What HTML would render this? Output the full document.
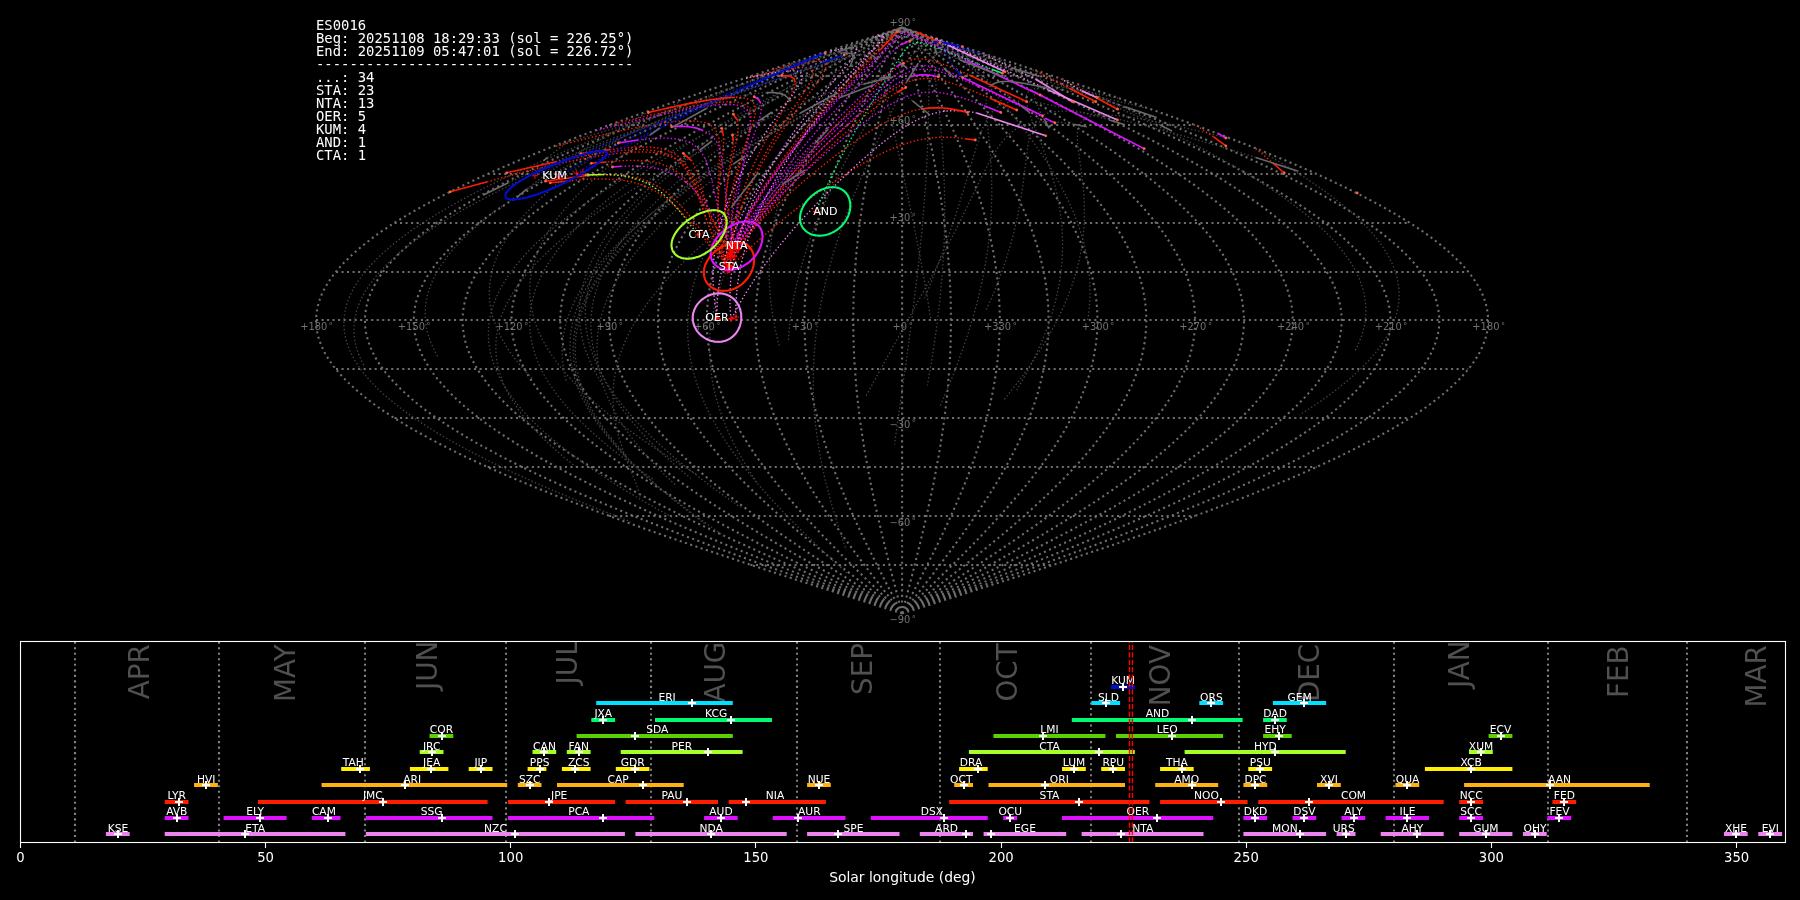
<!DOCTYPE html>
<html><head><meta charset="utf-8"><title>ES0016 meteor radiants</title>
<style>
html,body{margin:0;padding:0;background:#000;}
body{width:1800px;height:900px;overflow:hidden;}
svg{display:block;will-change:transform;}
text{font-family:"DejaVu Sans","Liberation Sans",sans-serif;}
.gl{font-size:9.9px;}
.dg{font-size:8px;}
.sl{font-size:11.1px;}
.mono text{font-family:"DejaVu Sans Mono","Liberation Mono",monospace;font-size:13.89px;}
.mon text{font-size:27.78px;}
.bl text{font-size:10.7px;}
.tl text{font-size:13.2px;}
.xl{font-size:13.89px;}
</style></head><body>
<svg width="1800" height="900" viewBox="0 0 1800 900">
<rect width="1800" height="900" fill="#000"/>
<g fill="none" stroke="#6e6e6e" stroke-width="2.08" stroke-dasharray="2.08 3.44">
<path d="M750.4 565H1053.8M609.1 516H1195.1M487.7 467H1316.5M394.5 418H1409.7M336 369H1468.2M316 320H1488.2M336 272H1468.2M394.5 223H1409.7M487.7 174H1316.5M609.1 125H1195.1M750.4 76H1053.8M902.1 613.5L922.6 607L943 600.5L963.4 594L983.7 587.5L1003.9 581L1024 574.5L1043.9 568L1063.6 561.4L1083.2 554.9L1102.6 548.4L1121.6 541.9L1140.5 535.4L1159 528.9L1177.2 522.4L1195.1 515.9L1212.7 509.3L1229.8 502.8L1246.6 496.3L1262.9 489.8L1278.8 483.3L1294.3 476.8L1309.2 470.3L1323.7 463.8L1337.6 457.3L1351.1 450.7L1363.9 444.2L1376.2 437.7L1388 431.2L1399.1 424.7L1409.7 418.2L1419.6 411.7L1428.9 405.2L1437.5 398.6L1445.5 392.1L1452.8 385.6L1459.5 379.1L1465.5 372.6L1470.8 366.1L1475.4 359.6L1479.3 353.1L1482.5 346.5L1485 340L1486.8 333.5L1487.8 327L1488.2 320.5L1487.8 314L1486.8 307.5L1485 301L1482.5 294.5L1479.3 287.9L1475.4 281.4L1470.8 274.9L1465.5 268.4L1459.5 261.9L1452.8 255.4L1445.5 248.9L1437.5 242.4L1428.9 235.8L1419.6 229.3L1409.7 222.8L1399.1 216.3L1388 209.8L1376.2 203.3L1363.9 196.8L1351.1 190.3L1337.6 183.7L1323.7 177.2L1309.2 170.7L1294.3 164.2L1278.8 157.7L1262.9 151.2L1246.6 144.7L1229.8 138.2L1212.7 131.7L1195.1 125.1L1177.2 118.6L1159 112.1L1140.5 105.6L1121.6 99.1L1102.6 92.6L1083.2 86.1L1063.6 79.6L1043.9 73L1024 66.5L1003.9 60L983.7 53.5L963.4 47L943 40.5L922.6 34L902.1 27.5M902.1 613.5L920.8 607L939.6 600.5L958.3 594L976.9 587.5L995.4 581L1013.8 574.5L1032.1 568L1050.2 561.4L1068.1 554.9L1085.8 548.4L1103.4 541.9L1120.6 535.4L1137.6 528.9L1154.3 522.4L1170.7 515.9L1186.8 509.3L1202.5 502.8L1217.9 496.3L1232.9 489.8L1247.4 483.3L1261.6 476.8L1275.3 470.3L1288.6 463.8L1301.3 457.3L1313.6 450.7L1325.5 444.2L1336.7 437.7L1347.5 431.2L1357.7 424.7L1367.4 418.2L1376.5 411.7L1385 405.2L1392.9 398.6L1400.2 392.1L1406.9 385.6L1413 379.1L1418.5 372.6L1423.4 366.1L1427.6 359.6L1431.2 353.1L1434.1 346.5L1436.4 340L1438 333.5L1439 327L1439.3 320.5L1439 314L1438 307.5L1436.4 301L1434.1 294.5L1431.2 287.9L1427.6 281.4L1423.4 274.9L1418.5 268.4L1413 261.9L1406.9 255.4L1400.2 248.9L1392.9 242.4L1385 235.8L1376.5 229.3L1367.4 222.8L1357.7 216.3L1347.5 209.8L1336.7 203.3L1325.5 196.8L1313.6 190.3L1301.3 183.7L1288.6 177.2L1275.3 170.7L1261.6 164.2L1247.4 157.7L1232.9 151.2L1217.9 144.7L1202.5 138.2L1186.8 131.7L1170.7 125.1L1154.3 118.6L1137.6 112.1L1120.6 105.6L1103.4 99.1L1085.8 92.6L1068.1 86.1L1050.2 79.6L1032.1 73L1013.8 66.5L995.4 60L976.9 53.5L958.3 47L939.6 40.5L920.8 34L902.1 27.5M902.1 613.5L919.1 607L936.2 600.5L953.2 594L970.1 587.5L986.9 581L1003.6 574.5L1020.3 568L1036.7 561.4L1053 554.9L1069.1 548.4L1085.1 541.9L1100.8 535.4L1116.2 528.9L1131.4 522.4L1146.3 515.9L1160.9 509.3L1175.2 502.8L1189.2 496.3L1202.8 489.8L1216 483.3L1228.9 476.8L1241.4 470.3L1253.4 463.8L1265.1 457.3L1276.2 450.7L1287 444.2L1297.2 437.7L1307 431.2L1316.3 424.7L1325.1 418.2L1333.3 411.7L1341.1 405.2L1348.3 398.6L1354.9 392.1L1361 385.6L1366.6 379.1L1371.6 372.6L1376 366.1L1379.8 359.6L1383.1 353.1L1385.7 346.5L1387.8 340L1389.3 333.5L1390.2 327L1390.5 320.5L1390.2 314L1389.3 307.5L1387.8 301L1385.7 294.5L1383.1 287.9L1379.8 281.4L1376 274.9L1371.6 268.4L1366.6 261.9L1361 255.4L1354.9 248.9L1348.3 242.4L1341.1 235.8L1333.3 229.3L1325.1 222.8L1316.3 216.3L1307 209.8L1297.2 203.3L1287 196.8L1276.2 190.3L1265.1 183.7L1253.4 177.2L1241.4 170.7L1228.9 164.2L1216 157.7L1202.8 151.2L1189.2 144.7L1175.2 138.2L1160.9 131.7L1146.3 125.1L1131.4 118.6L1116.2 112.1L1100.8 105.6L1085.1 99.1L1069.1 92.6L1053 86.1L1036.7 79.6L1020.3 73L1003.6 66.5L986.9 60L970.1 53.5L953.2 47L936.2 40.5L919.1 34L902.1 27.5M902.1 613.5L917.4 607L932.8 600.5L948 594L963.3 587.5L978.4 581L993.5 574.5L1008.4 568L1023.3 561.4L1037.9 554.9L1052.4 548.4L1066.8 541.9L1080.9 535.4L1094.8 528.9L1108.5 522.4L1121.9 515.9L1135 509.3L1147.9 502.8L1160.5 496.3L1172.7 489.8L1184.6 483.3L1196.2 476.8L1207.4 470.3L1218.3 463.8L1228.8 457.3L1238.8 450.7L1248.5 444.2L1257.7 437.7L1266.5 431.2L1274.9 424.7L1282.8 418.2L1290.2 411.7L1297.2 405.2L1303.7 398.6L1309.7 392.1L1315.2 385.6L1320.1 379.1L1324.6 372.6L1328.6 366.1L1332.1 359.6L1335 353.1L1337.4 346.5L1339.3 340L1340.6 333.5L1341.4 327L1341.7 320.5L1341.4 314L1340.6 307.5L1339.3 301L1337.4 294.5L1335 287.9L1332.1 281.4L1328.6 274.9L1324.6 268.4L1320.1 261.9L1315.2 255.4L1309.7 248.9L1303.7 242.4L1297.2 235.8L1290.2 229.3L1282.8 222.8L1274.9 216.3L1266.5 209.8L1257.7 203.3L1248.5 196.8L1238.8 190.3L1228.8 183.7L1218.3 177.2L1207.4 170.7L1196.2 164.2L1184.6 157.7L1172.7 151.2L1160.5 144.7L1147.9 138.2L1135 131.7L1121.9 125.1L1108.5 118.6L1094.8 112.1L1080.9 105.6L1066.8 99.1L1052.4 92.6L1037.9 86.1L1023.3 79.6L1008.4 73L993.5 66.5L978.4 60L963.3 53.5L948 47L932.8 40.5L917.4 34L902.1 27.5M902.1 613.5L915.7 607L929.4 600.5L942.9 594L956.5 587.5L969.9 581L983.3 574.5L996.6 568L1009.8 561.4L1022.8 554.9L1035.7 548.4L1048.5 541.9L1061 535.4L1073.4 528.9L1085.5 522.4L1097.5 515.9L1109.2 509.3L1120.6 502.8L1131.8 496.3L1142.7 489.8L1153.2 483.3L1163.5 476.8L1173.5 470.3L1183.2 463.8L1192.5 457.3L1201.4 450.7L1210 444.2L1218.2 437.7L1226 431.2L1233.4 424.7L1240.5 418.2L1247.1 411.7L1253.3 405.2L1259 398.6L1264.4 392.1L1269.3 385.6L1273.7 379.1L1277.7 372.6L1281.2 366.1L1284.3 359.6L1286.9 353.1L1289 346.5L1290.7 340L1291.9 333.5L1292.6 327L1292.8 320.5L1292.6 314L1291.9 307.5L1290.7 301L1289 294.5L1286.9 287.9L1284.3 281.4L1281.2 274.9L1277.7 268.4L1273.7 261.9L1269.3 255.4L1264.4 248.9L1259 242.4L1253.3 235.8L1247.1 229.3L1240.5 222.8L1233.4 216.3L1226 209.8L1218.2 203.3L1210 196.8L1201.4 190.3L1192.5 183.7L1183.2 177.2L1173.5 170.7L1163.5 164.2L1153.2 157.7L1142.7 151.2L1131.8 144.7L1120.6 138.2L1109.2 131.7L1097.5 125.1L1085.5 118.6L1073.4 112.1L1061 105.6L1048.5 99.1L1035.7 92.6L1022.8 86.1L1009.8 79.6L996.6 73L983.3 66.5L969.9 60L956.5 53.5L942.9 47L929.4 40.5L915.7 34L902.1 27.5M902.1 613.5L914 607L925.9 600.5L937.8 594L949.7 587.5L961.5 581L973.2 574.5L984.8 568L996.3 561.4L1007.7 554.9L1019 548.4L1030.2 541.9L1041.2 535.4L1052 528.9L1062.6 522.4L1073 515.9L1083.3 509.3L1093.3 502.8L1103.1 496.3L1112.6 489.8L1121.9 483.3L1130.9 476.8L1139.6 470.3L1148 463.8L1156.2 457.3L1164 450.7L1171.5 444.2L1178.7 437.7L1185.5 431.2L1192 424.7L1198.2 418.2L1204 411.7L1209.4 405.2L1214.4 398.6L1219.1 392.1L1223.4 385.6L1227.2 379.1L1230.7 372.6L1233.8 366.1L1236.5 359.6L1238.8 353.1L1240.7 346.5L1242.1 340L1243.1 333.5L1243.8 327L1244 320.5L1243.8 314L1243.1 307.5L1242.1 301L1240.7 294.5L1238.8 287.9L1236.5 281.4L1233.8 274.9L1230.7 268.4L1227.2 261.9L1223.4 255.4L1219.1 248.9L1214.4 242.4L1209.4 235.8L1204 229.3L1198.2 222.8L1192 216.3L1185.5 209.8L1178.7 203.3L1171.5 196.8L1164 190.3L1156.2 183.7L1148 177.2L1139.6 170.7L1130.9 164.2L1121.9 157.7L1112.6 151.2L1103.1 144.7L1093.3 138.2L1083.3 131.7L1073 125.1L1062.6 118.6L1052 112.1L1041.2 105.6L1030.2 99.1L1019 92.6L1007.7 86.1L996.3 79.6L984.8 73L973.2 66.5L961.5 60L949.7 53.5L937.8 47L925.9 40.5L914 34L902.1 27.5M902.1 613.5L912.3 607L922.5 600.5L932.7 594L942.9 587.5L953 581L963 574.5L973 568L982.9 561.4L992.7 554.9L1002.3 548.4L1011.9 541.9L1021.3 535.4L1030.6 528.9L1039.7 522.4L1048.6 515.9L1057.4 509.3L1066 502.8L1074.3 496.3L1082.5 489.8L1090.5 483.3L1098.2 476.8L1105.7 470.3L1112.9 463.8L1119.9 457.3L1126.6 450.7L1133 444.2L1139.2 437.7L1145 431.2L1150.6 424.7L1155.9 418.2L1160.8 411.7L1165.5 405.2L1169.8 398.6L1173.8 392.1L1177.5 385.6L1180.8 379.1L1183.8 372.6L1186.4 366.1L1188.7 359.6L1190.7 353.1L1192.3 346.5L1193.5 340L1194.4 333.5L1195 327L1195.1 320.5L1195 314L1194.4 307.5L1193.5 301L1192.3 294.5L1190.7 287.9L1188.7 281.4L1186.4 274.9L1183.8 268.4L1180.8 261.9L1177.5 255.4L1173.8 248.9L1169.8 242.4L1165.5 235.8L1160.8 229.3L1155.9 222.8L1150.6 216.3L1145 209.8L1139.2 203.3L1133 196.8L1126.6 190.3L1119.9 183.7L1112.9 177.2L1105.7 170.7L1098.2 164.2L1090.5 157.7L1082.5 151.2L1074.3 144.7L1066 138.2L1057.4 131.7L1048.6 125.1L1039.7 118.6L1030.6 112.1L1021.3 105.6L1011.9 99.1L1002.3 92.6L992.7 86.1L982.9 79.6L973 73L963 66.5L953 60L942.9 53.5L932.7 47L922.5 40.5L912.3 34L902.1 27.5M902.1 613.5L910.6 607L919.1 600.5L927.6 594L936.1 587.5L944.5 581L952.9 574.5L961.2 568L969.4 561.4L977.6 554.9L985.6 548.4L993.6 541.9L1001.4 535.4L1009.2 528.9L1016.7 522.4L1024.2 515.9L1031.5 509.3L1038.7 502.8L1045.6 496.3L1052.4 489.8L1059.1 483.3L1065.5 476.8L1071.7 470.3L1077.8 463.8L1083.6 457.3L1089.2 450.7L1094.5 444.2L1099.7 437.7L1104.6 431.2L1109.2 424.7L1113.6 418.2L1117.7 411.7L1121.6 405.2L1125.2 398.6L1128.5 392.1L1131.6 385.6L1134.3 379.1L1136.8 372.6L1139 366.1L1141 359.6L1142.6 353.1L1143.9 346.5L1145 340L1145.7 333.5L1146.2 327L1146.3 320.5L1146.2 314L1145.7 307.5L1145 301L1143.9 294.5L1142.6 287.9L1141 281.4L1139 274.9L1136.8 268.4L1134.3 261.9L1131.6 255.4L1128.5 248.9L1125.2 242.4L1121.6 235.8L1117.7 229.3L1113.6 222.8L1109.2 216.3L1104.6 209.8L1099.7 203.3L1094.5 196.8L1089.2 190.3L1083.6 183.7L1077.8 177.2L1071.7 170.7L1065.5 164.2L1059.1 157.7L1052.4 151.2L1045.6 144.7L1038.7 138.2L1031.5 131.7L1024.2 125.1L1016.7 118.6L1009.2 112.1L1001.4 105.6L993.6 99.1L985.6 92.6L977.6 86.1L969.4 79.6L961.2 73L952.9 66.5L944.5 60L936.1 53.5L927.6 47L919.1 40.5L910.6 34L902.1 27.5M902.1 613.5L908.9 607L915.7 600.5L922.5 594L929.3 587.5L936 581L942.7 574.5L949.4 568L955.9 561.4L962.5 554.9L968.9 548.4L975.3 541.9L981.6 535.4L987.7 528.9L993.8 522.4L999.8 515.9L1005.6 509.3L1011.3 502.8L1016.9 496.3L1022.4 489.8L1027.7 483.3L1032.8 476.8L1037.8 470.3L1042.6 463.8L1047.3 457.3L1051.8 450.7L1056 444.2L1060.1 437.7L1064.1 431.2L1067.8 424.7L1071.3 418.2L1074.6 411.7L1077.7 405.2L1080.6 398.6L1083.2 392.1L1085.7 385.6L1087.9 379.1L1089.9 372.6L1091.7 366.1L1093.2 359.6L1094.5 353.1L1095.6 346.5L1096.4 340L1097 333.5L1097.3 327L1097.5 320.5L1097.3 314L1097 307.5L1096.4 301L1095.6 294.5L1094.5 287.9L1093.2 281.4L1091.7 274.9L1089.9 268.4L1087.9 261.9L1085.7 255.4L1083.2 248.9L1080.6 242.4L1077.7 235.8L1074.6 229.3L1071.3 222.8L1067.8 216.3L1064.1 209.8L1060.1 203.3L1056 196.8L1051.8 190.3L1047.3 183.7L1042.6 177.2L1037.8 170.7L1032.8 164.2L1027.7 157.7L1022.4 151.2L1016.9 144.7L1011.3 138.2L1005.6 131.7L999.8 125.1L993.8 118.6L987.7 112.1L981.6 105.6L975.3 99.1L968.9 92.6L962.5 86.1L955.9 79.6L949.4 73L942.7 66.5L936 60L929.3 53.5L922.5 47L915.7 40.5L908.9 34L902.1 27.5M902.1 613.5L907.2 607L912.3 600.5L917.4 594L922.5 587.5L927.5 581L932.6 574.5L937.5 568L942.5 561.4L947.4 554.9L952.2 548.4L957 541.9L961.7 535.4L966.3 528.9L970.9 522.4L975.4 515.9L979.7 509.3L984 502.8L988.2 496.3L992.3 489.8L996.3 483.3L1000.1 476.8L1003.9 470.3L1007.5 463.8L1011 457.3L1014.3 450.7L1017.6 444.2L1020.6 437.7L1023.6 431.2L1026.4 424.7L1029 418.2L1031.5 411.7L1033.8 405.2L1036 398.6L1038 392.1L1039.8 385.6L1041.4 379.1L1042.9 372.6L1044.3 366.1L1045.4 359.6L1046.4 353.1L1047.2 346.5L1047.8 340L1048.3 333.5L1048.5 327L1048.6 320.5L1048.5 314L1048.3 307.5L1047.8 301L1047.2 294.5L1046.4 287.9L1045.4 281.4L1044.3 274.9L1042.9 268.4L1041.4 261.9L1039.8 255.4L1038 248.9L1036 242.4L1033.8 235.8L1031.5 229.3L1029 222.8L1026.4 216.3L1023.6 209.8L1020.6 203.3L1017.6 196.8L1014.3 190.3L1011 183.7L1007.5 177.2L1003.9 170.7L1000.1 164.2L996.3 157.7L992.3 151.2L988.2 144.7L984 138.2L979.7 131.7L975.4 125.1L970.9 118.6L966.3 112.1L961.7 105.6L957 99.1L952.2 92.6L947.4 86.1L942.5 79.6L937.5 73L932.6 66.5L927.5 60L922.5 53.5L917.4 47L912.3 40.5L907.2 34L902.1 27.5M902.1 613.5L905.5 607L908.9 600.5L912.3 594L915.7 587.5L919.1 581L922.4 574.5L925.7 568L929 561.4L932.3 554.9L935.5 548.4L938.7 541.9L941.8 535.4L944.9 528.9L948 522.4L950.9 515.9L953.9 509.3L956.7 502.8L959.5 496.3L962.2 489.8L964.9 483.3L967.5 476.8L970 470.3L972.4 463.8L974.7 457.3L976.9 450.7L979.1 444.2L981.1 437.7L983.1 431.2L984.9 424.7L986.7 418.2L988.3 411.7L989.9 405.2L991.3 398.6L992.7 392.1L993.9 385.6L995 379.1L996 372.6L996.9 366.1L997.6 359.6L998.3 353.1L998.8 346.5L999.2 340L999.5 333.5L999.7 327L999.8 320.5L999.7 314L999.5 307.5L999.2 301L998.8 294.5L998.3 287.9L997.6 281.4L996.9 274.9L996 268.4L995 261.9L993.9 255.4L992.7 248.9L991.3 242.4L989.9 235.8L988.3 229.3L986.7 222.8L984.9 216.3L983.1 209.8L981.1 203.3L979.1 196.8L976.9 190.3L974.7 183.7L972.4 177.2L970 170.7L967.5 164.2L964.9 157.7L962.2 151.2L959.5 144.7L956.7 138.2L953.9 131.7L950.9 125.1L948 118.6L944.9 112.1L941.8 105.6L938.7 99.1L935.5 92.6L932.3 86.1L929 79.6L925.7 73L922.4 66.5L919.1 60L915.7 53.5L912.3 47L908.9 40.5L905.5 34L902.1 27.5M902.1 613.5L903.8 607L905.5 600.5L907.2 594L908.9 587.5L910.6 581L912.3 574.5L913.9 568L915.6 561.4L917.2 554.9L918.8 548.4L920.4 541.9L922 535.4L923.5 528.9L925 522.4L926.5 515.9L928 509.3L929.4 502.8L930.8 496.3L932.2 489.8L933.5 483.3L934.8 476.8L936 470.3L937.2 463.8L938.4 457.3L939.5 450.7L940.6 444.2L941.6 437.7L942.6 431.2L943.5 424.7L944.4 418.2L945.2 411.7L946 405.2L946.7 398.6L947.4 392.1L948 385.6L948.5 379.1L949 372.6L949.5 366.1L949.9 359.6L950.2 353.1L950.5 346.5L950.7 340L950.8 333.5L950.9 327L950.9 320.5L950.9 314L950.8 307.5L950.7 301L950.5 294.5L950.2 287.9L949.9 281.4L949.5 274.9L949 268.4L948.5 261.9L948 255.4L947.4 248.9L946.7 242.4L946 235.8L945.2 229.3L944.4 222.8L943.5 216.3L942.6 209.8L941.6 203.3L940.6 196.8L939.5 190.3L938.4 183.7L937.2 177.2L936 170.7L934.8 164.2L933.5 157.7L932.2 151.2L930.8 144.7L929.4 138.2L928 131.7L926.5 125.1L925 118.6L923.5 112.1L922 105.6L920.4 99.1L918.8 92.6L917.2 86.1L915.6 79.6L913.9 73L912.3 66.5L910.6 60L908.9 53.5L907.2 47L905.5 40.5L903.8 34L902.1 27.5M902.1 613.5L902.1 607L902.1 600.5L902.1 594L902.1 587.5L902.1 581L902.1 574.5L902.1 568L902.1 561.4L902.1 554.9L902.1 548.4L902.1 541.9L902.1 535.4L902.1 528.9L902.1 522.4L902.1 515.9L902.1 509.3L902.1 502.8L902.1 496.3L902.1 489.8L902.1 483.3L902.1 476.8L902.1 470.3L902.1 463.8L902.1 457.3L902.1 450.7L902.1 444.2L902.1 437.7L902.1 431.2L902.1 424.7L902.1 418.2L902.1 411.7L902.1 405.2L902.1 398.6L902.1 392.1L902.1 385.6L902.1 379.1L902.1 372.6L902.1 366.1L902.1 359.6L902.1 353.1L902.1 346.5L902.1 340L902.1 333.5L902.1 327L902.1 320.5L902.1 314L902.1 307.5L902.1 301L902.1 294.5L902.1 287.9L902.1 281.4L902.1 274.9L902.1 268.4L902.1 261.9L902.1 255.4L902.1 248.9L902.1 242.4L902.1 235.8L902.1 229.3L902.1 222.8L902.1 216.3L902.1 209.8L902.1 203.3L902.1 196.8L902.1 190.3L902.1 183.7L902.1 177.2L902.1 170.7L902.1 164.2L902.1 157.7L902.1 151.2L902.1 144.7L902.1 138.2L902.1 131.7L902.1 125.1L902.1 118.6L902.1 112.1L902.1 105.6L902.1 99.1L902.1 92.6L902.1 86.1L902.1 79.6L902.1 73L902.1 66.5L902.1 60L902.1 53.5L902.1 47L902.1 40.5L902.1 34L902.1 27.5M902.1 613.5L900.4 607L898.7 600.5L897 594L895.3 587.5L893.6 581L891.9 574.5L890.3 568L888.6 561.4L887 554.9L885.4 548.4L883.8 541.9L882.2 535.4L880.7 528.9L879.2 522.4L877.7 515.9L876.2 509.3L874.8 502.8L873.4 496.3L872 489.8L870.7 483.3L869.4 476.8L868.2 470.3L867 463.8L865.8 457.3L864.7 450.7L863.6 444.2L862.6 437.7L861.6 431.2L860.7 424.7L859.8 418.2L859 411.7L858.2 405.2L857.5 398.6L856.8 392.1L856.2 385.6L855.7 379.1L855.2 372.6L854.7 366.1L854.3 359.6L854 353.1L853.7 346.5L853.5 340L853.4 333.5L853.3 327L853.3 320.5L853.3 314L853.4 307.5L853.5 301L853.7 294.5L854 287.9L854.3 281.4L854.7 274.9L855.2 268.4L855.7 261.9L856.2 255.4L856.8 248.9L857.5 242.4L858.2 235.8L859 229.3L859.8 222.8L860.7 216.3L861.6 209.8L862.6 203.3L863.6 196.8L864.7 190.3L865.8 183.7L867 177.2L868.2 170.7L869.4 164.2L870.7 157.7L872 151.2L873.4 144.7L874.8 138.2L876.2 131.7L877.7 125.1L879.2 118.6L880.7 112.1L882.2 105.6L883.8 99.1L885.4 92.6L887 86.1L888.6 79.6L890.3 73L891.9 66.5L893.6 60L895.3 53.5L897 47L898.7 40.5L900.4 34L902.1 27.5M902.1 613.5L898.7 607L895.3 600.5L891.9 594L888.5 587.5L885.1 581L881.8 574.5L878.5 568L875.2 561.4L871.9 554.9L868.7 548.4L865.5 541.9L862.4 535.4L859.3 528.9L856.2 522.4L853.3 515.9L850.3 509.3L847.5 502.8L844.7 496.3L842 489.8L839.3 483.3L836.7 476.8L834.2 470.3L831.8 463.8L829.5 457.3L827.3 450.7L825.1 444.2L823.1 437.7L821.1 431.2L819.3 424.7L817.5 418.2L815.9 411.7L814.3 405.2L812.9 398.6L811.5 392.1L810.3 385.6L809.2 379.1L808.2 372.6L807.3 366.1L806.6 359.6L805.9 353.1L805.4 346.5L805 340L804.7 333.5L804.5 327L804.4 320.5L804.5 314L804.7 307.5L805 301L805.4 294.5L805.9 287.9L806.6 281.4L807.3 274.9L808.2 268.4L809.2 261.9L810.3 255.4L811.5 248.9L812.9 242.4L814.3 235.8L815.9 229.3L817.5 222.8L819.3 216.3L821.1 209.8L823.1 203.3L825.1 196.8L827.3 190.3L829.5 183.7L831.8 177.2L834.2 170.7L836.7 164.2L839.3 157.7L842 151.2L844.7 144.7L847.5 138.2L850.3 131.7L853.3 125.1L856.2 118.6L859.3 112.1L862.4 105.6L865.5 99.1L868.7 92.6L871.9 86.1L875.2 79.6L878.5 73L881.8 66.5L885.1 60L888.5 53.5L891.9 47L895.3 40.5L898.7 34L902.1 27.5M902.1 613.5L897 607L891.9 600.5L886.8 594L881.7 587.5L876.7 581L871.6 574.5L866.7 568L861.7 561.4L856.8 554.9L852 548.4L847.2 541.9L842.5 535.4L837.9 528.9L833.3 522.4L828.8 515.9L824.5 509.3L820.2 502.8L816 496.3L811.9 489.8L807.9 483.3L804.1 476.8L800.3 470.3L796.7 463.8L793.2 457.3L789.9 450.7L786.6 444.2L783.6 437.7L780.6 431.2L777.8 424.7L775.2 418.2L772.7 411.7L770.4 405.2L768.2 398.6L766.2 392.1L764.4 385.6L762.8 379.1L761.3 372.6L759.9 366.1L758.8 359.6L757.8 353.1L757 346.5L756.4 340L755.9 333.5L755.7 327L755.6 320.5L755.7 314L755.9 307.5L756.4 301L757 294.5L757.8 287.9L758.8 281.4L759.9 274.9L761.3 268.4L762.8 261.9L764.4 255.4L766.2 248.9L768.2 242.4L770.4 235.8L772.7 229.3L775.2 222.8L777.8 216.3L780.6 209.8L783.6 203.3L786.6 196.8L789.9 190.3L793.2 183.7L796.7 177.2L800.3 170.7L804.1 164.2L807.9 157.7L811.9 151.2L816 144.7L820.2 138.2L824.5 131.7L828.8 125.1L833.3 118.6L837.9 112.1L842.5 105.6L847.2 99.1L852 92.6L856.8 86.1L861.7 79.6L866.7 73L871.6 66.5L876.7 60L881.7 53.5L886.8 47L891.9 40.5L897 34L902.1 27.5M902.1 613.5L895.3 607L888.5 600.5L881.7 594L874.9 587.5L868.2 581L861.5 574.5L854.8 568L848.3 561.4L841.7 554.9L835.3 548.4L828.9 541.9L822.6 535.4L816.5 528.9L810.4 522.4L804.4 515.9L798.6 509.3L792.9 502.8L787.3 496.3L781.8 489.8L776.5 483.3L771.4 476.8L766.4 470.3L761.6 463.8L756.9 457.3L752.4 450.7L748.2 444.2L744.1 437.7L740.1 431.2L736.4 424.7L732.9 418.2L729.6 411.7L726.5 405.2L723.6 398.6L721 392.1L718.5 385.6L716.3 379.1L714.3 372.6L712.5 366.1L711 359.6L709.7 353.1L708.6 346.5L707.8 340L707.2 333.5L706.9 327L706.7 320.5L706.9 314L707.2 307.5L707.8 301L708.6 294.5L709.7 287.9L711 281.4L712.5 274.9L714.3 268.4L716.3 261.9L718.5 255.4L721 248.9L723.6 242.4L726.5 235.8L729.6 229.3L732.9 222.8L736.4 216.3L740.1 209.8L744.1 203.3L748.2 196.8L752.4 190.3L756.9 183.7L761.6 177.2L766.4 170.7L771.4 164.2L776.5 157.7L781.8 151.2L787.3 144.7L792.9 138.2L798.6 131.7L804.4 125.1L810.4 118.6L816.5 112.1L822.6 105.6L828.9 99.1L835.3 92.6L841.7 86.1L848.3 79.6L854.8 73L861.5 66.5L868.2 60L874.9 53.5L881.7 47L888.5 40.5L895.3 34L902.1 27.5M902.1 613.5L893.6 607L885.1 600.5L876.6 594L868.1 587.5L859.7 581L851.3 574.5L843 568L834.8 561.4L826.6 554.9L818.6 548.4L810.6 541.9L802.8 535.4L795 528.9L787.5 522.4L780 515.9L772.7 509.3L765.5 502.8L758.6 496.3L751.8 489.8L745.1 483.3L738.7 476.8L732.5 470.3L726.4 463.8L720.6 457.3L715 450.7L709.7 444.2L704.5 437.7L699.6 431.2L695 424.7L690.6 418.2L686.5 411.7L682.6 405.2L679 398.6L675.7 392.1L672.6 385.6L669.9 379.1L667.4 372.6L665.2 366.1L663.2 359.6L661.6 353.1L660.3 346.5L659.2 340L658.5 333.5L658 327L657.9 320.5L658 314L658.5 307.5L659.2 301L660.3 294.5L661.6 287.9L663.2 281.4L665.2 274.9L667.4 268.4L669.9 261.9L672.6 255.4L675.7 248.9L679 242.4L682.6 235.8L686.5 229.3L690.6 222.8L695 216.3L699.6 209.8L704.5 203.3L709.7 196.8L715 190.3L720.6 183.7L726.4 177.2L732.5 170.7L738.7 164.2L745.1 157.7L751.8 151.2L758.6 144.7L765.5 138.2L772.7 131.7L780 125.1L787.5 118.6L795 112.1L802.8 105.6L810.6 99.1L818.6 92.6L826.6 86.1L834.8 79.6L843 73L851.3 66.5L859.7 60L868.1 53.5L876.6 47L885.1 40.5L893.6 34L902.1 27.5M902.1 613.5L891.9 607L881.7 600.5L871.5 594L861.3 587.5L851.2 581L841.2 574.5L831.2 568L821.3 561.4L811.5 554.9L801.9 548.4L792.3 541.9L782.9 535.4L773.6 528.9L764.5 522.4L755.6 515.9L746.8 509.3L738.2 502.8L729.9 496.3L721.7 489.8L713.7 483.3L706 476.8L698.5 470.3L691.3 463.8L684.3 457.3L677.6 450.7L671.2 444.2L665 437.7L659.2 431.2L653.6 424.7L648.3 418.2L643.4 411.7L638.7 405.2L634.4 398.6L630.4 392.1L626.7 385.6L623.4 379.1L620.4 372.6L617.8 366.1L615.5 359.6L613.5 353.1L611.9 346.5L610.7 340L609.8 333.5L609.2 327L609.1 320.5L609.2 314L609.8 307.5L610.7 301L611.9 294.5L613.5 287.9L615.5 281.4L617.8 274.9L620.4 268.4L623.4 261.9L626.7 255.4L630.4 248.9L634.4 242.4L638.7 235.8L643.4 229.3L648.3 222.8L653.6 216.3L659.2 209.8L665 203.3L671.2 196.8L677.6 190.3L684.3 183.7L691.3 177.2L698.5 170.7L706 164.2L713.7 157.7L721.7 151.2L729.9 144.7L738.2 138.2L746.8 131.7L755.6 125.1L764.5 118.6L773.6 112.1L782.9 105.6L792.3 99.1L801.9 92.6L811.5 86.1L821.3 79.6L831.2 73L841.2 66.5L851.2 60L861.3 53.5L871.5 47L881.7 40.5L891.9 34L902.1 27.5M902.1 613.5L890.2 607L878.3 600.5L866.4 594L854.5 587.5L842.7 581L831 574.5L819.4 568L807.9 561.4L796.5 554.9L785.2 548.4L774 541.9L763 535.4L752.2 528.9L741.6 522.4L731.2 515.9L720.9 509.3L710.9 502.8L701.1 496.3L691.6 489.8L682.3 483.3L673.3 476.8L664.6 470.3L656.2 463.8L648 457.3L640.2 450.7L632.7 444.2L625.5 437.7L618.7 431.2L612.2 424.7L606 418.2L600.2 411.7L594.8 405.2L589.8 398.6L585.1 392.1L580.8 385.6L577 379.1L573.5 372.6L570.4 366.1L567.7 359.6L565.4 353.1L563.5 346.5L562.1 340L561.1 333.5L560.4 327L560.2 320.5L560.4 314L561.1 307.5L562.1 301L563.5 294.5L565.4 287.9L567.7 281.4L570.4 274.9L573.5 268.4L577 261.9L580.8 255.4L585.1 248.9L589.8 242.4L594.8 235.8L600.2 229.3L606 222.8L612.2 216.3L618.7 209.8L625.5 203.3L632.7 196.8L640.2 190.3L648 183.7L656.2 177.2L664.6 170.7L673.3 164.2L682.3 157.7L691.6 151.2L701.1 144.7L710.9 138.2L720.9 131.7L731.2 125.1L741.6 118.6L752.2 112.1L763 105.6L774 99.1L785.2 92.6L796.5 86.1L807.9 79.6L819.4 73L831 66.5L842.7 60L854.5 53.5L866.4 47L878.3 40.5L890.2 34L902.1 27.5M902.1 613.5L888.5 607L874.8 600.5L861.3 594L847.7 587.5L834.3 581L820.9 574.5L807.6 568L794.4 561.4L781.4 554.9L768.5 548.4L755.7 541.9L743.2 535.4L730.8 528.9L718.7 522.4L706.7 515.9L695 509.3L683.6 502.8L672.4 496.3L661.5 489.8L651 483.3L640.7 476.8L630.7 470.3L621 463.8L611.7 457.3L602.8 450.7L594.2 444.2L586 437.7L578.2 431.2L570.8 424.7L563.7 418.2L557.1 411.7L550.9 405.2L545.2 398.6L539.8 392.1L534.9 385.6L530.5 379.1L526.5 372.6L523 366.1L519.9 359.6L517.3 353.1L515.2 346.5L513.5 340L512.3 333.5L511.6 327L511.4 320.5L511.6 314L512.3 307.5L513.5 301L515.2 294.5L517.3 287.9L519.9 281.4L523 274.9L526.5 268.4L530.5 261.9L534.9 255.4L539.8 248.9L545.2 242.4L550.9 235.8L557.1 229.3L563.7 222.8L570.8 216.3L578.2 209.8L586 203.3L594.2 196.8L602.8 190.3L611.7 183.7L621 177.2L630.7 170.7L640.7 164.2L651 157.7L661.5 151.2L672.4 144.7L683.6 138.2L695 131.7L706.7 125.1L718.7 118.6L730.8 112.1L743.2 105.6L755.7 99.1L768.5 92.6L781.4 86.1L794.4 79.6L807.6 73L820.9 66.5L834.3 60L847.7 53.5L861.3 47L874.8 40.5L888.5 34L902.1 27.5M902.1 613.5L886.8 607L871.4 600.5L856.2 594L840.9 587.5L825.8 581L810.7 574.5L795.8 568L780.9 561.4L766.3 554.9L751.8 548.4L737.4 541.9L723.3 535.4L709.4 528.9L695.7 522.4L682.3 515.9L669.2 509.3L656.3 502.8L643.7 496.3L631.5 489.8L619.6 483.3L608 476.8L596.8 470.3L585.9 463.8L575.4 457.3L565.4 450.7L555.7 444.2L546.5 437.7L537.7 431.2L529.3 424.7L521.4 418.2L514 411.7L507 405.2L500.5 398.6L494.5 392.1L489 385.6L484.1 379.1L479.6 372.6L475.6 366.1L472.1 359.6L469.2 353.1L466.8 346.5L464.9 340L463.6 333.5L462.8 327L462.5 320.5L462.8 314L463.6 307.5L464.9 301L466.8 294.5L469.2 287.9L472.1 281.4L475.6 274.9L479.6 268.4L484.1 261.9L489 255.4L494.5 248.9L500.5 242.4L507 235.8L514 229.3L521.4 222.8L529.3 216.3L537.7 209.8L546.5 203.3L555.7 196.8L565.4 190.3L575.4 183.7L585.9 177.2L596.8 170.7L608 164.2L619.6 157.7L631.5 151.2L643.7 144.7L656.3 138.2L669.2 131.7L682.3 125.1L695.7 118.6L709.4 112.1L723.3 105.6L737.4 99.1L751.8 92.6L766.3 86.1L780.9 79.6L795.8 73L810.7 66.5L825.8 60L840.9 53.5L856.2 47L871.4 40.5L886.8 34L902.1 27.5M902.1 613.5L885.1 607L868 600.5L851 594L834.1 587.5L817.3 581L800.6 574.5L783.9 568L767.5 561.4L751.2 554.9L735.1 548.4L719.1 541.9L703.4 535.4L688 528.9L672.8 522.4L657.9 515.9L643.3 509.3L629 502.8L615 496.3L601.4 489.8L588.2 483.3L575.3 476.8L562.8 470.3L550.8 463.8L539.1 457.3L528 450.7L517.2 444.2L507 437.7L497.2 431.2L487.9 424.7L479.1 418.2L470.9 411.7L463.1 405.2L455.9 398.6L449.3 392.1L443.2 385.6L437.6 379.1L432.6 372.6L428.2 366.1L424.4 359.6L421.1 353.1L418.5 346.5L416.4 340L414.9 333.5L414 327L413.7 320.5L414 314L414.9 307.5L416.4 301L418.5 294.5L421.1 287.9L424.4 281.4L428.2 274.9L432.6 268.4L437.6 261.9L443.2 255.4L449.3 248.9L455.9 242.4L463.1 235.8L470.9 229.3L479.1 222.8L487.9 216.3L497.2 209.8L507 203.3L517.2 196.8L528 190.3L539.1 183.7L550.8 177.2L562.8 170.7L575.3 164.2L588.2 157.7L601.4 151.2L615 144.7L629 138.2L643.3 131.7L657.9 125.1L672.8 118.6L688 112.1L703.4 105.6L719.1 99.1L735.1 92.6L751.2 86.1L767.5 79.6L783.9 73L800.6 66.5L817.3 60L834.1 53.5L851 47L868 40.5L885.1 34L902.1 27.5M902.1 613.5L883.4 607L864.6 600.5L845.9 594L827.3 587.5L808.8 581L790.4 574.5L772.1 568L754 561.4L736.1 554.9L718.4 548.4L700.8 541.9L683.6 535.4L666.6 528.9L649.9 522.4L633.5 515.9L617.4 509.3L601.7 502.8L586.3 496.3L571.3 489.8L556.8 483.3L542.6 476.8L528.9 470.3L515.6 463.8L502.9 457.3L490.6 450.7L478.7 444.2L467.5 437.7L456.7 431.2L446.5 424.7L436.8 418.2L427.7 411.7L419.2 405.2L411.3 398.6L404 392.1L397.3 385.6L391.2 379.1L385.7 372.6L380.8 366.1L376.6 359.6L373 353.1L370.1 346.5L367.8 340L366.2 333.5L365.2 327L364.9 320.5L365.2 314L366.2 307.5L367.8 301L370.1 294.5L373 287.9L376.6 281.4L380.8 274.9L385.7 268.4L391.2 261.9L397.3 255.4L404 248.9L411.3 242.4L419.2 235.8L427.7 229.3L436.8 222.8L446.5 216.3L456.7 209.8L467.5 203.3L478.7 196.8L490.6 190.3L502.9 183.7L515.6 177.2L528.9 170.7L542.6 164.2L556.8 157.7L571.3 151.2L586.3 144.7L601.7 138.2L617.4 131.7L633.5 125.1L649.9 118.6L666.6 112.1L683.6 105.6L700.8 99.1L718.4 92.6L736.1 86.1L754 79.6L772.1 73L790.4 66.5L808.8 60L827.3 53.5L845.9 47L864.6 40.5L883.4 34L902.1 27.5M902.1 613.5L881.6 607L861.2 600.5L840.8 594L820.5 587.5L800.3 581L780.2 574.5L760.3 568L740.6 561.4L721 554.9L701.6 548.4L682.6 541.9L663.7 535.4L645.2 528.9L627 522.4L609.1 515.9L591.5 509.3L574.4 502.8L557.6 496.3L541.3 489.8L525.4 483.3L509.9 476.8L495 470.3L480.5 463.8L466.6 457.3L453.1 450.7L440.3 444.2L428 437.7L416.2 431.2L405.1 424.7L394.5 418.2L384.6 411.7L375.3 405.2L366.7 398.6L358.7 392.1L351.4 385.6L344.7 379.1L338.7 372.6L333.4 366.1L328.8 359.6L324.9 353.1L321.7 346.5L319.2 340L317.4 333.5L316.4 327L316 320.5L316.4 314L317.4 307.5L319.2 301L321.7 294.5L324.9 287.9L328.8 281.4L333.4 274.9L338.7 268.4L344.7 261.9L351.4 255.4L358.7 248.9L366.7 242.4L375.3 235.8L384.6 229.3L394.5 222.8L405.1 216.3L416.2 209.8L428 203.3L440.3 196.8L453.1 190.3L466.6 183.7L480.5 177.2L495 170.7L509.9 164.2L525.4 157.7L541.3 151.2L557.6 144.7L574.4 138.2L591.5 131.7L609.1 125.1L627 118.6L645.2 112.1L663.7 105.6L682.6 99.1L701.6 92.6L721 86.1L740.6 79.6L760.3 73L780.2 66.5L800.3 60L820.5 53.5L840.8 47L861.2 40.5L881.6 34L902.1 27.5"/>
</g>
<g fill="#727272">
<text x="316.5" y="330.1" text-anchor="middle" class="gl">+180<tspan class="dg" dx="1.6" dy="-1.4">°</tspan></text>
<text x="414.2" y="330.1" text-anchor="middle" class="gl">+150<tspan class="dg" dx="1.6" dy="-1.4">°</tspan></text>
<text x="511.9" y="330.1" text-anchor="middle" class="gl">+120<tspan class="dg" dx="1.6" dy="-1.4">°</tspan></text>
<text x="609.6" y="330.1" text-anchor="middle" class="gl">+90<tspan class="dg" dx="1.6" dy="-1.4">°</tspan></text>
<text x="707.2" y="330.1" text-anchor="middle" class="gl">+60<tspan class="dg" dx="1.6" dy="-1.4">°</tspan></text>
<text x="804.9" y="330.1" text-anchor="middle" class="gl">+30<tspan class="dg" dx="1.6" dy="-1.4">°</tspan></text>
<text x="902.6" y="330.1" text-anchor="middle" class="gl">+0<tspan class="dg" dx="1.6" dy="-1.4">°</tspan></text>
<text x="1000.3" y="330.1" text-anchor="middle" class="gl">+330<tspan class="dg" dx="1.6" dy="-1.4">°</tspan></text>
<text x="1098" y="330.1" text-anchor="middle" class="gl">+300<tspan class="dg" dx="1.6" dy="-1.4">°</tspan></text>
<text x="1195.6" y="330.1" text-anchor="middle" class="gl">+270<tspan class="dg" dx="1.6" dy="-1.4">°</tspan></text>
<text x="1293.3" y="330.1" text-anchor="middle" class="gl">+240<tspan class="dg" dx="1.6" dy="-1.4">°</tspan></text>
<text x="1391" y="330.1" text-anchor="middle" class="gl">+210<tspan class="dg" dx="1.6" dy="-1.4">°</tspan></text>
<text x="1488.7" y="330.1" text-anchor="middle" class="gl">+180<tspan class="dg" dx="1.6" dy="-1.4">°</tspan></text>
<text x="902.6" y="25.9" text-anchor="middle" class="gl">+90<tspan class="dg" dx="1.6" dy="-1.4">°</tspan></text>
<text x="902.6" y="123.5" text-anchor="middle" class="gl">+60<tspan class="dg" dx="1.6" dy="-1.4">°</tspan></text>
<text x="902.6" y="221.2" text-anchor="middle" class="gl">+30<tspan class="dg" dx="1.6" dy="-1.4">°</tspan></text>
<text x="902.6" y="427.8" text-anchor="middle" class="gl">−30<tspan class="dg" dx="1.6" dy="-1.4">°</tspan></text>
<text x="902.6" y="525.5" text-anchor="middle" class="gl">−60<tspan class="dg" dx="1.6" dy="-1.4">°</tspan></text>
<text x="902.6" y="623.1" text-anchor="middle" class="gl">−90<tspan class="dg" dx="1.6" dy="-1.4">°</tspan></text>
</g>
<g fill="none" stroke-width="1.3" stroke-dasharray="1.39 2.29">
<path d="M508.3 182.8L515.1 179.6L522.1 176.4L529.1 173.2L536.3 170L543.5 166.9L550.8 163.7L558.3 160.5L565.8 157.3L573.5 154.1L581.2 151L589 147.8L596.8 144.7L604.8 141.5L612.8 138.4L620.9 135.2L629.1 132.1L637.3 128.9L645.6 125.8L653.9 122.7L662.3 119.6L670.7 116.5L679.2 113.4L687.7 110.3L696.2 107.3L704.7 104.2L713.2 101.2L721.8 98.2L730.3 95.2L738.9 92.3L747.4 89.3L755.8 86.4L764.2 83.6L772.5 80.7L780.8 78L788.9 75.3L796.9 72.6L804.7 70.1L812.3 67.6L819.6 65.3L826.7 63.1L833.4 61.1L839.7 59.3L845.5 57.7L850.8 56.4L855.6 55.5L859.8 54.8L863.4 54.6L866.5 54.7L869 55.3L871.2 56.1L873 57.4L874.5 58.9L875.8 60.6L876.9 62.6L877.9 64.7L878.8 67L879.6 69.4L880.4 72L881.2 74.6L881.9 77.3L882.6 80L883.3 82.8L884 85.7L884.6 88.6L885.3 91.5L886 94.5L886.6 97.4L887.3 100.4L887.9 103.5L888.6 106.5L889.2 109.6L889.9 112.6L890.6 115.7L891.2 118.8L891.9 121.9L892.6 125L893.2 128.1L893.9 131.3L894.6 134.4L895.2 137.5L895.9 140.7L896.6 143.8L897.3 147L898 150.2L898.6 153.3L899.3 156.5L900 159.7L900.7 162.9L901.4 166L902.1 169.2L902.7 172.4L903.4 175.6L904.1 178.8L904.8 182L905.5 185.2L906.2 188.4L906.8 191.6L907.5 194.8L908.2 198L908.9 201.2L909.5 204.4L910.2 207.6L910.9 210.8L911.6 214L912.2 217.2L912.9 220.4L913.5 223.6L914.2 226.8L914.8 230.1L915.5 233.3L916.1 236.5L916.8 239.7L917.4 242.9L918 246.1L918.7 249.3L919.3 252.6L919.9 255.8L920.5 259L921.1 262.2L921.7 265.4L922.3 268.7L922.9 271.9L923.5 275.1L924 278.3L924.6 281.5L925.2 284.8L925.7 288L926.3 291.2L926.8 294.4L927.4 297.7L927.9 300.9L928.4 304.1L928.9 307.3L929.4 310.5L929.9 313.8L930.4 317L930.9 320.2" stroke="#454545"/>
<path d="M526.7 189.2L530.4 186.2L534.3 183.3L538.2 180.3L542.1 177.4L546.2 174.5L550.3 171.6L554.4 168.7L558.7 165.8L562.9 162.9L567.3 160L571.6 157.2L576.1 154.4L580.5 151.6L585 148.8L589.5 146L594 143.3L598.5 140.5L603.1 137.8L607.6 135.2L612.1 132.5L616.6 129.9L621.1 127.4L625.5 124.8L629.9 122.3L634.1 119.9L638.4 117.5L642.5 115.1L646.5 112.8L650.4 110.6M1147.1 108.4L1138.6 106.3L1130.4 104.3L1122.3 102.4L1114.5 100.5L1107 98.8L1099.7 97.1L1092.7 95.6L1085.9 94.2L1079.6 92.9L1073.5 91.7L1067.8 90.7L1062.5 89.8L1057.6 89.1L1053 88.6L1048.9 88.2L1045.1 88L1041.8 87.9L1038.8 88.1L1036.1 88.3L1033.8 88.8L1031.9 89.4L1030.3 90.2L1029 91.1L1027.9 92.2L1027.1 93.4L1026.5 94.8L1026.2 96.2L1026 97.8L1026 99.5L1026.2 101.3L1026.5 103.2L1026.9 105.2L1027.5 107.2L1028.1 109.4L1028.8 111.6L1029.5 113.8L1030.4 116.1L1031.3 118.5L1032.2 120.9L1033.2 123.4L1034.2 125.9L1035.2 128.5L1036.2 131L1037.3 133.7L1038.3 136.3L1039.4 139L1040.4 141.7L1041.5 144.4L1042.6 147.2L1043.6 150L1044.6 152.8L1045.6 155.6L1046.6 158.4L1047.6 161.3L1048.6 164.1L1049.5 167L1050.4 169.9L1051.3 172.8L1052.2 175.7L1053 178.7L1053.8 181.6L1054.6 184.6L1055.4 187.5L1056.1 190.5L1056.8 193.5L1057.4 196.4L1058 199.4L1058.6 202.4L1059.1 205.4L1059.6 208.4L1060.1 211.5L1060.5 214.5L1060.9 217.5L1061.3 220.5L1061.6 223.6L1061.8 226.6L1062.1 229.7L1062.2 232.7L1062.4 235.8L1062.5 238.8L1062.5 241.9L1062.6 245L1062.5 248L1062.5 251.1L1062.4 254.2L1062.2 257.2L1062 260.3L1061.8 263.4L1061.5 266.5L1061.2 269.6L1060.8 272.6L1060.4 275.7L1060 278.8L1059.5 281.9L1058.9 285L1058.3 288.1L1057.7 291.2L1057.1 294.3L1056.3 297.4L1055.6 300.5L1054.8 303.6L1054 306.6L1053.1 309.7L1052.2 312.8L1051.2 315.9L1050.2 319L1049.2 322.1L1048.1 325.2L1047 328.3L1045.8 331.4L1044.6 334.5L1043.4 337.6L1042.1 340.7L1040.8 343.8L1039.4 346.9L1038 350L1036.6 353.1L1035.1 356.2L1033.6 359.3L1032.1 362.4L1030.5 365.4L1028.9 368.5L1027.2 371.6L1025.6 374.7L1023.8 377.8L1022.1 380.9L1020.3 383.9L1018.5 387L1016.7 390.1" stroke="#454545"/>
<path d="M547.5 157.5L550.5 155.2L553.4 152.9L556.3 150.7L559.1 148.5L561.9 146.4L564.6 144.3L567.3 142.2L569.8 140.2M1228.2 138.2L1220.6 136.3L1213.2 134.5L1205.8 132.7L1198.6 131L1191.6 129.4L1184.7 127.8L1178 126.3L1171.5 124.9L1165.2 123.5L1159 122.3L1153.1 121.1L1147.4 120L1141.9 119L1136.7 118.2L1131.6 117.4L1126.9 116.7L1122.3 116.1L1118 115.7L1114 115.3L1110.2 115.1L1106.6 114.9L1103.3 114.9L1100.3 115L1097.4 115.2L1094.8 115.5L1092.5 116L1090.3 116.5L1088.4 117.1L1086.6 117.9L1085 118.7L1083.6 119.7L1082.4 120.7L1081.4 121.9L1080.4 123.1L1079.7 124.4L1079 125.8L1078.5 127.3L1078.1 128.8L1077.7 130.5L1077.5 132.2L1077.3 133.9L1077.3 135.7L1077.3 137.6L1077.3 139.6L1077.4 141.6L1077.6 143.6L1077.8 145.7L1078 147.8L1078.3 150L1078.6 152.2L1078.9 154.5L1079.2 156.8L1079.5 159.1L1079.9 161.4L1080.2 163.8L1080.6 166.2L1080.9 168.7L1081.3 171.2L1081.6 173.7L1081.9 176.2L1082.2 178.7L1082.5 181.3L1082.8 183.9L1083.1 186.5L1083.3 189.1L1083.6 191.7L1083.8 194.4L1083.9 197.1L1084.1 199.7L1084.2 202.4L1084.3 205.2L1084.4 207.9L1084.4 210.6L1084.4 213.4L1084.4 216.1L1084.3 218.9L1084.2 221.7L1084.1 224.5L1083.9 227.2L1083.7 230.1L1083.4 232.9L1083.2 235.7L1082.8 238.5L1082.5 241.3L1082.1 244.2L1081.6 247L1081.2 249.9L1080.6 252.7L1080.1 255.6L1079.5 258.5L1078.8 261.3L1078.2 264.2L1077.4 267.1L1076.7 270L1075.9 272.9L1075 275.7L1074.2 278.6L1073.2 281.5L1072.3 284.4L1071.3 287.3L1070.2 290.2L1069.1 293.1L1068 296L1066.8 298.9L1065.6 301.9L1064.4 304.8L1063.1 307.7L1061.8 310.6L1060.4 313.5L1059 316.4L1057.6 319.3L1056.1 322.2L1054.6 325.2L1053 328.1L1051.4 331L1049.8 333.9L1048.1 336.8L1046.4 339.7L1044.7 342.6L1042.9 345.5L1041.1 348.4L1039.3 351.3L1037.4 354.2L1035.5 357.1L1033.6 360L1031.6 362.9L1029.6 365.8L1027.6 368.7L1025.6 371.6L1023.5 374.5L1021.4 377.4L1019.2 380.2L1017.1 383.1L1014.9 386L1012.7 388.8L1010.4 391.7L1008.2 394.5L1005.9 397.4L1003.6 400.2" stroke="#454545"/>
<path d="M706.7 108.3L712.4 105.3L718 102.3L723.7 99.3L729.4 96.3L735 93.4L740.6 90.5L746.2 87.6L751.7 84.8L757 82L762.3 79.3L767.5 76.6L772.4 74L777.2 71.5L781.7 69.2L785.8 66.9L789.5 64.8L792.7 62.8M1005.6 61.1L998.1 59.6L991.5 58.4L985.8 57.4L981 56.9L977.1 56.6L974.1 56.7L972.1 57.2L970.8 58.1L970.2 59.2L970.2 60.6L970.7 62.3L971.6 64.2L972.9 66.2L974.4 68.5L976.1 70.8L978 73.3L980.1 75.8L982.3 78.5L984.5 81.2L986.8 83.9L989.2 86.7L991.6 89.6L994.1 92.5L996.5 95.4L999 98.4L1001.5 101.4L1004 104.4L1006.5 107.4L1009 110.4L1011.4 113.5L1013.9 116.6L1016.4 119.6L1018.8 122.7L1021.2 125.8L1023.6 128.9L1025.9 132.1L1028.3 135.2L1030.6 138.3L1032.9 141.5L1035.1 144.6L1037.3 147.8L1039.5 151L1041.6 154.1L1043.8 157.3L1045.8 160.5L1047.9 163.6L1049.9 166.8L1051.8 170L1053.7 173.2L1055.6 176.4L1057.4 179.6L1059.2 182.8L1060.9 186L1062.6 189.2L1064.3 192.4L1065.9 195.6L1067.4 198.8L1068.9 202L1070.4 205.2L1071.8 208.4L1073.2 211.6L1074.5 214.8L1075.7 218.1L1077 221.3L1078.1 224.5L1079.2 227.7L1080.3 230.9L1081.3 234.1L1082.2 237.4L1083.1 240.6L1084 243.8L1084.7 247L1085.5 250.3L1086.2 253.5L1086.8 256.7L1087.3 259.9L1087.9 263.2L1088.3 266.4L1088.7 269.6L1089.1 272.8L1089.4 276.1L1089.6 279.3L1089.8 282.5L1089.9 285.8L1090 289L1090 292.2L1089.9 295.4L1089.8 298.7L1089.7 301.9L1089.4 305.1L1089.2 308.4L1088.8 311.6L1088.5 314.8L1088 318.1L1087.5 321.3" stroke="#454545"/>
<path d="M766.7 92.5L763 92.7L758.9 93.1L754.6 93.7L749.9 94.4L744.9 95.2L739.7 96.2L734.1 97.3L728.2 98.5L722.1 99.8L715.7 101.3L709.1 102.9L702.2 104.5L695.1 106.3L687.9 108.2L680.4 110.1L672.8 112.1L665.1 114.2L657.2 116.3L649.1 118.5L641 120.8L632.8 123.1L624.5 125.5L616.1 127.9L607.6 130.3L599.2 132.8L590.6 135.3L582.1 137.9L573.5 140.5L564.9 143.1L556.3 145.8M1255.8 148.5L1260.6 151.2L1265.5 153.9L1270.3 156.6L1275.1 159.4L1279.9 162.2L1284.6 165L1289.3 167.8L1293.9 170.6L1298.4 173.5L1302.9 176.3L1307.3 179.2L1311.6 182.1L1315.9 185L1320.1 187.9L1324.2 190.8L1328.2 193.7L1332.1 196.6L1336 199.6L1339.7 202.5L1343.4 205.5L1346.9 208.4L1350.4 211.4L1353.7 214.4L1357 217.4L1360.1 220.4L1363.1 223.3L1366 226.3L1368.8 229.3L1371.5 232.4L1374.1 235.4L1376.5 238.4L1378.8 241.4L1381 244.4L1383.1 247.4L1385.1 250.5L1386.9 253.5L1388.6 256.5L1390.2 259.6L1391.7 262.6L1393 265.7L1394.2 268.7L1395.2 271.8L1396.2 274.8L1397 277.9L1397.7 280.9L1398.2 284L1398.6 287L1398.9 290.1L1399.1 293.1L1399.1 296.2L1398.9 299.3L1398.7 302.3L1398.3 305.4L1397.8 308.4L1397.1 311.5L1396.3 314.6L1395.4 317.6L1394.4 320.7L1393.2 323.7L1391.9 326.8L1390.4 329.9L1388.8 332.9L1387.1 336L1385.3 339.1L1383.3 342.1L1381.2 345.2L1379 348.2L1376.6 351.3L1374.1 354.3L1371.5 357.4L1368.8 360.5L1365.9 363.5L1362.9 366.6L1359.8 369.6L1356.6 372.7L1353.3 375.7L1349.8 378.7L1346.2 381.8L1342.5 384.8L1338.7 387.9L1334.8 390.9L1330.7 393.9L1326.6 396.9L1322.3 400L1318 403L1313.5 406L1308.9 409L1304.3 412L1299.5 415" stroke="#454545"/>
<path d="M800 113.3L795.2 116.1L790.4 118.8L785.5 121.6L780.7 124.5L775.9 127.3L771 130.2L766.2 133.1L761.4 136L756.6 139L751.8 141.9L747.1 144.9L742.3 147.9L737.6 150.9L733 153.9L728.3 156.9L723.7 159.9L719.1 163L714.6 166L710.1 169.1L705.7 172.1L701.3 175.2L696.9 178.3L692.6 181.3L688.3 184.4L684.1 187.5L680 190.6L675.9 193.7L671.9 196.8L667.9 199.9L664 203L660.1 206.2L656.4 209.3L652.6 212.4L649 215.5L645.4 218.7L641.9 221.8L638.5 224.9L635.1 228.1L631.8 231.2L628.6 234.4L625.4 237.5L622.4 240.7L619.4 243.8L616.5 247L613.6 250.1L610.9 253.3L608.2 256.4L605.7 259.6L603.2 262.7L600.7 265.9L598.4 269L596.2 272.2L594 275.4L592 278.5L590 281.7L588.1 284.9L586.3 288L584.6 291.2L583 294.4L581.5 297.5L580.1 300.7L578.7 303.9L577.5 307L576.3 310.2L575.3 313.4L574.3 316.5L573.5 319.7L572.7 322.9L572 326L571.4 329.2L570.9 332.4L570.5 335.5L570.3 338.7L570.1 341.9L570 345.1L569.9 348.2L570 351.4L570.2 354.6L570.5 357.7L570.9 360.9L571.3 364L571.9 367.2L572.6 370.4L573.3 373.5L574.2 376.7L575.1 379.8L576.1 383L577.3 386.2L578.5 389.3L579.8 392.5L581.2 395.6L582.7 398.8L584.3 401.9L585.9 405.1L587.7 408.2L589.5 411.4L591.5 414.5L593.5 417.6L595.6 420.8L597.8 423.9L600 427L602.4 430.2L604.8 433.3L607.3 436.4L609.9 439.5L612.6 442.6L615.3 445.7L618.1 448.8L621 451.9L624 455L627 458.1L630.1 461.2L633.3 464.3L636.5 467.3L639.8 470.4L643.1 473.5L646.5 476.5L650 479.5L653.5 482.6L657.1 485.6L660.7 488.6L664.3 491.6L668 494.6L671.8 497.6L675.5 500.5L679.3 503.5L683.2 506.4L687 509.3L690.9 512.2L694.7 515.1L698.6 517.9L702.5 520.8L706.4 523.6L710.2 526.3L714 529.1L717.8 531.8L721.6 534.4L725.3 537" stroke="#454545"/>
<path d="M840 97.5L835.7 99.5L831.3 101.6L826.9 103.8L822.4 106.1L817.8 108.4L813.2 110.7L808.6 113.2L803.9 115.7L799.3 118.2L794.5 120.8L789.8 123.4L785 126L780.3 128.7L775.5 131.4L770.7 134.2L765.9 136.9L761.2 139.7L756.4 142.5L751.6 145.4L746.9 148.2L742.2 151.1L737.4 154L732.8 156.9L728.1 159.8L723.5 162.7L718.9 165.7L714.3 168.6L709.8 171.6L705.3 174.6L700.8 177.5L696.4 180.5L692 183.5L687.7 186.5L683.4 189.6L679.2 192.6L675.1 195.6L670.9 198.7L666.9 201.7L662.9 204.8L658.9 207.8L655 210.9L651.2 213.9L647.5 217L643.8 220.1L640.2 223.2L636.6 226.2L633.1 229.3L629.7 232.4L626.3 235.5L623.1 238.6L619.9 241.7L616.8 244.8L613.7 247.9L610.8 251L607.9 254.1L605.1 257.2L602.4 260.3L599.7 263.4L597.2 266.6L594.7 269.7L592.3 272.8L590 275.9L587.8 279L585.7 282.2L583.6 285.3L581.7 288.4L579.8 291.5L578.1 294.7L576.4 297.8L574.8 300.9L573.3 304L571.9 307.2L570.6 310.3L569.4 313.4L568.2 316.5L567.2 319.7L566.3 322.8L565.4 325.9L564.7 329.1L564 332.2L563.5 335.3L563 338.4L562.7 341.6L562.4 344.7L562.2 347.8L562.1 350.9L562.1 354.1L562.3 357.2L562.5 360.3L562.8 363.4L563.2 366.6L563.6 369.7L564.2 372.8L564.9 375.9L565.7 379L566.5 382.1" stroke="#454545"/>
<path d="M863.3 84.2L859.4 85.9L855.3 87.7L851.2 89.6L847 91.6L842.8 93.7L838.5 95.9L834.1 98.2L829.6 100.5L825.2 102.9L820.6 105.4L816.1 107.9L811.5 110.5L806.8 113.1L802.2 115.7L797.5 118.4L792.9 121.1L788.2 123.9L783.5 126.7L778.8 129.5L774.1 132.3L769.4 135.1L764.7 138L760.1 140.9L755.4 143.8L750.8 146.7L746.2 149.7L741.6 152.6L737 155.6L732.5 158.5L728 161.5L723.6 164.5L719.1 167.5L714.7 170.5L710.4 173.6L706.1 176.6L701.8 179.6L697.6 182.7L693.4 185.7L689.3 188.8L685.3 191.8L681.3 194.9L677.3 198L673.4 201.1L669.6 204.1L665.8 207.2L662.1 210.3L658.4 213.4L654.8 216.5L651.3 219.6L647.8 222.7L644.4 225.8L641.1 228.9L637.8 232L634.7 235.2L631.5 238.3L628.5 241.4L625.6 244.5L622.7 247.6L619.9 250.8L617.1 253.9L614.5 257L611.9 260.1L609.4 263.3L607 266.4L604.7 269.5L602.5 272.7L600.3 275.8L598.2 278.9L596.2 282.1L594.3 285.2L592.5 288.4L590.8 291.5L589.2 294.6L587.6 297.8L586.2 300.9L584.8 304.1L583.5 307.2L582.3 310.4L581.2 313.5L580.2 316.6L579.3 319.8L578.5 322.9L577.8 326.1L577.1 329.2L576.6 332.4L576.1 335.5L575.7 338.6L575.5 341.8L575.3 344.9L575.2 348.1L575.2 351.2L575.3 354.4L575.5 357.5L575.8 360.6L576.2 363.8L576.6 366.9L577.2 370L577.8 373.2L578.6 376.3L579.4 379.4L580.3 382.6L581.4 385.7L582.5 388.8L583.6 392L584.9 395.1L586.3 398.2L587.7 401.3L589.3 404.4L590.9 407.6L592.6 410.7L594.4 413.8L596.3 416.9L598.2 420L600.3 423.1L602.4 426.2L604.6 429.3L606.9 432.4L609.2 435.5L611.6 438.5L614.1 441.6L616.7 444.7L619.4 447.8L622.1 450.8L624.9 453.9L627.7 456.9" stroke="#454545"/>
<path d="M815 143.3L812.1 146.5L809.2 149.6L806.3 152.8L803.5 156L800.6 159.2L797.8 162.4L795.1 165.6L792.3 168.8L789.6 172L786.9 175.2L784.3 178.4L781.7 181.6L779.1 184.8L776.6 188.1L774.1 191.3L771.6 194.5L769.2 197.7L766.8 200.9L764.4 204.2L762.1 207.4L759.9 210.6L757.6 213.9L755.4 217.1L753.3 220.3L751.2 223.5L749.1 226.8L747.1 230L745.2 233.2L743.3 236.5L741.4 239.7L739.6 243L737.8 246.2L736.1 249.4L734.4 252.7L732.8 255.9L731.2 259.2L729.7 262.4L728.2 265.6L726.8 268.9L725.5 272.1L724.2 275.4L722.9 278.6L721.7 281.9L720.6 285.1L719.5 288.4L718.4 291.6L717.5 294.8L716.5 298.1L715.7 301.3L714.9 304.6L714.1 307.8L713.4 311.1L712.8 314.3L712.2 317.6L711.7 320.8L711.2 324.1L710.8 327.3L710.4 330.5L710.1 333.8L709.9 337L709.7 340.3L709.6 343.5L709.5 346.8L709.5 350L709.6 353.3L709.7 356.5L709.9 359.8L710.1 363L710.4 366.2L710.7 369.5L711.1 372.7L711.6 376L712.1 379.2L712.7 382.5L713.3 385.7L714 388.9L714.7 392.2L715.5 395.4L716.4 398.7L717.3 401.9L718.3 405.1L719.3 408.4L720.4 411.6L721.5 414.8L722.7 418.1L723.9 421.3L725.2 424.5L726.6 427.8L728 431L729.4 434.2L730.9 437.4L732.5 440.7L734.1 443.9L735.7 447.1L737.4 450.3L739.2 453.5L740.9 456.8L742.8 460L744.7 463.2L746.6 466.4L748.6 469.6L750.6 472.8L752.6 476L754.7 479.2L756.8 482.4" stroke="#454545"/>
<path d="M733.3 164.2L729.1 167.3L724.9 170.4L720.8 173.5L716.8 176.6L712.7 179.7L708.7 182.8L704.8 185.9L700.9 189L697.1 192.1L693.3 195.3L689.6 198.4L686 201.5L682.4 204.7L678.8 207.8L675.3 211L671.9 214.1L668.5 217.3L665.3 220.4L662 223.6L658.9 226.7L655.8 229.9L652.8 233.1L649.8 236.2L646.9 239.4L644.1 242.6L641.4 245.7L638.7 248.9L636.1 252.1L633.6 255.2L631.2 258.4L628.8 261.6L626.6 264.8L624.4 268L622.3 271.1L620.2 274.3L618.3 277.5L616.4 280.7L614.6 283.9L612.9 287.1L611.3 290.2L609.8 293.4L608.3 296.6L606.9 299.8L605.7 303L604.5 306.2L603.4 309.4L602.4 312.5L601.4 315.7L600.6 318.9L599.8 322.1L599.2 325.3L598.6 328.5L598.1 331.7L597.7 334.9L597.4 338L597.2 341.2L597 344.4L597 347.6L597 350.8L597.2 354L597.4 357.2L597.7 360.3L598.1 363.5L598.6 366.7L599.2 369.9L599.8 373.1L600.6 376.2L601.4 379.4L602.3 382.6L603.3 385.8L604.4 389L605.6 392.1L606.9 395.3L608.2 398.5L609.7 401.6L611.2 404.8L612.8 408L614.5 411.1L616.2 414.3L618.1 417.5L620 420.6L622 423.8L624.1 426.9L626.2 430.1L628.5 433.2L630.8 436.4L633.1 439.5L635.6 442.6L638.1 445.8L640.7 448.9L643.4 452L646.1 455.1L648.9 458.3L651.7 461.4L654.7 464.5L657.6 467.6L660.7 470.7L663.8 473.7L666.9 476.8L670.1 479.9L673.4 483L676.7 486" stroke="#454545"/>
<path d="M843.3 52.5L838.6 53.1L832.9 54.1L826.4 55.5L819 57.1L811 59L802.3 61.2L793.2 63.4L783.7 65.9M1029.2 68.4L1035.2 71.1L1041.5 73.8L1047.9 76.6L1054.5 79.5L1061.2 82.4L1067.9 85.3L1074.7 88.3L1081.6 91.3L1088.4 94.3L1095.3 97.3L1102.1 100.4L1109 103.5L1115.8 106.6L1122.6 109.7L1129.4 112.8L1136.2 116L1142.9 119.1L1149.5 122.3L1156.1 125.4L1162.7 128.6L1169.1 131.8L1175.6 135L1181.9 138.2L1188.2 141.3L1194.4 144.5L1200.5 147.7L1206.6 150.9L1212.5 154.2L1218.4 157.4L1224.2 160.6L1229.9 163.8L1235.5 167L1241 170.2L1246.4 173.5L1251.7 176.7L1257 179.9L1262.1 183.1L1267.1 186.4L1272 189.6L1276.8 192.8L1281.5 196.1L1286 199.3L1290.5 202.6L1294.8 205.8L1299.1 209L1303.2 212.3L1307.1 215.5L1311 218.8L1314.7 222L1318.4 225.3L1321.9 228.5L1325.2 231.7L1328.5 235L1331.6 238.2L1334.6 241.5L1337.4 244.7L1340.1 248L1342.7 251.2L1345.2 254.5L1347.5 257.7L1349.7 261L1351.7 264.2L1353.6 267.5L1355.4 270.7L1357.1 274L1358.6 277.2L1359.9 280.5L1361.1 283.8L1362.2 287L1363.2 290.3L1364 293.5L1364.6 296.8L1365.2 300L1365.5 303.3L1365.8 306.5L1365.9 309.8L1365.8 313L1365.6 316.3L1365.3 319.5L1364.9 322.8L1364.3 326.1L1363.5 329.3L1362.6 332.6L1361.6 335.8L1360.4 339.1L1359.1 342.3L1357.7 345.6L1356.1 348.8L1354.4 352.1" stroke="#454545"/>
<path d="M838.3 51.7L829.1 54.8L819.8 57.9L810.4 61.1L801 64.3L791.6 67.5L782.2 70.7L772.8 73.9L763.4 77.1L754.1 80.4L744.8 83.6L735.5 86.8L726.2 90.1L717 93.3L707.9 96.6L698.8 99.8L689.7 103.1L680.8 106.3L671.8 109.6L663 112.9L654.2 116.1L645.5 119.4L636.9 122.6L628.3 125.9L619.8 129.2L611.5 132.4L603.2 135.7L595 139L586.8 142.2L578.8 145.5L570.9 148.8L563.1 152L555.4 155.3L547.7 158.6L540.2 161.8L532.8 165.1L525.6 168.4L518.4 171.7L511.3 174.9L504.4 178.2L497.6 181.5L490.9 184.7L484.4 188L477.9 191.3L471.6 194.5L465.5 197.8L459.4 201.1L453.5 204.4L447.8 207.6L442.2 210.9L436.7 214.2L431.3 217.5L426.2 220.7L421.1 224L416.2 227.3L411.5 230.5L406.9 233.8L402.4 237.1L398.1 240.4L394 243.6L390 246.9L386.2 250.2L382.5 253.5L379 256.7L375.7 260L372.5 263.3L369.5 266.5L366.6 269.8L364 273.1L361.4 276.4L359.1 279.6L356.9 282.9L354.9 286.2L353 289.5L351.3 292.7L349.8 296L348.5 299.3L347.3 302.6L346.3 305.8L345.5 309.1L344.8 312.4L344.3 315.7L344 318.9L343.9 322.2L343.9 325.5L344.1 328.7L344.5 332L345 335.3L345.7 338.6L346.6 341.8L347.7 345.1L348.9 348.4L350.3 351.7L351.9 354.9L353.6 358.2L355.5 361.5L357.6 364.8L359.8 368L362.2 371.3L364.8 374.6L367.5 377.9L370.4 381.1L373.5 384.4L376.7 387.7L380.1 390.9L383.7 394.2L387.4 397.5L391.3 400.8L395.3 404L399.5 407.3L403.8 410.6L408.3 413.9L413 417.1L417.8 420.4L422.7 423.7L427.8 427L433 430.2L438.4 433.5L443.9 436.8L449.6 440L455.4 443.3L461.4 446.6L467.4 449.9L473.6 453.1L480 456.4L486.4 459.7L493 462.9L499.8 466.2L506.6 469.5L513.6 472.8L520.7 476L527.9 479.3L535.2 482.6L542.6 485.8L550.1 489.1L557.8 492.4L565.5 495.6L573.4 498.9L581.3 502.2L589.4 505.4L597.5 508.7L605.8 512L614.1 515.2L622.5 518.5L631 521.8" stroke="#454545"/>
<path d="M960 60L953.7 57.7L947.8 55.6L942.2 53.8L937 52.2L932.4 51L928.2 50.2L924.6 49.9L921.4 50L918.7 50.6L916.2 51.6L914 53L911.9 54.7L909.9 56.7L908 58.9L906.1 61.2L904.2 63.7L902.3 66.4L900.5 69.1L898.6 71.8L896.7 74.7L894.8 77.6L892.9 80.5L891 83.5L889.1 86.5L887.2 89.5L885.3 92.6L883.4 95.7L881.5 98.7L879.7 101.8L877.8 105L875.9 108.1L874 111.2L872.1 114.4L870.2 117.5L868.4 120.7L866.5 123.9L864.6 127L862.8 130.2L861 133.4L859.1 136.6L857.3 139.8L855.5 143L853.7 146.2L852 149.4L850.2 152.6L848.5 155.8L846.7 159L845 162.2L843.3 165.4L841.6 168.7L840 171.9L838.3 175.1L836.7 178.3L835.1 181.5L833.5 184.8L831.9 188L830.4 191.2L828.8 194.5L827.3 197.7L825.8 200.9L824.4 204.2L822.9 207.4L821.5 210.6L820.1 213.9L818.8 217.1L817.4 220.3L816.1 223.6L814.8 226.8L813.5 230L812.3 233.3L811.1 236.5L809.9 239.8L808.8 243L807.6 246.2L806.5 249.5L805.5 252.7L804.4 256L803.4 259.2L802.4 262.5L801.5 265.7L800.5 268.9L799.7 272.2L798.8 275.4L798 278.7L797.2 281.9L796.4 285.2L795.7 288.4L795 291.6L794.3 294.9L793.7 298.1L793 301.4L792.5 304.6L791.9 307.9L791.4 311.1L791 314.4L790.5 317.6L790.1 320.9L789.7 324.1L789.4 327.3L789.1 330.6L788.8 333.8L788.6 337.1L788.4 340.3" stroke="#454545"/>
<path d="M990.8 85.8L989.7 87.1L988.7 88.5L988 90.1L987.4 91.8L986.9 93.6L986.6 95.5L986.3 97.5L986.2 99.6L986.1 101.7L986.1 104L986.2 106.3L986.3 108.7L986.4 111.1L986.6 113.6L986.8 116.1L987 118.7L987.2 121.3L987.5 123.9L987.8 126.6L988 129.3L988.3 132L988.6 134.8L988.8 137.6L989.1 140.4L989.4 143.2L989.6 146.1L989.9 148.9L990.1 151.8L990.3 154.7L990.5 157.6L990.7 160.5L990.9 163.5L991.1 166.4L991.2 169.4L991.4 172.4L991.5 175.3L991.6 178.3L991.7 181.3L991.7 184.3L991.7 187.4L991.8 190.4L991.8 193.4L991.7 196.4L991.7 199.5L991.6 202.5L991.5 205.6L991.4 208.6L991.3 211.7L991.1 214.8L990.9 217.8L990.7 220.9L990.5 224L990.2 227.1L990 230.1L989.7 233.2L989.3 236.3L989 239.4L988.6 242.5L988.2 245.6L987.8 248.7L987.4 251.8L986.9 254.9L986.4 258L985.9 261.1L985.4 264.2L984.8 267.3L984.3 270.4L983.7 273.6L983.1 276.7L982.4 279.8L981.7 282.9L981.1 286L980.3 289.1L979.6 292.3L978.9 295.4L978.1 298.5L977.3 301.6L976.5 304.7L975.6 307.9L974.8 311L973.9 314.1L973 317.2L972.1 320.4L971.1 323.5L970.2 326.6L969.2 329.7L968.2 332.9L967.2 336L966.2 339.1L965.1 342.2L964 345.3L962.9 348.5L961.8 351.6L960.7 354.7L959.6 357.8L958.4 360.9L957.3 364L956.1 367.2L954.9 370.3L953.7 373.4L952.5 376.5L951.2 379.6L950 382.7L948.7 385.8L947.4 388.9L946.1 392L944.8 395.1L943.5 398.2L942.2 401.3L940.8 404.4L939.5 407.5" stroke="#454545"/>
<path d="M1012.5 68.3L1003.6 65.7L995 63.2L986.7 60.8L978.8 58.6L971.4 56.5L964.5 54.8L958.3 53.3L952.8 52.1L948.1 51.3L944.2 51L941.2 51.1L938.8 51.7L937.1 52.6L935.9 54L935.1 55.6L934.6 57.5L934.3 59.7L934.2 62L934.2 64.4L934.3 67L934.5 69.7L934.7 72.4L934.9 75.2L935.2 78.1L935.6 81L935.9 83.9L936.2 86.9L936.6 89.9L937 92.9L937.3 96L937.7 99.1L938 102.2L938.4 105.2L938.7 108.4L939.1 111.5L939.4 114.6L939.7 117.8L940 120.9L940.3 124.1L940.6 127.2L940.9 130.4L941.2 133.6L941.5 136.7L941.8 139.9L942 143.1L942.3 146.3L942.5 149.5L942.7 152.7L942.9 155.9L943.1 159.1L943.3 162.3L943.5 165.5L943.7 168.7L943.8 171.9L943.9 175.2L944.1 178.4L944.2 181.6L944.3 184.8L944.4 188L944.5 191.3L944.5 194.5L944.6 197.7L944.6 200.9L944.7 204.2L944.7 207.4L944.7 210.6L944.7 213.9L944.7 217.1L944.6 220.3L944.6 223.5L944.5 226.8L944.4 230L944.4 233.2L944.3 236.5L944.2 239.7L944 243L943.9 246.2L943.8 249.4L943.6 252.7L943.4 255.9L943.2 259.1L943 262.4L942.8 265.6L942.6 268.9L942.4 272.1L942.1 275.3L941.9 278.6L941.6 281.8L941.3 285.1L941 288.3L940.7 291.5L940.4 294.8L940.1 298L939.7 301.3L939.4 304.5L939 307.7L938.7 311L938.3 314.2L937.9 317.5L937.5 320.7L937.1 323.9L936.6 327.2L936.2 330.4L935.7 333.7L935.3 336.9L934.8 340.2L934.3 343.4L933.8 346.6L933.3 349.9L932.8 353.1L932.3 356.4L931.8 359.6L931.3 362.8L930.7 366.1L930.2 369.3L929.6 372.6L929 375.8L928.5 379L927.9 382.3L927.3 385.5" stroke="#454545"/>
<path d="M1125 106.7L1115.8 103.6L1106.5 100.5L1097.2 97.5L1087.9 94.4L1078.7 91.4L1069.4 88.4L1060.2 85.4L1051 82.5L1041.9 79.5L1032.9 76.7L1023.9 73.9L1015.1 71.1L1006.5 68.5L998.1 65.9L989.9 63.4L982.1 61.1L974.6 58.9L967.6 56.9L961.1 55.2L955.2 53.8L950 52.7L945.5 52L941.8 51.7L938.8 51.9L936.4 52.5L934.6 53.5L933.2 54.8L932.1 56.5L931.3 58.4L930.7 60.5L930.3 62.8L929.9 65.2L929.7 67.8L929.5 70.4L929.3 73.1L929.2 75.9L929.1 78.8L929 81.7L929 84.6L928.9 87.6L928.9 90.6L928.8 93.6L928.8 96.6L928.7 99.7L928.7 102.8L928.6 105.9L928.6 109L928.5 112.1L928.4 115.2L928.4 118.4L928.3 121.5L928.2 124.7L928.1 127.8L928 131L927.9 134.1L927.8 137.3L927.7 140.5L927.6 143.7L927.5 146.9L927.4 150.1L927.2 153.3L927.1 156.5L926.9 159.7L926.8 162.9L926.6 166.1L926.4 169.3L926.2 172.5L926.1 175.7L925.9 178.9L925.7 182.2L925.5 185.4L925.3 188.6L925 191.8L924.8 195L924.6 198.3L924.3 201.5L924.1 204.7L923.8 208L923.6 211.2L923.3 214.4L923 217.6L922.8 220.9L922.5 224.1L922.2 227.3L921.9 230.6L921.6 233.8L921.3 237.1L921 240.3L920.6 243.5L920.3 246.8L920 250L919.7 253.2L919.3 256.5L919 259.7L918.6 263L918.3 266.2L917.9 269.4L917.5 272.7L917.2 275.9L916.8 279.2L916.4 282.4L916 285.6L915.6 288.9L915.2 292.1L914.8 295.4L914.4 298.6L914 301.8L913.6 305.1L913.2 308.3L912.8 311.6L912.4 314.8L912 318.1L911.6 321.3L911.1 324.5L910.7 327.8L910.3 331L909.8 334.3L909.4 337.5L909 340.8L908.5 344L908.1 347.2L907.6 350.5L907.2 353.7L906.7 357L906.3 360.2L905.8 363.4L905.4 366.7L904.9 369.9L904.5 373.2L904 376.4L903.6 379.6L903.1 382.9L902.7 386.1L902.2 389.4L901.7 392.6L901.3 395.8L900.8 399.1L900.4 402.3L899.9 405.5L899.5 408.8L899 412L898.6 415.2L898.1 418.5L897.7 421.7L897.2 424.9L896.8 428.2L896.3 431.4L895.9 434.6L895.4 437.9L895 441.1L894.6 444.3" stroke="#454545"/>
<path d="M1109.2 120L1102.7 118.1L1096.3 116.3L1090.1 114.6L1084 112.9L1078 111.4L1072.3 109.9L1066.7 108.5L1061.3 107.3L1056.1 106.1L1051.1 105.1L1046.3 104.1L1041.7 103.3L1037.4 102.7L1033.2 102.1L1029.3 101.7L1025.6 101.4L1022.1 101.2L1018.8 101.2L1015.7 101.4L1012.8 101.6L1010.2 102L1007.6 102.5L1005.3 103.2L1003.1 104L1001.1 104.9L999.2 105.9L997.5 107L995.8 108.3L994.3 109.6L992.9 111.1L991.5 112.6L990.2 114.3L989.1 116L987.9 117.8L986.9 119.6L985.8 121.6L984.9 123.6L983.9 125.6L983 127.8L982.1 129.9L981.3 132.2L980.5 134.5L979.6 136.8L978.8 139.1L978.1 141.5L977.3 144L976.5 146.4L975.7 148.9L975 151.5L974.2 154L973.4 156.6L972.7 159.3L971.9 161.9L971.1 164.6L970.3 167.2L969.5 169.9L968.7 172.7L967.9 175.4L967.1 178.1L966.3 180.9L965.4 183.7L964.6 186.5L963.8 189.3L962.9 192.1L962 195L961.1 197.8L960.2 200.7L959.3 203.5L958.4 206.4L957.5 209.3L956.5 212.2L955.6 215.1L954.6 218L953.6 220.9L952.6 223.8L951.6 226.8L950.6 229.7L949.6 232.6L948.6 235.6L947.5 238.5L946.5 241.5L945.4 244.5L944.3 247.4L943.2 250.4L942.1 253.4L941 256.3L939.9 259.3L938.8 262.3L937.6 265.3L936.5 268.3L935.3 271.3L934.2 274.3L933 277.3L931.8 280.3L930.6 283.3L929.5 286.3L928.3 289.3L927 292.3L925.8 295.3L924.6 298.3" stroke="#454545"/>
<path d="M1073.3 124.2L1069 123.5L1065 123L1061 122.5L1057.2 122.1L1053.6 121.9L1050.1 121.7L1046.7 121.6L1043.5 121.7L1040.5 121.8L1037.5 122.1L1034.8 122.4L1032.1 122.9L1029.6 123.4L1027.1 124.1L1024.8 124.8L1022.6 125.7L1020.5 126.6L1018.5 127.6L1016.5 128.7L1014.7 129.9L1012.9 131.2L1011.2 132.5L1009.6 133.9L1008 135.4L1006.4 137L1004.9 138.6L1003.5 140.3L1002.1 142L1000.7 143.8L999.4 145.7L998 147.6L996.8 149.5L995.5 151.5L994.2 153.6L993 155.7L991.8 157.8L990.5 160L989.3 162.2L988.1 164.4L986.9 166.7L985.7 169L984.5 171.3L983.3 173.7L982.1 176.1L980.9 178.5L979.7 180.9L978.5 183.4L977.3 185.9L976.1 188.4L974.9 190.9L973.6 193.4L972.4 196L971.1 198.6L969.9 201.2L968.6 203.8L967.3 206.4L966 209L964.8 211.7L963.4 214.3L962.1 217L960.8 219.7L959.5 222.4L958.1 225.1L956.8 227.8L955.4 230.6L954 233.3L952.6 236L951.2 238.8L949.8 241.6L948.4 244.3L947 247.1L945.6 249.9L944.1 252.7L942.7 255.5L941.2 258.3L939.7 261.1L938.2 263.9L936.8 266.7L935.3 269.5L933.8 272.3L932.3 275.2L930.7 278L929.2 280.8L927.7 283.6L926.2 286.5L924.6 289.3L923.1 292.2L921.5 295L920 297.9L918.4 300.7L916.8 303.6L915.3 306.4L913.7 309.3L912.1 312.1L910.6 315L909 317.8L907.4 320.7L905.8 323.5L904.3 326.4L902.7 329.2L901.1 332.1L899.5 334.9L897.9 337.8L896.4 340.6L894.8 343.5L893.2 346.3L891.6 349.2L890.1 352L888.5 354.9L886.9 357.7L885.4 360.5L883.8 363.4L882.3 366.2L880.7 369L879.2 371.8L877.6 374.7L876.1 377.5L874.6 380.3L873.1 383.1L871.5 385.9L870 388.7L868.5 391.5L867 394.2L865.5 397" stroke="#454545"/>
<path d="M1044.2 119.2L1042.9 116.8L1041.6 114.4L1040.4 112.1L1039.3 109.8L1038.2 107.6L1037.3 105.4L1036.4 103.4L1035.7 101.4L1035.1 99.5L1034.7 97.7L1034.4 96.1L1034.4 94.5L1034.5 93L1035 91.7L1035.6 90.5L1036.6 89.5L1037.8 88.6L1039.5 87.9L1041.4 87.3L1043.8 86.9L1046.5 86.7L1049.7 86.6L1053.2 86.8L1057.2 87.1L1061.7 87.5L1066.5 88.2L1071.8 89L1077.5 89.9L1083.6 91L1090.1 92.3L1096.9 93.6L1104.1 95.1L1111.5 96.8L1119.3 98.5M681.2 100.3L678.3 102.2L675.3 104.2L672 106.3L668.6 108.5L665 110.7L661.3 113L657.5 115.4L653.6 117.8L649.6 120.2L645.5 122.7L641.4 125.3L637.2 127.9L633 130.5L628.8 133.1L624.5 135.8L620.3 138.5L616.1 141.2L611.8 144L607.6 146.8L603.4 149.6L599.2 152.4L595.1 155.2L591 158.1L586.9 161L582.9 163.9L578.9 166.8L575 169.7L571.2 172.6L567.4 175.5L563.6 178.5L560 181.5L556.4 184.4L552.8 187.4L549.4 190.4L546 193.4L542.8 196.4L539.5 199.4L536.4 202.4L533.4 205.4L530.5 208.5L527.6 211.5L524.8 214.5L522.2 217.6L519.6 220.6L517.1 223.7L514.7 226.7L512.5 229.8L510.3 232.9L508.2 235.9L506.3 239L504.4 242.1L502.6 245.2L501 248.2L499.4 251.3L498 254.4L496.6 257.5L495.4 260.6L494.3 263.7L493.3 266.8L492.4 269.9L491.7 273L491 276.1L490.4 279.2L490 282.3L489.7 285.4L489.5 288.5L489.4 291.6L489.4 294.7L489.5 297.8L489.8 300.9L490.1 304L490.6 307.1L491.2 310.2L491.9 313.3L492.7 316.5L493.6 319.6L494.7 322.7L495.8 325.8L497.1 328.9L498.5 332L500 335.1L501.6 338.2L503.3 341.3L505.1 344.4L507.1 347.6L509.1 350.7L511.3 353.8L513.5 356.9L515.9 360L518.4 363.1L521 366.2L523.6 369.3L526.4 372.4L529.3 375.5L532.3 378.6" stroke="#454545"/>
<path d="M912.5 100.8L909.7 98.8L906.9 96.8L904.2 95L901.4 93.2L898.6 91.6L895.8 90.1L893 88.7L890.2 87.4L887.4 86.3L884.5 85.4L881.6 84.7L878.6 84.1L875.5 83.6L872.4 83.4L869.1 83.4L865.8 83.5L862.3 83.8L858.7 84.3L855 85L851.2 85.8L847.2 86.8L843.1 88L838.8 89.3L834.5 90.7L830 92.3L825.3 94L820.6 95.8L815.7 97.7L810.8 99.7L805.7 101.8L800.6 103.9L795.4 106.2L790.1 108.5L784.8 110.8L779.4 113.2L774 115.7L768.5 118.2L763 120.7L757.5 123.3L751.9 126L746.4 128.6L740.8 131.3L735.2 134L729.6 136.8L724 139.6L718.4 142.4L712.9 145.2L707.3 148L701.8 150.9L696.3 153.7L690.8 156.6L685.4 159.5L680 162.4L674.6 165.4L669.2 168.3L663.9 171.3L658.7 174.2L653.5 177.2L648.4 180.2L643.3 183.2L638.2 186.2L633.3 189.2L628.3 192.2L623.5 195.2L618.7 198.2L614 201.3L609.3 204.3L604.7 207.4L600.2 210.4L595.8 213.5L591.5 216.5L587.2 219.6L583 222.7L578.9 225.7L574.9 228.8L570.9 231.9L567.1 235L563.3 238L559.6 241.1L556.1 244.2L552.6 247.3L549.2 250.4L545.9 253.5L542.7 256.6L539.6 259.7L536.6 262.8L533.7 265.9L530.9 269L528.2 272.1L525.6 275.2L523.1 278.4L520.7 281.5L518.4 284.6L516.2 287.7L514.1 290.8L512.2 293.9L510.3 297L508.6 300.2L507 303.3L505.4 306.4L504 309.5L502.7 312.6L501.5 315.8L500.4 318.9L499.5 322L498.6 325.1L497.9 328.2L497.3 331.4L496.7 334.5L496.3 337.6L496.1 340.7L495.9 343.8L495.8 346.9L495.9 350.1L496 353.2L496.3 356.3L496.7 359.4L497.2 362.5L497.8 365.6L498.5 368.7L499.4 371.8L500.3 375L501.4 378.1L502.6 381.2L503.8 384.3L505.2 387.4L506.7 390.5L508.3 393.6L510 396.6L511.8 399.7L513.8 402.8L515.8 405.9L517.9 409L520.1 412.1L522.4 415.1L524.9 418.2L527.4 421.3L530 424.3L532.7 427.4L535.5 430.5L538.4 433.5L541.4 436.6L544.5 439.6L547.7 442.6L550.9 445.7L554.2 448.7L557.6 451.7L561.1 454.7L564.7 457.7L568.3 460.7L572 463.7L575.8 466.6" stroke="#454545"/>
<path d="M906.7 81.7L905.2 84.5L903.7 87.3L902.2 90.2L900.7 93.1L899.3 96.1L897.8 99L896.3 102L894.8 105.1L893.3 108.1L891.8 111.1L890.3 114.2L888.8 117.3L887.3 120.4L885.9 123.5L884.4 126.6L882.9 129.7L881.4 132.8L880 136L878.5 139.1L877.1 142.2L875.6 145.4L874.2 148.5L872.7 151.7L871.3 154.9L869.9 158L868.5 161.2L867.1 164.4L865.7 167.6L864.3 170.7L862.9 173.9L861.5 177.1L860.2 180.3L858.9 183.5L857.5 186.7L856.2 189.9L854.9 193.1L853.6 196.3L852.4 199.5L851.1 202.7L849.8 205.9L848.6 209.1L847.4 212.3L846.2 215.5L845 218.7L843.9 221.9L842.7 225.1L841.6 228.4L840.5 231.6L839.4 234.8L838.3 238L837.2 241.2L836.2 244.4L835.2 247.6L834.2 250.9L833.2 254.1L832.2 257.3L831.3 260.5L830.4 263.7L829.5 267L828.6 270.2L827.8 273.4L826.9 276.6L826.1 279.9L825.4 283.1L824.6 286.3L823.9 289.5L823.1 292.7L822.4 296L821.8 299.2L821.1 302.4L820.5 305.6L819.9 308.9L819.3 312.1L818.8 315.3L818.3 318.5L817.8 321.8L817.3 325L816.9 328.2L816.4 331.4L816.1 334.7L815.7 337.9L815.3 341.1L815 344.3L814.7 347.5L814.5 350.8L814.2 354L814 357.2L813.8 360.4L813.7 363.7L813.5 366.9L813.4 370.1L813.3 373.3L813.3 376.5L813.3 379.8L813.3 383L813.3 386.2L813.3 389.4L813.4 392.6L813.5 395.9L813.6 399.1L813.8 402.3L814 405.5L814.2 408.7L814.4 411.9L814.7 415.1L815 418.4L815.3 421.6L815.6 424.8L816 428L816.4 431.2L816.8 434.4L817.2 437.6L817.7 440.8L818.2 444L818.7 447.2L819.2 450.4L819.8 453.6L820.3 456.8L820.9 460L821.6 463.2L822.2 466.4L822.9 469.6L823.6 472.7L824.3 475.9L825 479.1L825.8 482.3L826.6 485.4L827.4 488.6L828.2 491.8L829 494.9L829.9 498.1L830.7 501.2L831.6 504.4L832.5 507.5L833.4 510.6L834.4 513.7L835.3 516.8L836.3 519.9L837.2 523L838.2 526.1L839.2 529.2L840.2 532.2L841.2 535.3L842.2 538.3L843.2 541.3L844.2 544.3L845.2 547.2L846.2 550.1" stroke="#454545"/>
<path d="M944.2 68.3L940.6 65.1L936.9 61.8L933.2 58.6L929.6 55.4L925.9 52.2L922.3 49L918.6 45.8L915 42.6L911.4 39.6L908 36.6L904.7 33.9L901.6 32.1L898.3 32.2L893.6 34.1L888 36.8L882 39.8L875.8 42.9L869.5 46.1L863.1 49.2L856.8 52.4L850.4 55.6L844.1 58.9L837.7 62.1L831.3 65.3L825 68.6L818.7 71.8L812.4 75.1L806.1 78.3L799.9 81.6L793.6 84.8L787.5 88.1L781.3 91.3L775.2 94.6L769.1 97.8L763 101.1L757 104.3L751.1 107.6L745.2 110.8L739.3 114.1L733.5 117.3L727.7 120.6L722 123.8L716.3 127.1L710.7 130.4L705.2 133.6L699.7 136.9L694.3 140.1L688.9 143.4L683.6 146.6L678.4 149.9L673.2 153.2L668.1 156.4L663.1 159.7L658.2 162.9L653.3 166.2L648.5 169.4L643.8 172.7L639.1 176L634.5 179.2L630.1 182.5L625.7 185.7L621.4 189L617.1 192.2L613 195.5L608.9 198.8L605 202L601.1 205.3L597.3 208.5L593.6 211.8L590 215L586.5 218.3L583.1 221.6L579.8 224.8L576.6 228.1L573.5 231.3L570.5 234.6L567.6 237.9L564.8 241.1L562.1 244.4L559.5 247.6L557 250.9L554.6 254.1L552.3 257.4L550.1 260.7L548 263.9L546.1 267.2L544.2 270.4L542.5 273.7L540.8 277L539.3 280.2L537.9 283.5L536.6 286.7L535.4 290L534.3 293.2L533.4 296.5L532.5 299.8L531.8 303L531.1 306.3L530.6 309.5L530.2 312.8L529.9 316.1L529.8 319.3L529.7 322.6L529.8 325.8L529.9 329.1L530.2 332.4L530.6 335.6L531.1 338.9L531.7 342.1L532.5 345.4L533.3 348.6L534.3 351.9L535.3 355.2L536.5 358.4L537.8 361.7L539.2 364.9L540.7 368.2L542.3 371.5L544.1 374.7L545.9 378L547.9 381.2L549.9 384.5L552.1 387.7L554.4 391L556.8 394.3L559.2 397.5L561.8 400.8L564.5 404L567.3 407.3L570.2 410.6L573.2 413.8L576.3 417.1L579.5 420.3L582.8 423.6L586.2 426.8L589.7 430.1L593.3 433.4L597 436.6L600.8 439.9L604.6 443.1L608.6 446.4L612.6 449.7L616.8 452.9L621 456.2L625.3 459.4L629.7 462.7L634.2 465.9L638.7 469.2L643.4 472.5L648.1 475.7L652.9 479" stroke="#454545"/>
<path d="M731.7 206.7L729.5 210L727.3 213.2L725.1 216.5L723 219.7L721 223L719 226.2L717.1 229.5L715.2 232.7L713.4 236L711.7 239.2L710 242.5L708.4 245.7L706.8 249L705.3 252.3L703.8 255.5L702.4 258.8L701.1 262L699.8 265.3L698.6 268.5L697.4 271.8L696.4 275L695.3 278.3L694.4 281.5L693.5 284.8L692.6 288.1L691.9 291.3L691.2 294.6L690.5 297.8L689.9 301.1L689.4 304.3L689 307.6L688.6 310.8L688.3 314.1L688 317.3L687.8 320.6L687.7 323.9L687.6 327.1L687.6 330.4L687.7 333.6L687.8 336.9L688 340.1L688.3 343.4L688.6 346.6L689 349.9L689.5 353.2L690 356.4L690.6 359.7L691.3 362.9L692 366.2L692.8 369.4L693.6 372.7L694.5 375.9L695.5 379.2L696.5 382.4L697.6 385.7L698.8 389L700 392.2L701.3 395.5L702.7 398.7L704.1 402L705.5 405.2L707.1 408.5L708.6 411.7L710.3 415L712 418.2L713.8 421.5L715.6 424.7L717.4 428L719.4 431.3L721.4 434.5L723.4 437.8L725.5 441L727.6 444.3L729.8 447.5L732.1 450.8L734.4 454L736.8 457.3L739.2 460.5L741.6 463.8L744.1 467L746.7 470.3L749.3 473.5L751.9 476.8L754.6 480L757.3 483.3L760.1 486.5L762.9 489.8L765.8 493L768.7 496.3L771.6 499.5L774.6 502.8L777.6 506L780.7 509.3L783.8 512.5L786.9 515.7L790.1 519L793.3 522.2L796.5 525.5L799.8 528.7L803 531.9L806.4 535.2L809.7 538.4L813.1 541.6L816.5 544.9L819.9 548.1L823.3 551.3L826.8 554.5L830.2 557.8L833.7 561L837.2 564.2L840.7 567.4L844.2 570.6L847.7 573.7" stroke="#454545"/>
<path d="M782.5 184.2L778.9 186.6L775.3 189L771.6 191.4L768 193.9L764.5 196.4L760.9 198.9L757.3 201.4L753.8 203.9L750.2 206.5L746.7 209L743.3 211.6L739.8 214.2L736.4 216.8L732.9 219.4L729.6 222.1L726.2 224.7L722.9 227.4L719.6 230.1L716.3 232.7L713.1 235.4L709.9 238.1L706.7 240.8L703.6 243.5L700.5 246.3L697.4 249L694.4 251.7L691.5 254.5L688.6 257.2L685.7 260L682.9 262.7L680.1 265.5L677.3 268.3L674.6 271.1L672 273.8L669.4 276.6L666.9 279.4L664.4 282.2L661.9 285L659.6 287.8L657.2 290.6L655 293.4L652.7 296.2L650.6 299L648.5 301.8L646.4 304.7L644.4 307.5L642.5 310.3L640.6 313.1L638.8 315.9L637.1 318.7L635.4 321.6L633.7 324.4L632.2 327.2L630.7 330L629.2 332.8L627.8 335.6L626.5 338.5L625.2 341.3L624 344.1L622.9 346.9L621.8 349.7L620.8 352.5L619.9 355.3L619 358.1L618.2 360.9L617.4 363.7L616.7 366.5L616.1 369.2L615.5 372L615 374.8L614.5 377.6L614.1 380.3L613.8 383.1L613.5 385.8L613.3 388.6L613.2 391.3L613.1 394.1L613.1 396.8L613.1 399.5L613.1 402.2L613.3 404.9L613.5 407.6L613.7 410.3L614 413L614.3 415.6L614.7 418.3L615.1 420.9L615.6 423.5L616.1 426.1L616.7 428.7L617.3 431.3L617.9 433.9L618.6 436.4L619.3 439L620.1 441.5L620.8 444L621.7 446.5L622.5 448.9L623.3 451.4L624.2 453.8L625.1 456.2L626 458.6L626.9 460.9L627.8 463.2L628.8 465.5L629.7 467.8L630.6 470L631.5 472.2L632.4 474.4L633.2 476.5L634.1 478.6L634.9 480.7L635.7 482.7L636.4 484.6L637.1 486.6L637.7 488.4L638.3 490.3L638.7 492L639.2 493.8L639.5 495.4L639.7 497" stroke="#454545"/>
<path d="M1255.8 157.5L1248.2 155.1L1240.5 152.8L1232.9 150.4L1225.3 148.1L1217.8 145.9L1210.3 143.7L1202.9 141.5L1195.6 139.4L1188.3 137.3L1181.1 135.3L1174 133.4L1167 131.5L1160.1 129.6L1153.4 127.9L1146.8 126.2L1140.3 124.5L1134 123L1127.8 121.5L1121.8 120.1L1116 118.8L1110.4 117.6L1104.9 116.5L1099.7 115.4L1094.6 114.5L1089.8 113.7L1085.2 113L1080.8 112.4L1076.7 111.9L1072.7 111.5L1069 111.3L1065.5 111.2L1062.2 111.2L1059.2 111.3L1056.3 111.5L1053.6 111.8L1051.1 112.3L1048.8 112.9L1046.7 113.5L1044.8 114.3L1043 115.2L1041.4 116.2L1039.9 117.3L1038.5 118.5L1037.2 119.8L1036.1 121.2L1035.1 122.7L1034.1 124.2L1033.3 125.8L1032.5 127.5L1031.8 129.3L1031.1 131.1L1030.6 133L1030 134.9L1029.5 136.9L1029.1 139L1028.7 141.1L1028.3 143.2L1027.9 145.4L1027.6 147.7L1027.2 150L1026.9 152.3L1026.6 154.6L1026.3 157L1026 159.4L1025.7 161.9L1025.4 164.3L1025.1 166.8L1024.9 169.4L1024.5 171.9L1024.2 174.5L1023.9 177.1L1023.6 179.7L1023.2 182.3L1022.9 185L1022.5 187.7L1022.1 190.3L1021.7 193L1021.3 195.7L1020.9 198.5L1020.4 201.2L1019.9 204L1019.4 206.7L1018.9 209.5L1018.4 212.3L1017.8 215.1L1017.2 217.9L1016.6 220.7L1016 223.5L1015.3 226.4L1014.6 229.2L1013.9 232.1L1013.2 234.9L1012.5 237.8L1011.7 240.6L1010.9 243.5L1010.1 246.4L1009.2 249.3L1008.3 252.2L1007.4 255.1L1006.5 258L1005.6 260.9L1004.6 263.8L1003.6 266.7L1002.6 269.6L1001.5 272.5L1000.5 275.4L999.4 278.3L998.3 281.3L997.1 284.2L996 287.1L994.8 290.1L993.6 293L992.4 295.9L991.1 298.9L989.8 301.8L988.5 304.7L987.2 307.7L985.9 310.6" stroke="#454545"/>
<path d="M880 78.3L876.4 79.2L872.8 80.3L869.1 81.6L865.3 83.1L861.3 84.7L857.3 86.4L853.3 88.2L849.1 90.2L844.8 92.2L840.5 94.4L836.1 96.6L831.7 98.9L827.2 101.3L822.7 103.7L818.1 106.2L813.4 108.8L808.8 111.4L804.1 114L799.4 116.7L794.7 119.4L790 122.1L785.3 124.9L780.5 127.7L775.8 130.5L771.1 133.4L766.3 136.3L761.6 139.2L756.9 142.1L752.2 145L747.6 147.9L742.9 150.9L738.3 153.8L733.7 156.8L729.2 159.8L724.7 162.8L720.2 165.8L715.7 168.8L711.3 171.9L707 174.9L702.6 177.9L698.4 181L694.1 184L690 187.1L685.8 190.2L681.8 193.2L677.7 196.3L673.8 199.4L669.9 202.5L666 205.6L662.2 208.7L658.5 211.8L654.9 214.9L651.3 218L647.8 221.1L644.3 224.2L640.9 227.4L637.6 230.5L634.4 233.6L631.2 236.7L628.1 239.9L625.1 243L622.1 246.1L619.3 249.2L616.5 252.4L613.8 255.5L611.2 258.7L608.6 261.8L606.2 264.9L603.8 268.1L601.5 271.2L599.3 274.4L597.2 277.5L595.1 280.7L593.2 283.8L591.3 287L589.5 290.1L587.9 293.3L586.3 296.4L584.8 299.6L583.3 302.7L582 305.9L580.8 309L579.6 312.2L578.6 315.3L577.6 318.5L576.8 321.6L576 324.8L575.3 328L574.8 331.1L574.3 334.3L573.9 337.4L573.6 340.6L573.4 343.7L573.2 346.9L573.2 350L573.3 353.2L573.5 356.3L573.7 359.5L574.1 362.6L574.5 365.8L575.1 368.9L575.7 372.1L576.4 375.2L577.2 378.3L578.1 381.5L579.1 384.6L580.2 387.8L581.4 390.9L582.7 394L584 397.2L585.5 400.3L587 403.4L588.6 406.6L590.3 409.7L592.1 412.8L594 415.9L595.9 419L598 422.1L600.1 425.3L602.3 428.4L604.6 431.5L606.9 434.6L609.4 437.7L611.9 440.7L614.5 443.8L617.1 446.9L619.9 450L622.7 453.1L625.5 456.1L628.5 459.2L631.5 462.2L634.5 465.3L637.6 468.3L640.8 471.3L644 474.4L647.3 477.4L650.7 480.4L654.1 483.4L657.5 486.4L661 489.3L664.5 492.3L668.1 495.2L671.6 498.2L675.3 501.1L678.9 504L682.6 506.8L686.2 509.7L689.9 512.5L693.6 515.3L697.3 518.1L700.9 520.9L704.6 523.6" stroke="#454545"/>
<path d="M899 62L896.3 60.4L893.6 59.1L890.9 58.1L888 57.4L884.9 57L881.7 57L878.2 57.4L874.4 58.1L870.3 59.1L866 60.4L861.4 61.9L856.5 63.7L851.4 65.7L846 67.8L840.5 70.1L834.9 72.5L829.1 75L823.1 77.6L817.1 80.3L811 83L804.9 85.8L798.7 88.6L792.4 91.4L786.1 94.3L779.8 97.3L773.5 100.2L767.1 103.2L760.8 106.2L754.5 109.2L748.2 112.3L741.9 115.3L735.6 118.4L729.3 121.4L723.1 124.5L716.9 127.6L710.7 130.7L704.6 133.9L698.5 137L692.5 140.1L686.5 143.2L680.6 146.4L674.7 149.5L668.9 152.7L663.1 155.8L657.4 159L651.8 162.2L646.2 165.3L640.7 168.5L635.3 171.7L630 174.9L624.7 178L619.5 181.2L614.3 184.4L609.3 187.6L604.3 190.8L599.5 194L594.7 197.2L590 200.4L585.4 203.6L580.8 206.8L576.4 210L572.1 213.2L567.8 216.4L563.7 219.6L559.7 222.8L555.7 226L551.9 229.2L548.1 232.4L544.5 235.6L541 238.8L537.5 242.1L534.2 245.3L531 248.5L527.9 251.7L524.9 254.9L522.1 258.1L519.3 261.3L516.6 264.6L514.1 267.8L511.7 271L509.4 274.2L507.2 277.4L505.1 280.6L503.2 283.9L501.3 287.1L499.6 290.3L498 293.5L496.6 296.7L495.2 300L494 303.2L492.9 306.4L491.9 309.6L491 312.8L490.3 316.1L489.6 319.3L489.1 322.5L488.8 325.7L488.5 328.9L488.4 332.2L488.4 335.4L488.5 338.6L488.7 341.8L489.1 345L489.6 348.3L490.2 351.5L490.9 354.7L491.8 357.9L492.8 361.1L493.9 364.4L495.1 367.6L496.4 370.8L497.9 374L499.5 377.2L501.2 380.4L503 383.7L504.9 386.9L507 390.1L509.1 393.3L511.4 396.5L513.8 399.7L516.3 402.9L519 406.2L521.7 409.4L524.6 412.6L527.5 415.8L530.6 419L533.8 422.2L537.1 425.4L540.5 428.6L544 431.8L547.6 435L551.3 438.2L555.1 441.4L559 444.6L563 447.8L567.1 451L571.3 454.2L575.6 457.4L580 460.6L584.5 463.7L589 466.9L593.7 470.1L598.4 473.3L603.2 476.4L608.1 479.6L613.1 482.8L618.1 485.9L623.2 489.1L628.4 492.2L633.7 495.4L639 498.5L644.4 501.7L649.8 504.8L655.3 507.9L660.9 511L666.5 514.1L672.1 517.2" stroke="#454545"/>
<path d="M935 48L935.4 46.5L936.6 45.5L938.9 45L942.5 45.1L947.4 45.8L953.7 47.1L961 48.8L969.3 50.8L978.3 53.1L987.9 55.6L997.9 58.2M798.8 61L791.9 63.8L784.8 66.7L777.6 69.7L770.3 72.7L762.9 75.7L755.4 78.8L748 81.9L740.5 85L733 88.1L725.6 91.2L718.1 94.4L710.7 97.6L703.3 100.7L695.9 103.9L688.6 107.1L681.3 110.3L674.1 113.5L666.9 116.7L659.8 120L652.8 123.2L645.8 126.4L638.9 129.6L632.1 132.9L625.3 136.1L618.6 139.3L612 142.6L605.5 145.8L599 149L592.7 152.3L586.4 155.5L580.2 158.8L574.2 162L568.2 165.3L562.3 168.5L556.5 171.8L550.8 175L545.3 178.3L539.8 181.5L534.5 184.8L529.2 188L524.1 191.3L519.1 194.5L514.1 197.8L509.4 201.1L504.7 204.3L500.1 207.6L495.7 210.8L491.4 214.1L487.2 217.4L483.2 220.6L479.3 223.9L475.5 227.2L471.8 230.4L468.3 233.7L464.9 236.9L461.6 240.2L458.5 243.5L455.5 246.7L452.6 250L449.9 253.3L447.3 256.5L444.9 259.8L442.6 263.1L440.4 266.3L438.4 269.6L436.5 272.9L434.8 276.1L433.2 279.4L431.7 282.7L430.4 285.9L429.2 289.2L428.2 292.5L427.3 295.7L426.6 299L426 302.3L425.6 305.5L425.3 308.8L425.2 312.1L425.2 315.3L425.3 318.6L425.6 321.9L426.1 325.1L426.6 328.4L427.4 331.7L428.3 334.9L429.3 338.2L430.4 341.5L431.8 344.7L433.2 348L434.8 351.3L436.6 354.5L438.4 357.8" stroke="#454545"/>
<path d="M872 55L869.6 54.3L866.7 54L863.2 54.2L859.2 54.7L854.7 55.5L849.5 56.8L843.9 58.3L837.7 60L831.2 62L824.3 64.2L817 66.5L809.6 69L801.9 71.5L794 74.2L786 76.9L777.8 79.6L769.6 82.5L761.3 85.3L753 88.3L744.6 91.2L736.1 94.2L727.7 97.2L719.2 100.2L710.8 103.3L702.3 106.3L693.9 109.4L685.5 112.5L677.1 115.6L668.8 118.7L660.5 121.8L652.2 124.9L644.1 128.1L635.9 131.2L627.8 134.4L619.8 137.5L611.9 140.7L604 143.9L596.2 147L588.5 150.2L580.9 153.4L573.3 156.6L565.9 159.8L558.5 163L551.2 166.2L544 169.4L537 172.6L530 175.8L523.1 179L516.4 182.2L509.7 185.4L503.2 188.6L496.8 191.8L490.5 195L484.3 198.3L478.2 201.5L472.3 204.7L466.5 207.9L460.8 211.1L455.2 214.4L449.8 217.6L444.5 220.8L439.4 224L434.3 227.3L429.5 230.5L424.7 233.7L420.1 236.9L415.7 240.2L411.4 243.4L407.2 246.6L403.2 249.9L399.3 253.1L395.6 256.3L392.1 259.6L388.7 262.8L385.4 266L382.3 269.3L379.4 272.5L376.6 275.7L373.9 279L371.5 282.2L369.2 285.4L367 288.7L365 291.9L363.2 295.1L361.5 298.4L360 301.6L358.7 304.9L357.5 308.1L356.5 311.3L355.7 314.6L355 317.8L354.4 321L354.1 324.3L353.9 327.5L353.9 330.7L354 334L354.3 337.2L354.8 340.5L355.4 343.7L356.2 346.9L357.2 350.2L358.3 353.4L359.6 356.6L361.1 359.9L362.7 363.1L364.5 366.3" stroke="#454545"/>
<path d="M700 150L695.8 153.2L691.6 156.5L687.6 159.7L683.5 163L679.6 166.2L675.7 169.5L671.9 172.7L668.1 176L664.4 179.2L660.8 182.5L657.3 185.7L653.8 189L650.4 192.2L647.1 195.5L643.9 198.7L640.7 201.9L637.6 205.2L634.6 208.4L631.7 211.7L628.9 214.9L626.1 218.2L623.5 221.5L620.9 224.7L618.4 228L616 231.2L613.6 234.5L611.4 237.7L609.2 241L607.2 244.2L605.2 247.5L603.3 250.7L601.5 254L599.8 257.2L598.2 260.5L596.7 263.7L595.3 267L594 270.2L592.7 273.5L591.6 276.7L590.5 280L589.6 283.2L588.7 286.5L587.9 289.7L587.3 293L586.7 296.2L586.2 299.5L585.8 302.7L585.6 306L585.4 309.3L585.3 312.5L585.3 315.8L585.4 319L585.6 322.3L585.9 325.5L586.3 328.8L586.7 332L587.3 335.3L588 338.5L588.8 341.8L589.6 345L590.6 348.3L591.7 351.5L592.8 354.8L594.1 358L595.4 361.3L596.8 364.5L598.4 367.8L600 371L601.7 374.3L603.5 377.6L605.4 380.8L607.4 384.1L609.4 387.3L611.6 390.6L613.8 393.8L616.2 397.1L618.6 400.3L621.1 403.6L623.7 406.8L626.4 410.1L629.1 413.3L632 416.6L634.9 419.8L637.9 423.1L641 426.3L644.2 429.6L647.4 432.8L650.7 436.1L654.1 439.3L657.6 442.6L661.1 445.8L664.8 449.1L668.4 452.3L672.2 455.6L676 458.8L679.9 462.1L683.9 465.3L687.9 468.6L692 471.8L696.2 475L700.4 478.3L704.7 481.5L709 484.8L713.4 488L717.9 491.3L722.4 494.5L726.9 497.8L731.6 501L736.2 504.2L740.9 507.5" stroke="#454545"/>
<path d="M760 120L755.2 123.3L750.4 126.5L745.7 129.8L741.1 133L736.4 136.3L731.9 139.5L727.3 142.8L722.9 146L718.5 149.3L714.1 152.5L709.8 155.8L705.6 159L701.4 162.3L697.3 165.6L693.2 168.8L689.2 172.1L685.3 175.3L681.4 178.6L677.6 181.8L673.9 185.1L670.2 188.4L666.7 191.6L663.1 194.9L659.7 198.1L656.3 201.4L653 204.6L649.8 207.9L646.7 211.2L643.6 214.4L640.6 217.7L637.7 220.9L634.9 224.2L632.1 227.4L629.5 230.7L626.9 234L624.4 237.2L622 240.5L619.7 243.7L617.4 247L615.3 250.3L613.2 253.5L611.2 256.8L609.4 260L607.6 263.3L605.8 266.6L604.2 269.8L602.7 273.1L601.3 276.3L599.9 279.6L598.7 282.8L597.5 286.1L596.4 289.4L595.5 292.6L594.6 295.9L593.8 299.1L593.1 302.4L592.5 305.7L592 308.9L591.6 312.2L591.3 315.4L591.1 318.7L590.9 321.9L590.9 325.2L591 328.5L591.1 331.7L591.4 335L591.8 338.2L592.2 341.5L592.7 344.8L593.4 348L594.1 351.3L594.9 354.5L595.8 357.8L596.8 361.1L598 364.3L599.1 367.6L600.4 370.8L601.8 374.1L603.3 377.3L604.8 380.6L606.5 383.9L608.2 387.1L610.1 390.4L612 393.6L614 396.9L616.1 400.2L618.3 403.4L620.6 406.7L622.9 409.9L625.4 413.2L627.9 416.4L630.5 419.7L633.2 423L636 426.2L638.8 429.5L641.8 432.7L644.8 436L647.9 439.3L651.1 442.5L654.3 445.8L657.6 449L661 452.3L664.5 455.5L668 458.8L671.7 462.1L675.3 465.3L679.1 468.6L682.9 471.8L686.8 475.1L690.8 478.3" stroke="#454545"/>
<path d="M1160 125L1153.8 121.9L1147.6 118.9L1141.3 115.9L1135 112.9L1128.7 109.9L1122.4 106.9L1116.1 104L1109.8 101.1L1103.6 98.2L1097.4 95.3L1091.2 92.5L1085.1 89.7L1079.1 87L1073.3 84.3L1067.6 81.7L1062 79.2M750.9 76.7L760.2 74.3L769.2 72.1L777.8 70L786 68L793.8 66.2L801 64.6L807.5 63.3L813.5 62.1L818.7 61.3L823.2 60.8L827 60.5L830.1 60.6L832.5 61L834.3 61.7L835.5 62.7L836.2 64L836.5 65.5L836.4 67.2L836.1 69.1L835.5 71.2L834.7 73.3L833.8 75.7L832.7 78.1L831.5 80.6L830.2 83.2L828.8 85.8L827.4 88.5L826 91.3L824.5 94.1L823 96.9L821.5 99.8L819.9 102.7L818.4 105.6L816.8 108.6L815.3 111.6L813.7 114.6L812.2 117.6L810.6 120.6L809.1 123.7L807.6 126.7L806.1 129.8L804.6 132.9L803.2 136L801.7 139.1L800.3 142.2L798.9 145.3L797.6 148.4L796.2 151.6L794.9 154.7L793.6 157.8L792.3 161L791.1 164.1L789.9 167.3L788.7 170.4L787.6 173.6L786.4 176.8L785.4 180L784.3 183.1L783.3 186.3L782.3 189.5L781.3 192.7L780.4 195.8L779.5 199L778.7 202.2L777.8 205.4L777.1 208.6L776.3 211.8L775.6 215L774.9 218.2L774.3 221.4L773.7 224.6L773.1 227.8L772.6 231L772.1 234.2L771.7 237.4L771.3 240.6L770.9 243.8L770.5 247L770.2 250.3L770 253.5L769.8 256.7L769.6 259.9L769.4 263.1L769.3 266.3L769.3 269.5L769.3 272.7L769.3 276L769.3 279.2L769.4 282.4L769.6 285.6L769.7 288.8L770 292L770.2 295.3L770.5 298.5L770.8 301.7L771.2 304.9L771.6 308.1L772.1 311.3L772.5 314.6L773.1 317.8L773.6 321L774.2 324.2L774.9 327.4L775.5 330.7L776.3 333.9L777 337.1L777.8 340.3L778.6 343.5L779.5 346.7" stroke="#454545"/>
<path d="M1020 105L1015.9 101.8L1011.8 98.6L1007.7 95.4L1003.5 92.2L999.3 89L995.1 85.8L990.9 82.6L986.7 79.4L982.5 76.3L978.3 73.1L974 70L969.8 66.9L965.7 63.8L961.5 60.8L957.5 57.8L953.5 54.8L949.7 52L946 49.2L942.7 46.7L939.9 44.3L937.9 42.3L937.1 40.8L938.1 40.1L941.5 40.1M862.8 40.9L861.5 42.4L858.7 44.5L855.2 46.8L851 49.4L846.5 52.2L841.8 55L836.9 58L831.9 61L826.8 64L821.7 67.1L816.5 70.2L811.3 73.3L806.1 76.5L800.9 79.6L795.7 82.8L790.6 86L785.4 89.2L780.3 92.4L775.2 95.6L770.1 98.8L765.1 102L760 105.2L755.1 108.4L750.1 111.6L745.2 114.9L740.4 118.1L735.6 121.3L730.8 124.6L726.1 127.8L721.4 131L716.8 134.3L712.2 137.5L707.7 140.7L703.3 144L698.9 147.2L694.6 150.5L690.3 153.7L686.1 157L682 160.2L677.9 163.5L673.9 166.7L669.9 169.9L666.1 173.2L662.3 176.4L658.5 179.7L654.9 182.9L651.3 186.2L647.8 189.4L644.4 192.7L641 195.9L637.8 199.2L634.6 202.4L631.5 205.7L628.4 209L625.5 212.2L622.6 215.5L619.9 218.7L617.2 222L614.6 225.2L612.1 228.5L609.6 231.7L607.3 235L605 238.2L602.9 241.5L600.8 244.7L598.8 248L597 251.3L595.2 254.5L593.5 257.8L591.9 261L590.4 264.3L588.9 267.5L587.6 270.8L586.4 274L585.3 277.3L584.2 280.5L583.3 283.8L582.5 287.1L581.7 290.3L581.1 293.6L580.5 296.8L580.1 300.1L579.7 303.3L579.5 306.6L579.3 309.8L579.3 313.1L579.3 316.4L579.5 319.6L579.7 322.9L580.1 326.1L580.5 329.4L581 332.6L581.7 335.9L582.4 339.2L583.2 342.4L584.1 345.7L585.2 348.9L586.3 352.2L587.5 355.4L588.8 358.7L590.2 361.9L591.7 365.2L593.3 368.5L595 371.7L596.8 375L598.7 378.2L600.6 381.5L602.7 384.7" stroke="#454545"/>
<path d="M650 135L646.2 137.7L642.3 140.5L638.5 143.2L634.7 146L630.9 148.9L627.2 151.7L623.5 154.5L619.8 157.4L616.1 160.3L612.5 163.2L609 166.1L605.5 169L602 172L598.6 174.9L595.3 177.9L592 180.8L588.8 183.8L585.7 186.8L582.6 189.8L579.6 192.8L576.6 195.8L573.8 198.8L571 201.8L568.3 204.8L565.7 207.8L563.2 210.9L560.7 213.9L558.4 217L556.1 220L553.9 223.1L551.8 226.1L549.8 229.2L547.9 232.2L546 235.3L544.3 238.4L542.7 241.4L541.1 244.5L539.7 247.6L538.3 250.7L537.1 253.8L535.9 256.8L534.8 259.9L533.9 263L533 266.1L532.3 269.2L531.6 272.3L531 275.4L530.6 278.5L530.2 281.6L530 284.7L529.8 287.8L529.8 290.9L529.9 294L530 297.1L530.3 300.2L530.6 303.3L531.1 306.4L531.7 309.5L532.4 312.6L533.1 315.7L534 318.8L535 321.9L536.1 325.1L537.3 328.2L538.5 331.3L539.9 334.4L541.4 337.5L543 340.6L544.7 343.7L546.5 346.8L548.3 349.9L550.3 353L552.4 356.1L554.6 359.2L556.8 362.3L559.2 365.4L561.7 368.5L564.2 371.6L566.9 374.7L569.6 377.8L572.4 380.9L575.3 383.9L578.3 387L581.4 390.1L584.6 393.2L587.8 396.3L591.2 399.3L594.6 402.4L598.1 405.5L601.7 408.6L605.4 411.6L609.1 414.7L612.9 417.7L616.8 420.8L620.8 423.8L624.8 426.9L628.9 429.9L633.1 433L637.3 436L641.6 439L646 442L650.4 445L654.9 448L659.4 451L664 454L668.6 457L673.3 460L678.1 462.9L682.9 465.9L687.7 468.8L692.6 471.8L697.5 474.7" stroke="#454545"/>
</g>
<g fill="none" stroke-width="1.39" stroke-dasharray="1.39 2.29">
<path d="M730.9 256.8L729.6 254.4L728.3 252L727 249.6L725.8 247.2L724.6 244.8L723.4 242.5L722.3 240.1L721.2 237.8L720.1 235.5L719 233.2L717.9 230.9L716.9 228.6L715.8 226.3L714.8 224.1L713.9 221.8L712.9 219.6L711.9 217.4L711 215.2L710.1 213.1L709.2 210.9L708.3 208.8L707.4 206.7L706.5 204.6L705.6 202.5L704.8 200.5L703.9 198.5L703 196.5L702.2 194.5L701.3 192.6L700.4 190.7L699.6 188.8L698.7 187L697.8 185.2L696.9 183.4L696 181.7L695 179.9L694.1 178.3L693.1 176.6L692.1 175L691 173.5L689.9 172L688.8 170.5L687.7 169.1L686.5 167.7L685.2 166.4L683.9 165.1L682.6 163.9L681.1 162.7L679.7 161.6L678.1 160.5L676.5 159.5L674.8 158.6L673 157.7L671.2 156.8L669.2 156.1L667.2 155.4L665 154.7L662.8 154.1L660.5 153.6L658 153.2L655.5 152.8L652.8 152.5L650.1 152.3L647.2 152.1L644.1 152L641 151.9L637.7 152L634.4 152.1L630.9 152.3L627.2 152.5L623.5 152.8L619.6 153.2L615.6 153.6L611.4 154.2L607.1 154.7L602.8 155.4L598.2 156.1L593.6 156.9L588.9 157.7L584 158.6L579 159.5L574 160.5L568.8 161.6L563.5 162.7L558.1 163.9L552.6 165.1L547.1 166.4L541.4 167.8L535.7 169.1L529.9 170.6L524 172L518 173.5L512 175.1L506 176.7L499.9 178.3L493.7 180L487.5 181.7" stroke="#ff1d00"/>
<path d="M728.2 266.9L726.9 264.4L725.6 261.9L724.3 259.5L723 257L721.8 254.6L720.6 252.2L719.4 249.7L718.3 247.3L717.2 244.9L716.1 242.5L715 240.1L714 237.8L713 235.4L712 233.1L711 230.7L710.1 228.4L709.1 226.1L708.2 223.8L707.4 221.5L706.5 219.3L705.6 217L704.8 214.8L704 212.6L703.2 210.4L702.4 208.2L701.6 206.1L700.9 204L700.1 201.8L699.4 199.8L698.6 197.7L697.9 195.7L697.1 193.7L696.4 191.7L695.7 189.7L694.9 187.8L694.2 185.9L693.4 184.1L692.6 182.3L691.8 180.5L691 178.7L690.2 177L689.3 175.3L688.4 173.7L687.5 172.1L686.5 170.5L685.6 169L684.5 167.5L683.4 166.1L682.3 164.7L681.1 163.4L679.9 162.1L678.6 160.9L677.2 159.8L675.8 158.7L674.3 157.6L672.7 156.6L671 155.7L669.2 154.8L667.4 154L665.4 153.3L663.4 152.6L661.2 152L659 151.5L656.6 151L654.1 150.6L651.5 150.2L648.7 150L645.9 149.8L642.9 149.7L639.8 149.6L636.5 149.6L633.2 149.7L629.7 149.9L626 150.1L622.2 150.5L618.3 150.8L614.3 151.3L610.1 151.8L605.8 152.4L601.3 153L596.7 153.7L592 154.5L587.2 155.4L582.2 156.3L577.2 157.2L572 158.3L566.7 159.4L561.3 160.5L555.8 161.7" stroke="#ff1d00"/>
<path d="M726.7 267.1L725.4 264.6L724.1 262.1L722.9 259.6L721.7 257.1L720.5 254.7L719.4 252.2L718.3 249.7L717.2 247.3L716.1 244.9L715.1 242.4L714.1 240L713.1 237.6L712.2 235.2L711.3 232.9L710.4 230.5L709.5 228.1L708.6 225.8L707.8 223.5L707 221.2L706.2 218.9L705.4 216.6L704.7 214.3L704 212.1L703.2 209.9L702.5 207.7L701.8 205.5L701.2 203.3L700.5 201.2L699.8 199L699.2 197L698.5 194.9L697.9 192.8L697.2 190.8L696.6 188.8L695.9 186.9L695.3 184.9L694.6 183L693.9 181.1L693.2 179.3L692.5 177.5L691.8 175.7L691 174L690.2 172.3L689.4 170.7L688.6 169.1L687.7 167.5L686.8 166L685.8 164.5L684.8 163.1L683.7 161.7L682.6 160.4L681.4 159.1L680.1 157.9L678.8 156.8L677.4 155.7L675.9 154.6L674.4 153.6L672.7 152.7L671 151.9L669.1 151.1L667.2 150.4L665.1 149.7L663 149.1L660.7 148.6L658.3 148.1L655.8 147.8L653.1 147.5L650.3 147.2L647.4 147.1L644.4 147L641.2 147L637.9 147L634.5 147.2L630.9 147.4L627.1 147.7L623.3 148L619.2 148.4L615.1 148.9L610.8 149.5" stroke="#ff1d00"/>
<path d="M734.3 256.6L732.8 254.3L731.4 252L729.9 249.7L728.5 247.4L727.2 245.2L725.8 243L724.5 240.7L723.1 238.5L721.8 236.3L720.5 234.1L719.3 231.9L718 229.8L716.8 227.6L715.6 225.5L714.4 223.4L713.2 221.3L712 219.2L710.8 217.2L709.7 215.2L708.5 213.2L707.4 211.2L706.3 209.2L705.1 207.2L704 205.3L702.9 203.4L701.8 201.6L700.7 199.7L699.5 197.9L698.4 196.1L697.3 194.4L696.1 192.6L695 190.9L693.8 189.3L692.6 187.6L691.4 186.1L690.2 184.5L688.9 183L687.6 181.5L686.3 180.1L685 178.7L683.6 177.3L682.2 176L680.7 174.7L679.2 173.5L677.7 172.3L676.1 171.2L674.4 170.1L672.7 169.1L671 168.1L669.1 167.2L667.2 166.3L665.3 165.5L663.2 164.8L661.1 164.1L658.9 163.4L656.6 162.9L654.2 162.3L651.8 161.9L649.2 161.5L646.6 161.1L643.8 160.9L641 160.7L638 160.5L635 160.4L631.8 160.4L628.5 160.4L625.2 160.5L621.7 160.7L618.1 160.9L614.4 161.2L610.6 161.6L606.7 162" stroke="#ff1d00"/>
<path d="M731 268L729.2 265.8L727.4 263.7L725.7 261.6L724 259.4L722.2 257.3L720.6 255.2L718.9 253.1L717.2 251L715.6 249L714 246.9L712.4 244.8L710.8 242.8L709.2 240.8L707.7 238.8L706.2 236.8L704.6 234.9L703.1 232.9L701.6 231L700.1 229.1L698.7 227.2L697.2 225.3L695.7 223.4L694.3 221.6L692.8 219.8L691.4 218L689.9 216.2L688.5 214.5L687.1 212.8L685.6 211.1L684.2 209.4L682.7 207.8L681.3 206.2L679.8 204.6L678.3 203L676.9 201.5L675.4 200L673.8 198.6L672.3 197.2L670.8 195.8L669.2 194.4L667.6 193.1L666 191.8L664.3 190.6L662.6 189.4L660.9 188.3L659.1 187.1L657.3 186.1L655.5 185L653.6 184.1L651.7 183.1L649.7 182.2L647.6 181.4L645.5 180.6L643.4 179.8L641.2 179.1L638.9 178.5L636.6 177.9L634.2 177.3L631.7 176.8L629.1 176.4L626.5 176L623.8 175.6L621.1 175.4L618.2 175.1L615.3 174.9L612.2 174.8L609.1 174.8L606 174.7L602.7 174.8L599.3 174.9L595.9 175L592.3 175.2L588.7 175.5L585 175.8" stroke="#ff1d00"/>
<path d="M729.6 267.9L727.7 265.8L725.9 263.7L724.1 261.6L722.3 259.6L720.5 257.5L718.8 255.5L717.1 253.5L715.3 251.5L713.7 249.5L712 247.5L710.3 245.5L708.6 243.5L707 241.6L705.4 239.7L703.8 237.8L702.2 235.9L700.6 234L699 232.1L697.4 230.3L695.9 228.5L694.3 226.7L692.8 224.9L691.3 223.1L689.7 221.4L688.2 219.7L686.7 218L685.1 216.3L683.6 214.7L682.1 213.1L680.5 211.5L679 209.9L677.4 208.4L675.9 206.9L674.3 205.4L672.7 204L671.1 202.5L669.5 201.2L667.9 199.8L666.2 198.5L664.5 197.2L662.8 196L661.1 194.8L659.3 193.6L657.6 192.5L655.7 191.4L653.9 190.3L652 189.3L650 188.4L648.1 187.4L646 186.6L644 185.7L641.8 184.9L639.7 184.2L637.4 183.5L635.1 182.8L632.8 182.2L630.4 181.7L627.9 181.2L625.4 180.7L622.8 180.3L620.1 180L617.4 179.7L614.5 179.4L611.7 179.2L608.7 179.1L605.6 179L602.5 178.9L599.3 178.9L596 179L592.7 179.1L589.2 179.2L585.7 179.4L582.1 179.7L578.4 180L574.6 180.4L570.8 180.8" stroke="#ff1d00"/>
<path d="M727.3 257.6L727.1 254.7L726.9 251.8L726.7 248.8L726.6 245.9L726.5 243L726.4 240.1L726.4 237.1L726.5 234.2L726.6 231.3L726.7 228.4L726.8 225.5L727 222.6L727.3 219.7L727.6 216.9L727.9 214L728.2 211.1L728.6 208.3L729 205.4L729.5 202.6L730 199.7L730.5 196.9L731.1 194.1L731.7 191.3L732.3 188.5L732.9 185.7L733.6 182.9L734.3 180.1L735 177.4L735.8 174.6L736.6 171.9L737.4 169.2L738.2 166.5L739 163.8L739.9 161.2L740.8 158.6L741.6 155.9L742.5 153.3L743.4 150.8L744.3 148.2L745.2 145.7L746.1 143.2L747 140.8L747.8 138.3L748.7 135.9L749.5 133.6L750.3 131.3L751.1 129L751.8 126.8L752.5 124.6L753.2 122.4L753.7 120.4L754.2 118.4L754.7 116.4L755 114.5L755.3 112.7L755.4 111L755.4 109.3L755.3 107.8L755 106.3L754.6 104.9L754 103.6L753.2 102.5L752.2 101.4L751 100.5L749.5 99.6L747.8 99L745.8 98.4L743.5 98L741 97.7L738.2 97.5L735 97.5" stroke="#ff1d00"/>
<path d="M729.8 268.5L728.6 266L727.4 263.5L726.2 261L725.1 258.5L724 256L722.9 253.6L721.9 251.1L720.8 248.6L719.8 246.2L718.9 243.7L717.9 241.3L717 238.9L716.1 236.5L715.3 234.1L714.4 231.7L713.6 229.3L712.8 227L712.1 224.6L711.3 222.3L710.6 219.9L709.9 217.6L709.2 215.3L708.6 213.1L707.9 210.8L707.3 208.5L706.7 206.3L706.1 204.1L705.5 201.9L704.9 199.7L704.4 197.6L703.8 195.5L703.3 193.4L702.7 191.3L702.2 189.2L701.6 187.2L701.1 185.2L700.5 183.3L700 181.3L699.4 179.4L698.8 177.5L698.2 175.7L697.6 173.9L697 172.1L696.3 170.4L695.6 168.7L694.9 167L694.2 165.4L693.4 163.8L692.6 162.3L691.7 160.8" stroke="#ff1d00"/>
<path d="M725 264L724.3 261.3L723.6 258.5L723 255.8L722.5 253L721.9 250.3L721.4 247.5L721 244.8L720.5 242.1L720.1 239.4L719.8 236.7L719.5 234L719.2 231.3L718.9 228.6L718.7 225.9L718.5 223.2L718.4 220.6L718.3 217.9L718.2 215.3L718.1 212.7L718.1 210L718.1 207.4L718.1 204.8L718.2 202.2L718.2 199.7L718.3 197.1L718.5 194.5L718.6 192L718.8 189.5L719 187L719.2 184.5L719.4 182L719.7 179.6L719.9 177.2L720.2 174.8L720.5 172.4L720.7 170L721 167.7L721.3 165.4L721.6 163.1L721.9 160.8L722.1 158.6L722.4 156.4L722.6 154.3L722.9 152.2L723.1 150.1L723.2 148L723.4 146L723.5 144.1L723.6 142.1L723.6 140.3L723.5 138.5L723.5 136.7L723.3 135" stroke="#ff1d00"/>
<path d="M729.3 254.3L728.8 251.5L728.3 248.7L727.9 245.9L727.5 243.2L727.1 240.4L726.8 237.6L726.5 234.8L726.3 232.1L726.1 229.3L725.9 226.6L725.8 223.8L725.6 221.1L725.6 218.4L725.5 215.7L725.5 212.9L725.5 210.3L725.6 207.6L725.7 204.9L725.8 202.2L725.9 199.6L726.1 196.9L726.3 194.3L726.5 191.7L726.7 189.1L727 186.5L727.2 183.9L727.5 181.4L727.9 178.8L728.2 176.3L728.5 173.8L728.9 171.4L729.2 168.9L729.6 166.5L730 164.1L730.4 161.7L730.7 159.3L731.1 157L731.5 154.7L731.8 152.5L732.2 150.2L732.5 148L732.8 145.9L733.1 143.8L733.3 141.7" stroke="#ff1d00"/>
<path d="M729.4 267.4L728.8 264.5L728.2 261.7L727.7 258.8L727.2 256L726.8 253.1L726.4 250.3L726 247.5L725.7 244.6L725.4 241.8L725.2 239L725 236.2L724.8 233.3L724.7 230.5L724.6 227.7L724.5 224.9L724.5 222.2L724.5 219.4L724.6 216.6L724.6 213.9L724.8 211.1L724.9 208.4L725.1 205.6L725.3 202.9L725.5 200.2L725.8 197.5L726.1 194.8L726.4 192.1L726.8 189.4L727.2 186.8L727.6 184.2L728 181.5L728.4 178.9L728.9 176.3L729.4 173.8L729.8 171.2L730.4 168.7L730.9 166.2L731.4 163.7L731.9 161.2L732.4 158.8L733 156.4L733.5 154L734 151.7L734.5 149.3L735 147.1L735.5 144.8L736 142.6L736.4 140.4L736.8 138.3L737.1 136.2L737.4 134.2L737.7 132.2L737.9 130.3L738 128.4L738.1 126.6L738.1 124.8L738 123.2L737.8 121.5L737.5 120" stroke="#ff1d00"/>
<path d="M729.8 266.2L729.9 263.2L729.9 260.1L730 257.1L730.1 254.1L730.3 251L730.6 248L730.8 245L731.1 241.9L731.5 238.9L731.9 235.9L732.4 232.9L732.9 229.8L733.4 226.8L734 223.8L734.6 220.8L735.3 217.8L736 214.8L736.7 211.8L737.5 208.8L738.3 205.8L739.2 202.8L740.1 199.8L741.1 196.8L742.1 193.8L743.1 190.9L744.1 187.9L745.2 184.9L746.4 182L747.5 179L748.7 176.1L750 173.1L751.2 170.2L752.5 167.3L753.8 164.4L755.2 161.5L756.6 158.6L758 155.7L759.4 152.8L760.8 149.9L762.3 147.1L763.8 144.3L765.3 141.4L766.8 138.6L768.4 135.8L769.9 133.1L771.5 130.3L773 127.6L774.6 124.9L776.1 122.2L777.7 119.5L779.2 116.9L780.7 114.3L782.2 111.8L783.6 109.2L785.1 106.8L786.4 104.4L787.8 102L789 99.7L790.2 97.4L791.3 95.2L792.3 93.1L793.2 91.1L793.9 89.1L794.5 87.3L794.9 85.6L795 84L795 82.5" stroke="#ff1d00"/>
<path d="M732.3 256.5L733.3 253.3L734.4 250.1L735.6 247L736.8 243.8L738 240.6L739.3 237.4L740.6 234.2L742 231.1L743.5 227.9L744.9 224.7L746.5 221.5L748 218.4L749.6 215.2L751.3 212L753 208.8L754.8 205.7L756.5 202.5L758.4 199.3L760.2 196.1L762.2 193L764.1 189.8L766.1 186.6L768.1 183.4L770.2 180.2L772.3 177.1L774.5 173.9L776.7 170.7L778.9 167.5L781.1 164.4L783.4 161.2L785.7 158L788.1 154.8L790.5 151.7L792.9 148.5L795.4 145.3L797.9 142.1L800.4 138.9L802.9 135.8L805.5 132.6L808.1 129.4L810.7 126.2L813.4 123.1L816.1 119.9L818.8 116.7L821.5 113.5L824.3 110.4L827.1 107.2L829.9 104L832.7 100.8L835.5 97.6L838.4 94.5L841.3 91.3L844.2 88.1L847.1 84.9L850 81.8L853 78.6L855.9 75.4L858.9 72.2L861.9 69.1L864.9 65.9L867.9 62.7L870.9 59.5L873.9 56.4L877 53.2L880 50" stroke="#ff1d00"/>
<path d="M727.2 270.9L728 267.7L728.9 264.5L729.7 261.4L730.7 258.2L731.6 255L732.7 251.8L733.8 248.6L734.9 245.4L736.1 242.2L737.3 239L738.6 235.8L739.9 232.6L741.3 229.4L742.7 226.2L744.1 223L745.7 219.8L747.2 216.7L748.8 213.5L750.5 210.3L752.2 207.1L753.9 203.9L755.7 200.7L757.5 197.5L759.4 194.3L761.3 191.1L763.2 187.9L765.2 184.7L767.2 181.5L769.3 178.3L771.4 175.2L773.5 172L775.7 168.8L777.9 165.6L780.2 162.4L782.5 159.2L784.8 156L787.2 152.8L789.6 149.6L792 146.4L794.4 143.2L796.9 140L799.5 136.8L802 133.7L804.6 130.5L807.2 127.3L809.8 124.1L812.5 120.9L815.2 117.7L817.9 114.5L820.6 111.3L823.4 108.1L826.2 104.9L829 101.7L831.8 98.6L834.7 95.4L837.5 92.2L840.4 89L843.3 85.8L846.3 82.6L849.2 79.4L852.1 76.2L855.1 73.1L858.1 69.9L861.1 66.7L864.1 63.5L867.1 60.3L870.1 57.2L873.1 54L876.1 50.8L879.1 47.7L882.1 44.5L885.1 41.4L888 38.4L890.8 35.4L893.2 32.7L893.8 31M915.4 31.7" stroke="#ff1d00"/>
<path d="M729.9 269.9L731.3 266.8L732.7 263.6L734.2 260.5L735.8 257.3L737.3 254.2L738.9 251.1L740.6 247.9L742.3 244.8L744.1 241.6L745.9 238.5L747.7 235.4L749.6 232.2L751.6 229.1L753.5 226L755.5 222.8L757.6 219.7L759.7 216.6L761.8 213.4L764 210.3L766.2 207.2L768.5 204.1L770.8 201L773.1 197.8L775.4 194.7L777.8 191.6L780.3 188.5L782.7 185.4L785.2 182.3L787.7 179.2L790.3 176.1L792.9 173L795.5 169.9L798.1 166.8L800.8 163.7L803.4 160.6L806.2 157.5L808.9 154.4L811.7 151.4L814.4 148.3L817.2 145.2L820 142.2L822.9 139.1L825.7 136.1L828.6 133L831.5 130L834.4 127L837.3 124L840.2 121L843.1 118L846.1 115L849 112.1L851.9 109.1L854.9 106.2L857.8 103.3L860.8 100.4L863.7 97.6L866.6 94.8L869.6 92L872.5 89.2L875.4 86.5L878.3 83.8L881.1 81.2L884 78.7L886.8 76.2L889.6 73.8L892.4 71.5L895.1 69.4L897.9 67.3L900.6 65.4L903.3 63.7L906 62.3L908.7 61L911.5 60L914.4 59.3L917.4 58.9L920.6 58.8L923.9 59.1L927.4 59.6L931.2 60.5L935.2 61.6L939.5 63L944 64.6L948.7 66.4L953.6 68.3L958.6 70.4L963.8 72.7L969.2 75" stroke="#ff1d00"/>
<path d="M729.9 253.7L732 250.6L734 247.5L736.1 244.4L738.3 241.4L740.5 238.3L742.7 235.2L745 232.2L747.3 229.1L749.7 226L752.1 223L754.5 219.9L757 216.9L759.5 213.8L762 210.8L764.6 207.7L767.2 204.7L769.9 201.7L772.6 198.7L775.3 195.6L778 192.6L780.8 189.6L783.6 186.6L786.4 183.6L789.3 180.6L792.2 177.6L795.1 174.7L798 171.7L801 168.7L803.9 165.8L806.9 162.8L809.9 159.9L812.9 157L816 154.1L819 151.2L822.1 148.3L825.2 145.4L828.2 142.6L831.3 139.8L834.4 136.9L837.5 134.1L840.6 131.4L843.7 128.6L846.8 125.9L850 123.2L853 120.5L856.1 117.9L859.2 115.3L862.3 112.7L865.4 110.2L868.4 107.7L871.5 105.3L874.5 102.9L877.5 100.6L880.5 98.4L883.4 96.2L886.4 94.1L889.3 92.1L892.2 90.2L895.2 88.5L898 86.8L900.9 85.2L903.8 83.8L906.7 82.5L909.6 81.4L912.5 80.5L915.5 79.7L918.5 79.1L921.5 78.7L924.6 78.5L927.8 78.5L931.2 78.7L934.6 79.1L938.1 79.7L941.8 80.4L945.6 81.4L949.5 82.5L953.5 83.7L957.7 85.2L962 86.7L966.4 88.4L970.9 90.2L975.5 92.1L980.3 94.1L985.1 96.1L990 98.3" stroke="#ff1d00"/>
<path d="M727.9 267.3L728.2 264.1L728.6 261L728.9 257.8L729.4 254.6L729.9 251.5L730.4 248.3L731 245.2L731.6 242L732.3 238.9L733 235.7L733.8 232.5L734.6 229.4L735.5 226.2L736.4 223.1L737.4 219.9L738.4 216.8L739.4 213.7L740.5 210.5L741.7 207.4L742.9 204.2L744.1 201.1L745.4 198L746.7 194.8L748 191.7L749.4 188.6L750.9 185.4L752.4 182.3L753.9 179.2L755.5 176.1L757.1 173L758.7 169.9L760.4 166.7L762.1 163.6L763.8 160.5L765.6 157.5L767.4 154.4L769.3 151.3L771.1 148.2L773 145.1L775 142.1L776.9 139L778.9 136L780.9 132.9L783 129.9L785 126.9L787.1 123.9L789.2 120.9L791.2 117.9L793.4 115L795.5 112L797.6 109.1L799.7 106.2L801.8 103.3L803.9 100.5L806 97.7L808.1 94.9L810.1 92.1L812.1 89.4L814 86.8L815.9 84.2L817.7 81.6L819.4 79.2L821 76.8L822.4 74.5L823.7 72.3L824.8 70.3L825.5 68.4L826 66.7L826.2 65.2L825.8 63.9L825 62.8L823.7 62L821.7 61.5L818.9 61.3L815.5 61.4L811.3 61.8L806.4 62.5L800.7 63.4L794.3 64.6L787.3 66.1L779.6 67.7L771.5 69.5M1036.9 71.5L1040.7 73.6L1044.9 75.8L1049.4 78.2L1054.1 80.6L1059 83.1L1064 85.7L1069.2 88.3" stroke="#ff1d00"/>
<path d="M730.1 268L730.2 264.9L730.4 261.8L730.7 258.7L731 255.5L731.3 252.4L731.7 249.3L732.1 246.2L732.6 243.1L733.1 240L733.7 236.9L734.3 233.8L734.9 230.7L735.7 227.6L736.4 224.5L737.2 221.4L738 218.3L738.9 215.2L739.9 212.1L740.8 209L741.8 205.9L742.9 202.9L744 199.8L745.1 196.7L746.3 193.6L747.5 190.5L748.8 187.5L750.1 184.4L751.4 181.4L752.8 178.3L754.2 175.3L755.6 172.2L757.1 169.2L758.6 166.1L760.2 163.1L761.8 160.1L763.4 157.1L765 154L766.7 151L768.4 148.1L770.1 145.1L771.8 142.1L773.6 139.1L775.4 136.2L777.2 133.2L779 130.3L780.9 127.4L782.7 124.5L784.6 121.6L786.4 118.8L788.3 115.9L790.2 113.1L792 110.3L793.9 107.6L795.7 104.8L797.5 102.2L799.3 99.5L801 96.9L802.7 94.3L804.4 91.8L805.9 89.4L807.4 87L808.8 84.7L810 82.5L811.1 80.3L812.1 78.3L812.8 76.4L813.3 74.7L813.5 73.1L813.4 71.7L813 70.4L812.1 69.4L810.8 68.6L808.9 68L806.6 67.6L803.6 67.5L800 67.7L795.8 68.1L791 68.7L785.6 69.6L779.6 70.7L773.1 72L766 73.5L758.5 75.1L750.5 76.9M1060.7 78.8L1064.3 80.8L1068.2 83L1072.4 85.2L1076.7 87.5L1081.3 89.9L1086 92.4L1090.9 94.9L1095.8 97.5" stroke="#ff1d00"/>
<path d="M730.4 253.1L732.8 250.3L735.3 247.4L737.8 244.6L740.4 241.7L743 238.9L745.6 236L748.3 233.2L751 230.4L753.7 227.6L756.4 224.8L759.2 222L762 219.2L764.9 216.4L767.8 213.6L770.6 210.9L773.6 208.1L776.5 205.3L779.5 202.6L782.5 199.9L785.5 197.2L788.5 194.5L791.5 191.8L794.6 189.1L797.7 186.4L800.7 183.8L803.8 181.1L807 178.5L810.1 175.9L813.2 173.3L816.3 170.8L819.5 168.2L822.6 165.7L825.8 163.2L828.9 160.8L832.1 158.3L835.3 155.9L838.4 153.5L841.6 151.1L844.7 148.8L847.9 146.5L851 144.3L854.1 142.1L857.2 139.9L860.3 137.8L863.5 135.7L866.5 133.6L869.6 131.6L872.7 129.7L875.7 127.8L878.8 126L881.8 124.3L884.8 122.6L887.8 121L890.8 119.5L893.8 118L896.8 116.7L899.8 115.4L902.8 114.2L905.8 113.1L908.8 112.1L911.7 111.2L914.7 110.4L917.8 109.8L920.8 109.2" stroke="#ff1d00"/>
<path d="M727.6 269.9L730.1 267.3L732.6 264.7L735.2 262.2L737.8 259.6L740.5 257L743.2 254.4L745.9 251.9L748.6 249.3L751.4 246.8L754.1 244.2L757 241.7L759.8 239.2L762.6 236.7L765.5 234.2L768.4 231.7L771.3 229.2L774.3 226.7L777.2 224.3L780.2 221.8L783.2 219.4L786.2 217L789.2 214.6L792.2 212.2L795.2 209.8L798.3 207.4L801.4 205.1L804.4 202.8L807.5 200.5L810.6 198.2L813.7 195.9L816.8 193.7L819.9 191.5L823 189.3L826.1 187.1L829.2 185L832.3 182.8L835.4 180.7L838.5 178.7L841.6 176.7L844.7 174.7L847.8 172.7L850.8 170.8L853.9 168.9L857 167L860.1 165.2L863.1 163.4L866.2 161.7L869.3 160L872.3 158.3L875.4 156.7L878.4 155.2L881.4 153.7L884.4 152.2L887.4 150.8L890.5 149.5L893.5 148.2L896.5 147L899.5 145.8L902.5 144.7L905.5 143.7L908.5 142.8L911.5 141.9L914.5 141.1L917.5 140.3L920.5 139.7L923.6 139.1L926.6 138.6L929.7 138.1L932.8 137.8L935.9 137.5L939 137.3L942.1 137.2L945.3 137.2L948.5 137.2L951.7 137.4L955 137.6L958.3 137.9L961.6 138.2L965 138.7" stroke="#ff1d00"/>
<path d="M726.9 268L728.7 265L730.6 262L732.4 258.9L734.4 255.9L736.3 252.9L738.3 249.9L740.4 246.9L742.5 243.9L744.6 240.9L746.8 237.9L749 234.9L751.3 231.9L753.6 228.9L755.9 226L758.2 223L760.6 220L763.1 217L765.5 214L768 211.1L770.6 208.1L773.1 205.1L775.7 202.2L778.3 199.2L781 196.3L783.7 193.4L786.4 190.4L789.1 187.5L791.8 184.6L794.6 181.7L797.4 178.8L800.2 175.9L803.1 173L805.9 170.1L808.8 167.2L811.7 164.4L814.6 161.5L817.5 158.7L820.4 155.9L823.4 153.1L826.3 150.3L829.3 147.5L832.3 144.7L835.2 142L838.2 139.3L841.2 136.5L844.2 133.9L847.2 131.2L850.2 128.6L853.1 126L856.1 123.4L859.1 120.9L862.1 118.3L865 115.9L868 113.4L870.9 111.1L873.8 108.7L876.7 106.5L879.6 104.2L882.5 102.1L885.4 100L888.2 98L891.1 96.1L893.9 94.2L896.7 92.5" stroke="#ff1d00"/>
<path d="M732.6 251.8L732.3 248.9L732 246L731.8 243.1L731.6 240.2L731.5 237.3L731.4 234.4L731.4 231.5L731.3 228.7L731.4 225.8L731.4 222.9L731.5 220.1L731.7 217.2L731.8 214.4L732 211.5L732.3 208.7L732.5 205.9L732.8 203.1L733.2 200.3L733.5 197.5L733.9 194.7L734.3 192L734.8 189.2L735.3 186.5L735.8 183.7L736.3 181L736.9 178.3L737.5 175.6L738.1 172.9L738.7 170.3L739.3 167.6L740 165L740.6 162.4L741.3 159.8L742 157.3L742.6 154.7L743.3 152.2L744 149.8L744.7 147.3L745.4 144.9L746 142.5L746.7 140.1L747.3 137.8L747.9 135.6L748.5 133.3L749 131.1L749.5 129L749.9 126.9L750.3 124.9L750.6 122.9L750.9 121L751 119.1L751.1 117.3L751.1 115.6L751 114L750.7 112.4L750.3 111L749.8 109.6L749.1 108.3L748.2 107.2L747.2 106.1L745.9 105.1L744.4 104.3L742.7 103.6L740.8 102.9L738.6 102.5L736.2 102.1L733.5 101.9L730.5 101.8L727.2 101.8L723.7 102L719.8 102.3L715.7 102.7L711.3 103.2L706.5 103.9L701.5 104.7L696.2 105.6L690.7 106.6L684.8 107.7L678.8 109L672.4 110.3L665.9 111.7L659.1 113.2L652.1 114.8L645 116.5L637.6 118.2L630.1 120L622.4 121.9L614.6 123.9M1196.8 125.9L1199.9 127.9L1203.2 130.1L1206.5 132.2L1209.8 134.4L1213.3 136.7" stroke="#ff1d00"/>
<path d="M728.8 270.1L727.9 267.3L727.1 264.6L726.3 261.8L725.6 259.1L724.9 256.3L724.2 253.6L723.6 250.8L723 248.1L722.4 245.4L721.9 242.6L721.4 239.9L720.9 237.2L720.5 234.5L720.1 231.8L719.8 229.1L719.4 226.5L719.1 223.8L718.9 221.1L718.7 218.5L718.5 215.8L718.3 213.2L718.1 210.6L718 208L718 205.4L717.9 202.8L717.9 200.3L717.9 197.7L717.9 195.2L717.9 192.7L718 190.2L718 187.7L718.1 185.2L718.2 182.8L718.3 180.4L718.5 178L718.6 175.6L718.7 173.2L718.9 170.9L719 168.6L719.2 166.3L719.3 164.1L719.4 161.9L719.5 159.7L719.6 157.6L719.7 155.5L719.8 153.4L719.8 151.4L719.8 149.4L719.8 147.4L719.7 145.6L719.6 143.7L719.4 141.9L719.2 140.2L718.9 138.5L718.5 136.9L718 135.3L717.5 133.8L716.9 132.4L716.1 131L715.3 129.7L714.4 128.5L713.3 127.4L712.1 126.4L710.7 125.4L709.2 124.5L707.6 123.7L705.7 123L703.7 122.4L701.6 121.9L699.2 121.5L696.7 121.2L693.9 121L691 120.8L687.8 120.8L684.4 120.9L680.9 121.1L677.1 121.4L673.1 121.7L668.8 122.2L664.4 122.8L659.8 123.5L654.9 124.2L649.9 125.1L644.6 126L639.1 127L633.5 128.1L627.7 129.3L621.7 130.6L615.5 131.9L609.2 133.3L602.7 134.8L596.1 136.3L589.4 137.9L582.5 139.6L575.5 141.3L568.4 143.1L561.2 144.9L553.9 146.8M1255.7 148.7L1258.1 150.7L1260.5 152.7L1263 154.7L1265.5 156.8L1268.1 158.9L1270.7 161.1L1273.3 163.3" stroke="#ff1d00"/>
<path d="M730 246.7L729 244.2L728.1 241.7L727.2 239.2L726.4 236.7L725.6 234.2L724.8 231.8L724 229.3L723.3 226.9L722.5 224.4L721.8 222L721.2 219.6L720.5 217.2L719.9 214.8L719.3 212.5L718.7 210.1L718.1 207.8L717.5 205.5L717 203.2L716.4 200.9L715.9 198.6L715.4 196.4L714.9 194.2L714.4 192L714 189.8L713.5 187.7L713 185.6L712.5 183.5L712.1 181.4L711.6 179.4L711.1 177.3L710.6 175.4L710.1 173.4L709.6 171.5L709 169.6L708.5 167.8L707.9 166L707.3 164.2L706.6 162.5L706 160.8L705.2 159.2L704.5 157.6L703.7 156.1L702.8 154.6L701.9 153.2L700.9 151.8L699.9 150.5L698.8 149.2L697.6 148L696.3 146.9L695 145.8L693.5 144.8L692 143.8L690.3 142.9L688.6 142.1L686.7 141.4L684.7 140.7L682.6 140.1L680.4 139.6L678 139.2L675.5 138.8L672.9 138.5L670.1 138.3L667.2 138.2L664.1 138.1L660.9 138.2L657.5 138.3L654 138.5L650.3 138.7L646.4 139.1L642.4 139.5L638.3 140" stroke="#dd11ff"/>
<path d="M734.7 245.5L733.2 243.3L731.7 241.2L730.3 239L728.8 236.9L727.3 234.8L725.9 232.7L724.5 230.6L723.1 228.6L721.7 226.6L720.3 224.5L719 222.5L717.6 220.6L716.2 218.6L714.9 216.7L713.6 214.7L712.2 212.8L710.9 211L709.6 209.1L708.3 207.3L706.9 205.5L705.6 203.7L704.3 202L703 200.3L701.6 198.6L700.3 196.9L698.9 195.3L697.5 193.7L696.2 192.1L694.8 190.6L693.3 189.1L691.9 187.7L690.4 186.3L688.9 184.9L687.4 183.6L685.8 182.3L684.2 181L682.6 179.8L680.9 178.6L679.2 177.5L677.5 176.4L675.7 175.4L673.8 174.4L671.9 173.5L669.9 172.6L667.9 171.8L665.8 171L663.7 170.3L661.4 169.6L659.1 169L656.8 168.5L654.3 168L651.8 167.5L649.2 167.1L646.5 166.8L643.7 166.5L640.8 166.3L637.9 166.2L634.8 166.1L631.7 166L628.5 166.1L625.1 166.2L621.7 166.3" stroke="#dd11ff"/>
<path d="M736.2 247.3L735.5 244.7L734.7 242.1L734 239.4L733.3 236.8L732.6 234.2L732 231.6L731.4 229L730.8 226.4L730.3 223.8L729.8 221.2L729.3 218.7L728.8 216.1L728.4 213.6L727.9 211.1L727.5 208.6L727.2 206.1L726.8 203.6L726.5 201.1L726.2 198.7L725.9 196.3L725.6 193.9L725.3 191.5L725.1 189.1L724.8 186.7L724.6 184.4L724.4 182.1L724.1 179.8L723.9 177.6L723.7 175.4L723.5 173.2L723.3 171L723 168.9L722.8 166.8L722.6 164.7L722.3 162.6L722 160.6L721.7 158.7L721.4 156.8L721 154.9L720.6 153L720.2 151.3L719.7 149.5L719.2 147.8L718.6 146.2L717.9 144.6L717.2 143.1L716.4 141.6L715.6 140.2L714.6 138.9L713.6 137.6L712.5 136.4L711.2 135.3L709.9 134.2L708.4 133.3L706.9 132.4L705.1 131.5L703.3 130.8" stroke="#dd11ff"/>
<path d="M731.3 249.6L731.2 246.6L731.1 243.7L731.1 240.7L731.1 237.8L731.1 234.9L731.2 231.9L731.3 229L731.5 226.1L731.7 223.2L731.9 220.3L732.2 217.4L732.5 214.5L732.9 211.6L733.3 208.7L733.7 205.8L734.2 202.9L734.7 200.1L735.2 197.2L735.8 194.4L736.4 191.5L737 188.7L737.6 185.9L738.3 183.1L739 180.3L739.8 177.5L740.5 174.7L741.3 171.9L742.1 169.2L743 166.5L743.8 163.8L744.7 161.1L745.6 158.4L746.5 155.7L747.4 153.1L748.3 150.5L749.2 147.9L750.1 145.3L751 142.8L751.9 140.3L752.8 137.8L753.7 135.4L754.6 133L755.5 130.6L756.3 128.3L757.1 126L757.8 123.7L758.5 121.5L759.1 119.4L759.7 117.3L760.2 115.3L760.6 113.4L761 111.5L761.2 109.7L761.3 107.9L761.3 106.3L761.1 104.8L760.8 103.3" stroke="#dd11ff"/>
<path d="M736.7 249.9L738.1 246.7L739.5 243.5L741 240.3L742.5 237.1L744.1 233.9L745.7 230.8L747.4 227.6L749.1 224.4L750.9 221.2L752.7 218L754.5 214.8L756.4 211.7L758.4 208.5L760.4 205.3L762.4 202.1L764.4 198.9L766.5 195.8L768.7 192.6L770.8 189.4L773.1 186.2L775.3 183L777.6 179.9L779.9 176.7L782.3 173.5L784.7 170.3L787.1 167.1L789.5 164L792 160.8L794.6 157.6L797.1 154.4L799.7 151.3L802.3 148.1L805 144.9L807.6 141.8L810.3 138.6L813 135.4L815.8 132.2L818.5 129.1L821.3 125.9L824.1 122.8L827 119.6L829.8 116.4L832.7 113.3L835.6 110.1L838.5 107L841.4 103.8L844.4 100.7L847.3 97.6L850.3 94.4L853.2 91.3L856.2 88.2L859.2 85.1L862.2 82L865.2 78.9L868.2 75.8L871.2 72.8L874.2 69.7L877.1 66.7L880.1 63.7L883 60.8L886 57.9L888.9 55.1L891.7 52.3L894.5 49.7L897.3 47.2L900 45" stroke="#dd11ff"/>
<path d="M738.6 248.4L740.6 245.4L742.5 242.3L744.6 239.3L746.6 236.2L748.8 233.2L750.9 230.2L753.1 227.1L755.3 224.1L757.6 221.1L759.9 218.1L762.3 215L764.6 212L767 209L769.5 206L772 203L774.5 200L777 197L779.6 194L782.2 191L784.8 188L787.5 185L790.2 182L792.9 179L795.6 176.1L798.4 173.1L801.1 170.2L803.9 167.2L806.8 164.3L809.6 161.3L812.5 158.4L815.3 155.5L818.2 152.6L821.1 149.7L824 146.8L827 143.9L829.9 141.1L832.9 138.2L835.8 135.4L838.8 132.6L841.7 129.8L844.7 127L847.7 124.3L850.6 121.6L853.6 118.9L856.6 116.2L859.5 113.5L862.5 110.9L865.4 108.4L868.4 105.8L871.3 103.3L874.2 100.9L877.1 98.5L880 96.2L882.8 93.9L885.7 91.7L888.5 89.6L891.3 87.6L894.1 85.6L896.9 83.8L899.7 82.1L902.5 80.5L905.2 79.1L908 77.8L910.8 76.7" stroke="#dd11ff"/>
<path d="M735.3 244.3L737.2 241.2L739.2 238.1L741.2 235L743.3 231.9L745.4 228.8L747.5 225.7L749.7 222.6L751.9 219.5L754.2 216.4L756.5 213.4L758.8 210.3L761.2 207.2L763.6 204.1L766.1 201.1L768.6 198L771.1 194.9L773.7 191.9L776.3 188.8L778.9 185.7L781.5 182.7L784.2 179.6L786.9 176.6L789.7 173.5L792.4 170.5L795.2 167.5L798.1 164.4L800.9 161.4L803.8 158.4L806.7 155.4L809.6 152.4L812.5 149.4L815.4 146.4L818.4 143.4L821.4 140.4L824.4 137.5L827.4 134.5L830.4 131.6L833.4 128.7L836.5 125.8L839.5 122.9L842.5 120L845.6 117.1L848.7 114.3L851.7 111.5L854.8 108.7L857.8 105.9L860.8 103.2L863.9 100.5L866.9 97.8L869.9 95.2L872.9 92.6L875.9 90.1L878.8 87.6L881.8 85.2L884.7 82.9L887.6 80.6L890.4 78.5L893.3 76.4L896.1 74.5L898.9 72.8L901.7 71.1L904.5 69.7L907.3 68.4L910.1 67.4L913 66.6L916 66L919 65.7L922.1 65.6L925.4 65.8L928.9 66.3L932.5 67L936.2 67.9L940.2 69.1L944.3 70.4L948.6 72L953.1 73.7L957.7 75.5L962.5 77.5" stroke="#dd11ff"/>
<path d="M736.5 246L738.5 242.9L740.5 239.8L742.6 236.7L744.6 233.6L746.8 230.4L749 227.3L751.2 224.3L753.4 221.2L755.7 218.1L758.1 215L760.4 211.9L762.9 208.8L765.3 205.7L767.8 202.6L770.3 199.6L772.9 196.5L775.5 193.4L778.1 190.3L780.7 187.3L783.4 184.2L786.1 181.2L788.9 178.1L791.6 175.1L794.4 172L797.2 169L800.1 166L803 163L805.8 159.9L808.8 156.9L811.7 153.9L814.6 150.9L817.6 148L820.6 145L823.6 142L826.6 139.1L829.6 136.1L832.6 133.2L835.6 130.3L838.7 127.4L841.7 124.5L844.8 121.7L847.8 118.9L850.9 116L853.9 113.3L857 110.5L860 107.8L863.1 105.1L866.1 102.4L869.1 99.8L872.1 97.2L875.1 94.7L878 92.3L881 89.9L883.9 87.6L886.8 85.3L889.7 83.2L892.5 81.1L895.4 79.2L898.2 77.4L901 75.7L903.9 74.2L906.7 72.9L909.5 71.7L912.4 70.8L915.3 70.1L918.3 69.6L921.4 69.3L924.6 69.3L927.9 69.5L931.4 69.9L935 70.6L938.8 71.5L942.7 72.6L946.8 73.9L951.1 75.4L955.5 77L960.1 78.8L964.8 80.7L969.7 82.8L974.6 84.9L979.7 87.1L984.8 89.4L990.1 91.8L995.4 94.2L1000.7 96.7L1006.2 99.3L1011.6 101.9L1017.1 104.6L1022.7 107.2L1028.2 110L1033.8 112.7L1039.4 115.5L1045 118.3" stroke="#dd11ff"/>
<path d="M733.9 244.3L735.3 241.1L736.7 237.9L738.2 234.7L739.7 231.6L741.3 228.4L743 225.2L744.6 222L746.4 218.8L748.1 215.6L750 212.4L751.8 209.2L753.7 206L755.7 202.8L757.7 199.6L759.7 196.4L761.8 193.2L763.9 190L766.1 186.8L768.3 183.6L770.5 180.4L772.8 177.2L775.1 174L777.4 170.8L779.8 167.6L782.3 164.4L784.7 161.2L787.2 158.1L789.7 154.9L792.3 151.7L794.9 148.5L797.5 145.3L800.2 142.1L802.8 138.9L805.6 135.7L808.3 132.5L811.1 129.3L813.9 126.1L816.7 122.9L819.5 119.7L822.4 116.6L825.3 113.4L828.2 110.2L831.1 107L834.1 103.8L837 100.6L840 97.4L843 94.2L846.1 91.1L849.1 87.9L852.1 84.7L855.2 81.5L858.3 78.4L861.4 75.2L864.5 72L867.6 68.9L870.7 65.7L873.8 62.6L876.9 59.4L880 56.3L883.1 53.2L886.2 50.1L889.2 47.1L892.2 44.1L895.2 41.2L898.1 38.5L900.9 36.1L903.6 34.5L906.6 34.1L910.6 35.1L915.6 37.1L921.3 39.7L927.5 42.5L933.8 45.4L940.3 48.4L946.8 51.5L953.4 54.6L960.1 57.7L966.7 60.8" stroke="#dd11ff"/>
<path d="M732.6 246.2L733.9 243L735.3 239.7L736.7 236.5L738.2 233.3L739.7 230.1L741.3 226.9L742.9 223.7L744.6 220.5L746.3 217.2L748.1 214L749.9 210.8L751.8 207.6L753.7 204.4L755.6 201.2L757.6 198L759.6 194.8L761.7 191.5L763.8 188.3L766 185.1L768.2 181.9L770.4 178.7L772.7 175.5L775 172.3L777.4 169L779.7 165.8L782.2 162.6L784.6 159.4L787.1 156.2L789.6 153L792.2 149.8L794.8 146.6L797.4 143.3L800.1 140.1L802.8 136.9L805.5 133.7L808.2 130.5L811 127.3L813.8 124.1L816.6 120.9L819.5 117.7L822.4 114.4L825.3 111.2L828.2 108L831.1 104.8L834.1 101.6L837.1 98.4L840.1 95.2L843.1 92L846.1 88.8L849.2 85.6L852.2 82.4L855.3 79.2L858.4 75.9L861.5 72.7L864.6 69.5L867.8 66.4L870.9 63.2L874 60L877.2 56.8L880.3 53.6L883.5 50.4L886.6 47.3L889.7 44.2L892.8 41.1L895.9 38.1L898.8 35.2L901.6 32.8L904.4 31.6L908.4 32.7L914 35.1L920.2 37.9L926.7 40.9L933.3 44L940 47.1L946.7 50.3L953.5 53.4L960.2 56.6L967 59.8L973.7 63L980.5 66.2L987.2 69.4L993.9 72.6L1000.6 75.8L1007.2 79L1013.8 82.2L1020.4 85.4L1027 88.6L1033.5 91.8L1040 95" stroke="#dd11ff"/>
<path d="M738.2 242.4L740.6 239.5L743 236.5L745.4 233.6L747.9 230.6L750.4 227.7L753 224.7L755.5 221.8L758.1 218.9L760.8 215.9L763.5 213L766.2 210.1L768.9 207.2L771.7 204.3L774.5 201.4L777.3 198.5L780.2 195.6L783.1 192.8L786 189.9L788.9 187.1L791.8 184.2L794.8 181.4L797.8 178.6L800.8 175.8L803.8 173L806.8 170.2L809.9 167.4L812.9 164.6L816 161.9L819.1 159.2L822.2 156.5L825.3 153.8L828.4 151.1L831.5 148.4L834.6 145.8L837.7 143.2L840.8 140.6L843.9 138.1L847 135.6L850.1 133.1L853.2 130.6L856.3 128.2L859.4 125.8L862.4 123.5L865.5 121.2L868.5 119L871.6 116.8L874.6 114.7L877.6 112.6L880.6 110.6L883.6 108.7L886.5 106.8L889.5 105L892.4 103.4L895.3 101.8L898.3 100.3L901.2 98.9L904.1 97.6L907 96.4L909.9 95.4L912.9 94.5L915.8 93.7L918.8 93.1L921.8 92.6L924.9 92.2L928 92.1L931.2 92L934.4 92.1L937.7 92.4L941.1 92.8L944.6 93.3L948.1 94L951.8 94.9L955.5 95.8L959.3 96.9L963.3 98.1L967.3 99.5L971.4 100.9L975.6 102.4L979.8 104.1L984.2 105.8" stroke="#dd11ff"/>
<path d="M731.4 248.1L733.1 245L734.9 241.8L736.8 238.7L738.7 235.6L740.6 232.5L742.6 229.4L744.7 226.2L746.7 223.1L748.9 220L751 216.9L753.2 213.8L755.5 210.7L757.8 207.5L760.1 204.4L762.5 201.3L764.9 198.2L767.3 195.1L769.8 192L772.3 188.9L774.8 185.8L777.4 182.7L780 179.6L782.7 176.5L785.3 173.4L788 170.3L790.8 167.3L793.5 164.2L796.3 161.1L799.1 158L802 155L804.8 151.9L807.7 148.8L810.6 145.8L813.6 142.7L816.5 139.7L819.5 136.7L822.5 133.6L825.5 130.6L828.5 127.6L831.5 124.6L834.6 121.6L837.6 118.6L840.7 115.7L843.7 112.7L846.8 109.8L849.9 106.9L852.9 104L856 101.1L859.1 98.2L862.1 95.4L865.2 92.6L868.2 89.9L871.3 87.1L874.3 84.5L877.3 81.8L880.2 79.3L883.2 76.8L886.1 74.4L889 72L891.9 69.8L894.7 67.7L897.5 65.8" stroke="#dd11ff"/>
<path d="M738.6 248.9L738.3 246.1L738 243.2L737.7 240.3L737.5 237.4L737.3 234.5L737.1 231.7L737 228.8L736.9 225.9L736.8 223.1L736.8 220.3L736.8 217.4L736.9 214.6L737 211.8L737.1 209L737.2 206.2L737.4 203.4L737.6 200.6L737.9 197.8L738.1 195L738.4 192.3L738.8 189.5L739.1 186.8L739.5 184.1L739.9 181.4L740.3 178.7L740.7 176.1L741.2 173.4L741.7 170.8L742.2 168.2L742.7 165.6L743.2 163L743.7 160.5L744.2 157.9L744.7 155.4L745.3 153L745.8 150.5L746.3 148.1L746.8 145.7L747.3 143.4L747.8 141.1L748.2 138.8L748.7 136.6L749.1 134.4L749.4 132.3L749.7 130.2L750 128.1L750.2 126.2L750.3 124.2L750.4 122.4L750.3 120.6L750.2 118.9L750 117.2L749.7 115.7L749.2 114.2L748.6 112.8L747.9 111.5L747 110.3L745.9 109.2L744.6 108.2L743.2 107.3L741.5 106.5L739.7 105.9L737.6 105.3L735.2 104.9L732.6 104.6L729.8 104.5L726.6 104.4L723.2 104.5L719.6 104.7L715.6 105.1L711.4 105.5L706.9 106.1L702.1 106.8L697.1 107.6L691.8 108.5L686.2 109.6L680.4 110.7L674.3 111.9L668.1 113.3L661.6 114.7L654.9 116.2L648 117.8L640.9 119.5L633.6 121.2L626.2 123L618.7 124.9L611 126.8L603.2 128.8L595.3 130.9M1215.6 133" stroke="#dd11ff"/>
<path d="M717 318L716.9 314.8L716.9 311.6L717 308.4L717.1 305.2L717.2 302.1L717.5 298.9L717.7 295.7L718 292.5L718.4 289.3L718.8 286.1L719.3 282.9L719.9 279.7L720.4 276.5L721.1 273.4L721.8 270.2L722.5 267L723.3 263.8L724.2 260.6L725.1 257.4L726 254.2L727 251L728.1 247.8L729.2 244.7L730.3 241.5L731.6 238.3L732.8 235.1L734.1 231.9L735.5 228.7L736.9 225.5L738.3 222.3L739.8 219.2L741.4 216L743 212.8L744.6 209.6L746.3 206.4L748 203.2L749.8 200L751.6 196.8L753.5 193.7L755.4 190.5L757.4 187.3L759.3 184.1L761.4 180.9L763.5 177.7L765.6 174.5L767.7 171.3L769.9 168.2L772.2 165L774.4 161.8L776.7 158.6L779.1 155.4L781.5 152.2L783.9 149L786.3 145.9L788.8 142.7L791.3 139.5L793.9 136.3L796.5 133.1L799.1 129.9L801.7 126.8L804.4 123.6L807.1 120.4L809.8 117.2L812.5 114L815.3 110.9L818.1 107.7L820.9 104.5L823.8 101.3L826.6 98.2L829.5 95L832.4 91.8L835.3 88.7L838.3 85.5L841.2 82.3L844.2 79.2L847.2 76L850.2 72.9L853.2 69.7L856.2 66.6L859.2 63.5L862.2 60.3L865.2 57.3L868.1 54.2L871.1 51.1L874 48.1L876.8 45.2L879.5 42.4L881.9 39.7L883.7 37.4L884.4 35.7L882.9 35L878.1 35.6M931.7 37.3L936.2 39.6L941.6 42.2L947.5 45" stroke="#ec84ef"/>
<path d="M731 319L730.7 315.8L730.5 312.6L730.3 309.5L730.1 306.3L730 303.1L730 299.9L730 296.7L730 293.5L730.1 290.4L730.3 287.2L730.5 284L730.7 280.8L731 277.6L731.4 274.5L731.8 271.3L732.2 268.1L732.7 264.9L733.3 261.7L733.9 258.6L734.5 255.4L735.2 252.2L736 249L736.8 245.8L737.6 242.7L738.5 239.5L739.4 236.3L740.4 233.1L741.4 230L742.5 226.8L743.6 223.6L744.8 220.4L746 217.3L747.3 214.1L748.6 210.9L749.9 207.7L751.3 204.6L752.7 201.4L754.2 198.2L755.7 195.1L757.3 191.9L758.9 188.7L760.5 185.5L762.2 182.4L763.9 179.2L765.7 176L767.5 172.9L769.3 169.7L771.2 166.6L773.1 163.4L775 160.2L777 157.1L779 153.9L781.1 150.8L783.1 147.6L785.3 144.5L787.4 141.3L789.6 138.2L791.8 135.1L794 131.9L796.3 128.8L798.5 125.7L800.9 122.6L803.2 119.4L805.5 116.3L807.9 113.2L810.3 110.1L812.7 107L815.2 103.9L817.6 100.9L820 97.8L822.5 94.7L825 91.7L827.4 88.7L829.9 85.7L832.4 82.7L834.8 79.7L837.3 76.8L839.6 73.9L842 71.1L844.3 68.2L846.5 65.5L848.7 62.8L850.7 60.3L852.5 57.8L854.1 55.5L855.4 53.4L856.2 51.5L856.5 50L856.1 48.8L854.7 48L852.2 47.7L848.5 47.9L843.5 48.6L837.3 49.7L830 51.2M982 53.1L985.9 55.1L990.4 57.4L995.3 59.8L1000.6 62.4L1006.1 65L1011.8 67.8L1017.7 70.5L1023.6 73.4L1029.7 76.3L1035.8 79.2" stroke="#ec84ef"/>
<path d="M736 317L735.9 313.8L735.9 310.6L735.9 307.3L736 304.1L736.2 300.9L736.3 297.7L736.6 294.4L736.9 291.2L737.2 288L737.6 284.8L738 281.6L738.5 278.3L739 275.1L739.6 271.9L740.2 268.7L740.8 265.5L741.6 262.2L742.3 259L743.1 255.8L744 252.6L744.9 249.3L745.9 246.1L746.9 242.9L747.9 239.7L749 236.5L750.2 233.2L751.3 230L752.6 226.8L753.8 223.6L755.2 220.4L756.5 217.1L757.9 213.9L759.4 210.7L760.9 207.5L762.4 204.3L764 201L765.6 197.8L767.2 194.6L768.9 191.4L770.7 188.2L772.4 184.9L774.3 181.7L776.1 178.5L778 175.3L779.9 172.1L781.9 168.8L783.9 165.6L785.9 162.4L788 159.2L790.1 156L792.2 152.8L794.4 149.5L796.6 146.3L798.8 143.1L801.1 139.9L803.4 136.7L805.7 133.5L808 130.3L810.4 127L812.8 123.8L815.2 120.6L817.7 117.4L820.1 114.2L822.6 111L825.1 107.8L827.7 104.6L830.2 101.4L832.8 98.2L835.4 95L838 91.8L840.7 88.6L843.3 85.4L846 82.2L848.7 79L851.3 75.8L854 72.7L856.7 69.5L859.4 66.4L862.1 63.2L864.8 60.1L867.5 57L870.1 53.9L872.8 50.9L875.3 47.9L877.7 45L880 42.3L881.9 39.8L883.1 37.7L883 36.3L880.6 35.9L875.1 36.8M936.6 38.5L941.3 40.8L947 43.5L953.1 46.3L959.6 49.2L966.2 52.2L973 55.3L979.8 58.4L986.7 61.5L993.5 64.6L1000.4 67.8L1007.3 70.9L1014.2 74.1L1021.1 77.3L1027.9 80.4L1034.7 83.6L1041.5 86.8L1048.3 90" stroke="#ec84ef"/>
<path d="M731.8 318.6L733.2 315.7L734.7 312.8L736.2 309.9L737.8 307L739.4 304.1L741 301.2L742.7 298.3L744.4 295.4L746.1 292.6L747.9 289.7L749.7 286.8L751.6 283.9L753.5 281L755.4 278.1L757.4 275.3L759.4 272.4L761.4 269.5L763.5 266.6L765.5 263.8L767.7 260.9L769.8 258.1L772 255.2L774.2 252.4L776.5 249.5L778.7 246.7L781 243.8L783.4 241L785.7 238.2L788.1 235.4L790.5 232.5L792.9 229.7L795.4 226.9L797.8 224.1L800.3 221.4L802.8 218.6L805.4 215.8L807.9 213.1L810.5 210.3L813 207.6L815.6 204.8L818.2 202.1L820.9 199.4L823.5 196.7L826.2 194.1L828.8 191.4L831.5 188.7L834.2 186.1L836.9 183.5L839.5 180.9L842.2 178.3L845 175.7L847.7 173.2L850.4 170.6L853.1 168.1L855.8 165.7L858.5 163.2L861.3 160.8L864 158.4L866.7 156L869.4 153.7L872.2 151.3L874.9 149.1L877.6 146.8L880.3 144.6L883 142.5L885.7 140.4L888.4 138.3L891.1 136.3L893.8 134.3L896.5 132.4L899.2 130.5L901.9 128.7L904.5 127L907.2 125.3L909.9 123.7L912.6 122.2L915.3 120.8L918 119.4L920.7 118.1L923.5 116.9L926.3 115.9L929 114.9L931.8 114L934.7 113.2L937.6 112.5L940.5 111.9L943.5 111.4L946.5 111.1L949.6 110.8L952.7 110.7L955.9 110.7L959.2 110.8L962.5 111L965.9 111.3L969.4 111.8L973 112.3L976.7 113" stroke="#ec84ef"/>
<path d="M717.8 318.5L717.1 315.4L716.5 312.2L715.9 309.1L715.4 306L714.9 302.9L714.5 299.7L714.1 296.6L713.8 293.5L713.6 290.4L713.3 287.2L713.2 284.1L713.1 281L713 277.9L713 274.7L713.1 271.6L713.2 268.5L713.4 265.4L713.6 262.2L713.8 259.1L714.2 256L714.5 252.9L714.9 249.8L715.4 246.7L715.9 243.5L716.5 240.4L717.1 237.3L717.8 234.2L718.6 231.1L719.3 228L720.2 224.9L721 221.8L722 218.7L722.9 215.6L723.9 212.5L725 209.4L726.1 206.3L727.3 203.3L728.5 200.2L729.7 197.1L731 194L732.4 191L733.8 187.9L735.2 184.8L736.6 181.8L738.2 178.7L739.7 175.7L741.3 172.6L742.9 169.6L744.6 166.6L746.2 163.6L748 160.6L749.7 157.5L751.5 154.6L753.3 151.6L755.2 148.6L757 145.6L758.9 142.7L760.9 139.7L762.8 136.8L764.8 133.9L766.7 131L768.7 128.1L770.7 125.2L772.7 122.4L774.7 119.6L776.7 116.8L778.7 114L780.7 111.3L782.7 108.5L784.6 105.9L786.5 103.2L788.4 100.7L790.2 98.1L791.9 95.6L793.6 93.2L795.2 90.8L796.7 88.6L798.1 86.4L799.3 84.2L800.3 82.2L801.2 80.4L801.8 78.6L802.2 77L802.2 75.5L801.9 74.2L801.2 73.1L800.1 72.2L798.5 71.6L796.4 71.1L793.8 70.9L790.6 70.9L786.8 71.1L782.4 71.5L777.4 72.2L771.8 73.1L765.7 74.2L759.1 75.5L751.9 77L744.3 78.6M1064.1 80.3L1067 82.2L1070.3 84.2L1073.9 86.3L1077.7 88.5L1081.7 90.8" stroke="#ec84ef"/>
<path d="M576.3 173L581.4 169.9L586.6 166.8L591.8 163.8L597.2 160.7L602.6 157.6L608.1 154.5L613.7 151.4L619.4 148.4L625.1 145.3L630.9 142.2L636.8 139.2L642.7 136.1L648.7 133L654.8 130L660.9 126.9L667.1 123.8L673.4 120.8L679.7 117.7L686 114.7L692.4 111.6L698.9 108.6L705.4 105.6L711.9 102.5L718.5 99.5L725.1 96.5L731.7 93.5L738.3 90.5L745 87.5" stroke="#000ecd"/>
<path d="M535 175.8L541.4 172.7L547.9 169.7L554.5 166.6L561.2 163.6L568 160.5L574.9 157.4L581.9 154.4L588.9 151.3L596 148.3L603.2 145.2L610.5 142.2L617.8 139.1L625.2 136.1L632.7 133.1L640.3 130L647.9 127L655.5 124L663.3 120.9L671 117.9L678.8 114.9L686.7 111.9L694.6 108.9L702.6 105.9L710.5 102.9L718.5 99.9L726.6 97L734.6 94L742.7 91.1L750.7 88.1L758.8 85.2L766.8 82.3L774.9 79.4L782.8 76.6L790.8 73.8L798.7 71L806.5 68.3L814.1 65.6L821.7 63" stroke="#000ecd"/>
<path d="M558 177L563.3 173.9L568.7 170.7L574.1 167.6L579.7 164.5L585.4 161.4L591.1 158.2L596.9 155.1L602.8 152L608.8 148.9L614.9 145.7L621 142.6L627.3 139.5L633.6 136.4L639.9 133.3L646.4 130.2L652.9 127.1L659.4 123.9L666.1 120.8L672.8 117.7L679.5 114.6L686.3 111.5L693.1 108.4L700 105.4L707 102.3L714 99.2L721 96.1L728 93L735.1 90L742.2 86.9L749.3 83.9L756.4 80.9L763.6 77.9L770.7 74.9L777.8 71.9L784.8 68.9L791.8 66L798.7 63.1L805.5 60.3L812.2 57.5L818.6 54.8L824.7 52.3M970.5 49.8L961.6 47.6L953.5 45.6L946.4 44L940.5 42.9L936.2 42.4L933.3 42.5" stroke="#000ecd"/>
<path d="M583 172L588 168.9L593.1 165.8L598.3 162.6L603.6 159.5L608.9 156.4L614.4 153.3L619.9 150.2L625.5 147.1L631.1 143.9L636.8 140.8L642.6 137.7L648.5 134.6L654.4 131.5L660.4 128.4L666.4 125.4L672.5 122.3L678.7 119.2L684.9 116.1L691.1 113L697.4 110L703.7 106.9L710.1 103.9L716.5 100.8L722.9 97.8L729.3 94.8L735.8 91.8L742.2 88.8L748.7 85.8L755.1 82.8L761.5 79.9L767.9 77L774.2 74.1L780.5 71.3L786.6 68.5L792.6 65.8L798.5 63.1L804.1 60.6L809.4 58.1L814.3 55.8M982.6 53.6L974.3 51.7L966.8 50.1L960.3 48.8L954.9 47.9L950.7 47.4L947.7 47.5L945.8 48L944.8 49L944.6 50.4L945 52.2L945.9 54.1L947.1 56.3L948.6 58.7L950.2 61.2L952 63.8L953.8 66.5L955.8 69.2" stroke="#000ecd"/>
<path d="M815.8 211.7L817.1 208.5L818.4 205.4L819.7 202.2L821.1 199L822.5 195.9L823.9 192.7L825.3 189.5L826.8 186.4L828.3 183.2L829.7 180.1L831.3 176.9L832.8 173.7L834.4 170.6L835.9 167.4L837.5 164.3L839.1 161.1L840.8 157.9L842.4 154.8L844.1 151.6L845.7 148.5L847.4 145.3L849.2 142.2L850.9 139L852.6 135.9L854.4 132.7L856.1 129.6L857.9 126.5L859.7 123.3L861.5 120.2L863.3 117L865.1 113.9L866.9 110.8L868.8 107.7L870.6 104.5L872.5 101.4L874.3 98.3L876.2 95.2L878.1 92.1L879.9 89.1L881.8 86L883.7 82.9L885.5 79.9L887.4 76.8L889.3 73.8L891.1 70.8L893 67.9L894.9 65L896.7 62.1L898.6 59.3L900.4 56.5L902.2 53.9L904.1 51.3L905.9 49L907.8 46.9L909.8 45.1L912 43.7L914.5 42.9L917.5 42.7L921.2 43.2L925.6 44.3L930.6 45.8L936.3 47.8L942.4 50L948.9 52.4L955.7 55L962.6 57.7L969.7 60.5L977 63.4L984.3 66.3L991.7 69.2" stroke="#00fb73"/>
<path d="M698 235L696.6 233.1L695.1 231.2L693.7 229.3L692.3 227.4L690.9 225.6L689.5 223.7L688.1 221.9L686.7 220.1L685.4 218.4L684 216.6L682.6 214.9L681.2 213.2L679.9 211.5L678.5 209.9L677.1 208.3L675.7 206.7L674.4 205.1L673 203.6L671.5 202.1L670.1 200.6L668.7 199.1L667.2 197.7L665.8 196.3L664.3 195L662.7 193.7L661.2 192.4L659.6 191.2L658 190L656.4 188.8L654.7 187.7L653 186.6L651.3 185.5L649.5 184.5L647.6 183.6L645.8 182.7L643.8 181.8L641.8 181L639.8 180.2L637.7 179.5L635.6 178.8L633.3 178.1L631.1 177.6L628.7 177L626.3 176.5L623.8 176.1L621.2 175.7L618.6 175.4L615.9 175.1L613.1 174.9L610.2 174.7L607.2 174.6L604.2 174.5" stroke="#a4ff28"/>
</g>
<g fill="none" stroke-width="1.6" stroke-linecap="butt">
<path d="M487.5 181.7L450.2 191.8" stroke="#ff1d00"/>
<path d="M555.8 161.7L506.7 172.8" stroke="#ff1d00"/>
<path d="M610.8 149.5L580.8 153.7" stroke="#ff1d00"/>
<path d="M606.7 162L591.3 163.3" stroke="#ff1d00"/>
<path d="M585 175.8L545.5 181.2" stroke="#ff1d00"/>
<path d="M570.8 180.8L550.3 182.8" stroke="#ff1d00"/>
<path d="M735 97.5L731.6 97.5L727.8 97.7L723.6 98.1L719.1 98.6L714.3 99.2L709 100L703.5 100.9L697.6 102L691.4 103.1L684.9 104.4L678.1 105.8L671 107.4L663.7 109L656.1 110.7L648.3 112.5" stroke="#ff1d00"/>
<path d="M691.7 160.8L683.3 153.3" stroke="#ff1d00"/>
<path d="M723.3 135L721.7 128.3" stroke="#ff1d00"/>
<path d="M733.3 141.7L732.5 135" stroke="#ff1d00"/>
<path d="M737.5 120L733.3 114.2" stroke="#ff1d00"/>
<path d="M795 82.5L794.1 78.5L789.9 76.1L781.7 75.5" stroke="#ff1d00"/>
<path d="M880 50L897.5 31.7" stroke="#ff1d00"/>
<path d="M915.8 31.7L940 42.5" stroke="#ff1d00"/>
<path d="M969.2 75L1026.7 101.7" stroke="#ff1d00"/>
<path d="M990 98.3L1016.7 110" stroke="#ff1d00"/>
<path d="M1069.2 88.3L1095.8 101.7" stroke="#ff1d00"/>
<path d="M1095.8 97.5L1117.5 109.2" stroke="#ff1d00"/>
<path d="M920.8 109.2L926.1 108.4L931.6 107.9L937.1 107.8L942.8 108L948.7 108.6L954.8 109.6L961 110.9L967.5 112.5" stroke="#ff1d00"/>
<path d="M965 138.7L975.3 140" stroke="#ff1d00"/>
<path d="M896.7 92.5L905.8 87.5" stroke="#ff1d00"/>
<path d="M1213.3 136.7L1225.8 145.8" stroke="#ff1d00"/>
<path d="M1273.3 163.3L1284.2 173" stroke="#ff1d00"/>
<path d="M638.3 140L618.3 143" stroke="#dd11ff"/>
<path d="M621.7 166.3L612.5 167" stroke="#dd11ff"/>
<path d="M703.3 130.8L699.8 129.2L695.6 127.9L690.8 127L685.2 126.5L678.9 126.4L671.7 126.7" stroke="#dd11ff"/>
<path d="M760.8 103.3L758.6 99.4L754.2 96.7" stroke="#dd11ff"/>
<path d="M900 45L910 40.8" stroke="#dd11ff"/>
<path d="M910.8 76.7L915.8 75.5L921 74.9L926.5 74.9L932.2 75.5L938.3 76.7" stroke="#dd11ff"/>
<path d="M962.5 77.5L1042.5 115.8" stroke="#dd11ff"/>
<path d="M1045 118.3L1055 123" stroke="#dd11ff"/>
<path d="M966.7 60.8L1040 95" stroke="#dd11ff"/>
<path d="M1040 95L1144.2 148.7" stroke="#dd11ff"/>
<path d="M984.2 105.8L1000.8 112.5" stroke="#dd11ff"/>
<path d="M897.5 65.8L903.3 63.3" stroke="#dd11ff"/>
<path d="M1217.5 133L1225.8 138" stroke="#dd11ff"/>
<path d="M947.5 45L1005 71.7" stroke="#ec84ef"/>
<path d="M1035.8 79.2L1072.5 101.7" stroke="#ec84ef"/>
<path d="M1048.3 90L1117.5 120" stroke="#ec84ef"/>
<path d="M976.7 113L1045.8 135.8" stroke="#ec84ef"/>
<path d="M1081.7 90.8L1096.7 97.5" stroke="#ec84ef"/>
<path d="M745 87.5L825 53" stroke="#000ecd"/>
<path d="M821.7 63L844.2 55" stroke="#000ecd"/>
<path d="M933.3 42.5L934.8 41.8L937.5 41.8L941.8 42.3L947.5 43.4L954.4 44.9L962.3 46.7" stroke="#000ecd"/>
<path d="M955.8 69.2L962.5 77.5" stroke="#000ecd"/>
<path d="M991.7 69.2L1002.5 73.3" stroke="#00fb73"/>
<path d="M604.2 174.5L585.8 175" stroke="#a4ff28"/>
<path d="M508.3 182.8L483.3 195" stroke="#6a6a6a"/>
<path d="M526.7 189.2L516.7 197.5" stroke="#6a6a6a"/>
<path d="M547.5 157.5L543.3 160.8" stroke="#6a6a6a"/>
<path d="M706.7 108.3L673.3 126.7" stroke="#6a6a6a"/>
<path d="M766.7 92.5L774.2 92.6L780.1 93.5L784.6 95.2L787.8 97.7L790 100.8" stroke="#6a6a6a"/>
<path d="M800 113.3L836.7 93.3" stroke="#6a6a6a"/>
<path d="M840 97.5L873.3 85" stroke="#6a6a6a"/>
<path d="M863.3 84.2L893.3 76.7" stroke="#6a6a6a"/>
<path d="M815 143.3L828.3 129.2" stroke="#6a6a6a"/>
<path d="M733.3 164.2L745 155.8" stroke="#6a6a6a"/>
<path d="M843.3 52.5L852.3 53.6L853.1 58.9L850 66.7" stroke="#6a6a6a"/>
<path d="M838.3 51.7L853.3 46.7" stroke="#6a6a6a"/>
<path d="M960 60L1003.3 76.7" stroke="#6a6a6a"/>
<path d="M990.8 85.8L992.9 84.2L995.5 82.9L998.7 82L1002.6 81.5L1007.3 81.5L1012.8 81.8L1019 82.6L1026.1 83.7L1033.9 85.2L1042.5 87L1051.7 89.2" stroke="#6a6a6a"/>
<path d="M1012.5 68.3L1037.5 75.8" stroke="#6a6a6a"/>
<path d="M1125 106.7L1156.7 117.5" stroke="#6a6a6a"/>
<path d="M1109.2 120L1125 124.7" stroke="#6a6a6a"/>
<path d="M1073.3 124.2L1086.7 126.7" stroke="#6a6a6a"/>
<path d="M1044.2 119.2L1049.2 128.3" stroke="#6a6a6a"/>
<path d="M912.5 100.8L930 115" stroke="#6a6a6a"/>
<path d="M906.7 81.7L918.3 63.3" stroke="#6a6a6a"/>
<path d="M944.2 68.3L951.7 75" stroke="#6a6a6a"/>
<path d="M731.7 206.7L758.3 172.5" stroke="#6a6a6a"/>
<path d="M782.5 184.2L805 170" stroke="#6a6a6a"/>
<path d="M1255.8 157.5L1298.3 171.3" stroke="#6a6a6a"/>
<path d="M880 78.3L890 76.7" stroke="#6a6a6a"/>
<path d="M899 62L907 68" stroke="#6a6a6a"/>
<path d="M935 48L937 55" stroke="#6a6a6a"/>
<path d="M872 55L878 60" stroke="#6a6a6a"/>
<path d="M700 150L712 141" stroke="#6a6a6a"/>
<path d="M760 120L772 112" stroke="#6a6a6a"/>
<path d="M1160 125L1172 131" stroke="#6a6a6a"/>
<path d="M1020 105L1030 113" stroke="#6a6a6a"/>
<path d="M650 135L660 128" stroke="#6a6a6a"/>
</g>
<g fill="#ff6347">
<circle cx="450.2" cy="191.8" r="1.4"/>
<circle cx="506.7" cy="172.8" r="1.4"/>
<circle cx="580.8" cy="153.7" r="1.4"/>
<circle cx="591.3" cy="163.3" r="1.4"/>
<circle cx="545.5" cy="181.2" r="1.4"/>
<circle cx="550.3" cy="182.8" r="1.4"/>
<circle cx="648.3" cy="112.5" r="1.4"/>
<circle cx="683.3" cy="153.3" r="1.4"/>
<circle cx="721.7" cy="128.3" r="1.4"/>
<circle cx="732.5" cy="135" r="1.4"/>
<circle cx="733.3" cy="114.2" r="1.4"/>
<circle cx="781.7" cy="75.5" r="1.4"/>
<circle cx="897.5" cy="31.7" r="1.4"/>
<circle cx="940" cy="42.5" r="1.4"/>
<circle cx="1026.7" cy="101.7" r="1.4"/>
<circle cx="1016.7" cy="110" r="1.4"/>
<circle cx="1095.8" cy="101.7" r="1.4"/>
<circle cx="1117.5" cy="109.2" r="1.4"/>
<circle cx="967.5" cy="112.5" r="1.4"/>
<circle cx="975.3" cy="140" r="1.4"/>
<circle cx="905.8" cy="87.5" r="1.4"/>
<circle cx="1225.8" cy="145.8" r="1.4"/>
<circle cx="1284.2" cy="173" r="1.4"/>
<circle cx="618.3" cy="143" r="1.4"/>
<circle cx="612.5" cy="167" r="1.4"/>
<circle cx="671.7" cy="126.7" r="1.4"/>
<circle cx="754.2" cy="96.7" r="1.4"/>
<circle cx="910" cy="40.8" r="1.4"/>
<circle cx="938.3" cy="76.7" r="1.4"/>
<circle cx="1042.5" cy="115.8" r="1.4"/>
<circle cx="1055" cy="123" r="1.4"/>
<circle cx="1040" cy="95" r="1.4"/>
<circle cx="1144.2" cy="148.7" r="1.4"/>
<circle cx="1000.8" cy="112.5" r="1.4"/>
<circle cx="903.3" cy="63.3" r="1.4"/>
<circle cx="1225.8" cy="138" r="1.4"/>
<circle cx="1005" cy="71.7" r="1.4"/>
<circle cx="1072.5" cy="101.7" r="1.4"/>
<circle cx="1117.5" cy="120" r="1.4"/>
<circle cx="1045.8" cy="135.8" r="1.4"/>
<circle cx="1096.7" cy="97.5" r="1.4"/>
<circle cx="825" cy="53" r="1.4"/>
<circle cx="844.2" cy="55" r="1.4"/>
<circle cx="962.3" cy="46.7" r="1.4"/>
<circle cx="962.5" cy="77.5" r="1.4"/>
<circle cx="1002.5" cy="73.3" r="1.4"/>
<circle cx="585.8" cy="175" r="1.4"/>
<circle cx="1357.2" cy="193" r="1.4"/>
</g>
<path d="M727.9 256.8h6M730.9 253.8v6M725.2 266.9h6M728.2 263.9v6M723.7 267.1h6M726.7 264.1v6M731.3 256.6h6M734.3 253.6v6M728 268h6M731 265v6M726.6 267.9h6M729.6 264.9v6M724.3 257.6h6M727.3 254.6v6M726.8 268.5h6M729.8 265.5v6M722 264h6M725 261v6M726.3 254.3h6M729.3 251.3v6M726.4 267.4h6M729.4 264.4v6M726.8 266.2h6M729.8 263.2v6M729.3 256.5h6M732.3 253.5v6M724.2 270.9h6M727.2 267.9v6M726.9 269.9h6M729.9 266.9v6M726.9 253.7h6M729.9 250.7v6M724.9 267.3h6M727.9 264.3v6M727.1 268h6M730.1 265v6M727.4 253.1h6M730.4 250.1v6M724.6 269.9h6M727.6 266.9v6M723.9 268h6M726.9 265v6M729.6 251.8h6M732.6 248.8v6M725.8 270.1h6M728.8 267.1v6M727 246.7h6M730 243.7v6M731.7 245.5h6M734.7 242.5v6M733.2 247.3h6M736.2 244.3v6M728.3 249.6h6M731.3 246.6v6M733.7 249.9h6M736.7 246.9v6M735.6 248.4h6M738.6 245.4v6M732.3 244.3h6M735.3 241.3v6M733.5 246h6M736.5 243v6M730.9 244.3h6M733.9 241.3v6M729.6 246.2h6M732.6 243.2v6M735.2 242.4h6M738.2 239.4v6M728.4 248.1h6M731.4 245.1v6M735.6 248.9h6M738.6 245.9v6M714 318h6M717 315v6M728 319h6M731 316v6M733 317h6M736 314v6M728.8 318.6h6M731.8 315.6v6M714.8 318.5h6M717.8 315.5v6M573.3 173h6M576.3 170v6M532 175.8h6M535 172.8v6M555 177h6M558 174v6M580 172h6M583 169v6M812.8 211.7h6M815.8 208.7v6M695 235h6M698 232v6" stroke="#ff0000" stroke-width="1" fill="none"/>
<g fill="none" stroke-width="2.1">
<path d="M753.1 267.1L752.8 268.3L752.3 269.6L751.8 270.8L751.3 272.1L750.7 273.3L750 274.5L749.3 275.7L748.6 276.8L747.8 278L746.9 279L746.1 280.1L745.1 281.1L744.2 282.1L743.1 283.1L742.1 284L741 284.8L739.9 285.6L738.8 286.4L737.6 287.1L736.4 287.7L735.2 288.3L734 288.8L732.7 289.3L731.4 289.7L730.2 290.1L728.9 290.3L727.6 290.6L726.3 290.7L725.1 290.8L723.8 290.9L722.5 290.8L721.3 290.7L720.1 290.6L718.8 290.3L717.7 290.1L716.5 289.7L715.4 289.3L714.3 288.8L713.2 288.3L712.2 287.7L711.2 287.1L710.3 286.4L709.4 285.6L708.6 284.8L707.8 284L707.1 283.1L706.5 282.1L705.9 281.1L705.4 280.1L705 279L704.6 278L704.3 276.8L704.1 275.7L703.9 274.5L703.8 273.3L703.8 272.1L703.9 270.8L704.1 269.6L704.3 268.3L704.6 267.1L705 265.8L705.4 264.5L706 263.3L706.6 262L707.3 260.8L708 259.6L708.8 258.3L709.7 257.2L710.6 256L711.6 254.9L712.6 253.8L713.7 252.7L714.8 251.7L716 250.7L717.2 249.7L718.5 248.8L719.8 248L721.1 247.2L722.4 246.4L723.7 245.7L725.1 245.1L726.4 244.5L727.8 244L729.2 243.6L730.5 243.2L731.9 242.9L733.2 242.7L734.5 242.5L735.9 242.4L737.1 242.3L738.4 242.4L739.6 242.5L740.8 242.7L741.9 242.9L743.1 243.2L744.1 243.6L745.1 244L746.1 244.5L747.1 245.1L747.9 245.7L748.8 246.4L749.5 247.2L750.2 248L750.9 248.8L751.5 249.7L752 250.7L752.5 251.7L752.9 252.7L753.3 253.8L753.6 254.9L753.8 256L754 257.2L754.1 258.3L754.1 259.6L754.1 260.8L754 262L753.9 263.3L753.7 264.5L753.5 265.8L753.1 267.1Z" stroke="#ff1d00"/>
<path d="M760.6 246.3L760.1 247.5L759.6 248.8L758.9 250L758.3 251.3L757.6 252.5L756.8 253.7L756 254.8L755.1 256L754.2 257.1L753.2 258.2L752.2 259.2L751.2 260.3L750.1 261.2L749 262.2L747.9 263.1L746.7 263.9L745.5 264.7L744.3 265.4L743.1 266.1L741.8 266.8L740.5 267.3L739.3 267.9L738 268.3L736.7 268.7L735.4 269.1L734 269.4L732.7 269.6L731.4 269.7L730.2 269.8L728.9 269.9L727.6 269.8L726.4 269.7L725.2 269.6L724 269.4L722.8 269.1L721.7 268.7L720.6 268.3L719.6 267.9L718.6 267.3L717.6 266.8L716.7 266.1L715.8 265.4L715 264.7L714.3 263.9L713.6 263.1L713 262.2L712.5 261.2L712 260.3L711.6 259.2L711.2 258.2L711 257.1L710.8 256L710.7 254.8L710.6 253.7L710.7 252.5L710.8 251.3L711 250L711.3 248.8L711.6 247.5L712.1 246.3L712.6 245L713.2 243.7L713.8 242.5L714.6 241.2L715.4 240L716.2 238.7L717.1 237.5L718.1 236.3L719.2 235.2L720.3 234L721.4 232.9L722.6 231.8L723.9 230.8L725.1 229.8L726.4 228.8L727.8 227.9L729.1 227L730.5 226.2L731.9 225.5L733.3 224.8L734.8 224.1L736.2 223.6L737.6 223.1L739 222.6L740.4 222.2L741.8 221.9L743.2 221.7L744.5 221.5L745.8 221.4L747.1 221.3L748.4 221.4L749.6 221.5L750.7 221.7L751.9 221.9L752.9 222.2L754 222.6L755 223.1L755.9 223.6L756.7 224.1L757.6 224.8L758.3 225.5L759 226.2L759.6 227L760.2 227.9L760.7 228.8L761.2 229.8L761.5 230.8L761.9 231.8L762.1 232.9L762.3 234L762.4 235.2L762.5 236.3L762.4 237.5L762.4 238.7L762.2 240L762 241.2L761.8 242.5L761.4 243.7L761.1 245L760.6 246.3Z" stroke="#dd11ff"/>
<path d="M741.3 317.6L741.2 318.9L741.1 320.2L740.9 321.4L740.7 322.7L740.4 323.9L740.1 325.1L739.7 326.3L739.3 327.5L738.8 328.6L738.2 329.7L737.6 330.8L736.9 331.8L736.2 332.9L735.5 333.8L734.6 334.7L733.8 335.6L732.9 336.4L732 337.2L731 337.9L730 338.6L728.9 339.2L727.8 339.8L726.7 340.2L725.5 340.7L724.4 341L723.2 341.3L721.9 341.6L720.7 341.7L719.5 341.8L718.2 341.9L716.9 341.8L715.6 341.7L714.4 341.6L713.1 341.3L711.8 341L710.6 340.7L709.3 340.2L708.1 339.8L706.9 339.2L705.7 338.6L704.6 337.9L703.5 337.2L702.4 336.4L701.4 335.6L700.4 334.7L699.4 333.8L698.6 332.9L697.7 331.8L696.9 330.8L696.2 329.7L695.6 328.6L695 327.5L694.4 326.3L694 325.1L693.6 323.9L693.3 322.7L693 321.4L692.9 320.2L692.8 318.9L692.7 317.6L692.8 316.4L692.9 315.1L693.1 313.8L693.4 312.6L693.8 311.4L694.2 310.1L694.7 308.9L695.3 307.8L695.9 306.6L696.6 305.5L697.3 304.4L698.2 303.4L699 302.4L699.9 301.4L700.9 300.5L701.9 299.6L703 298.8L704.1 298L705.2 297.3L706.4 296.6L707.6 296L708.8 295.5L710 295L711.3 294.5L712.6 294.2L713.8 293.9L715.1 293.6L716.4 293.5L717.7 293.4L718.9 293.3L720.2 293.4L721.4 293.5L722.7 293.6L723.9 293.9L725.1 294.2L726.2 294.5L727.4 295L728.5 295.5L729.6 296L730.6 296.6L731.6 297.3L732.6 298L733.5 298.8L734.3 299.6L735.2 300.5L736 301.4L736.7 302.4L737.4 303.4L738 304.4L738.6 305.5L739.1 306.6L739.6 307.8L740 308.9L740.3 310.1L740.6 311.4L740.9 312.6L741.1 313.8L741.2 315.1L741.2 316.4L741.3 317.6Z" stroke="#ec84ef"/>
<path d="M576 176.8L573.7 178.1L571.3 179.3L569 180.6L566.6 181.8L564.2 183L561.8 184.1L559.4 185.3L557 186.4L554.6 187.5L552.2 188.5L549.8 189.5L547.4 190.5L545.1 191.4L542.8 192.3L540.5 193.1L538.3 193.9L536.1 194.7L533.9 195.4L531.8 196L529.8 196.6L527.8 197.2L525.8 197.7L524 198.1L522.2 198.5L520.4 198.8L518.8 199.1L517.2 199.3L515.7 199.4L514.3 199.5L513 199.6L511.8 199.5L510.7 199.4L509.6 199.3L508.7 199.1L507.9 198.8L507.2 198.5L506.6 198.1L506.1 197.7L505.8 197.2L505.5 196.6L505.4 196L505.4 195.4L505.6 194.7L505.8 193.9L506.2 193.1L506.7 192.3L507.4 191.4L508.2 190.5L509.1 189.5L510.1 188.5L511.3 187.5L512.6 186.4L514 185.3L515.6 184.1L517.2 183L519 181.8L521 180.6L523 179.3L525.1 178.1L527.3 176.8L529.7 175.6L532.1 174.3L534.6 173.1L537.2 171.8L539.9 170.5L542.6 169.3L545.4 168L548.2 166.8L551.1 165.6L554 164.4L556.9 163.3L559.8 162.2L562.7 161.1L565.6 160L568.5 159L571.4 158.1L574.2 157.2L576.9 156.3L579.6 155.5L582.2 154.7L584.7 154.1L587.1 153.4L589.4 152.9L591.6 152.4L593.6 152L595.6 151.7L597.4 151.4L599 151.2L600.5 151.1L601.9 151L603.1 151.1L604.1 151.2L604.9 151.4L605.6 151.7L606.2 152L606.5 152.4L606.7 152.9L606.8 153.4L606.7 154.1L606.4 154.7L606 155.5L605.4 156.3L604.7 157.2L603.8 158.1L602.8 159L601.7 160L600.5 161.1L599.1 162.2L597.6 163.3L596.1 164.4L594.4 165.6L592.6 166.8L590.8 168L588.9 169.3L586.9 170.5L584.8 171.8L582.7 173.1L580.5 174.3L578.3 175.6L576 176.8Z" stroke="#000ecd"/>
<path d="M849.4 212.4L849 213.7L848.6 214.9L848.1 216.2L847.6 217.4L846.9 218.6L846.3 219.8L845.6 221L844.8 222.1L844 223.2L843.1 224.3L842.2 225.3L841.2 226.3L840.2 227.2L839.2 228.2L838.1 229L837 229.8L835.8 230.6L834.7 231.3L833.5 232L832.2 232.6L831 233.2L829.7 233.7L828.5 234.2L827.2 234.6L825.9 234.9L824.6 235.2L823.3 235.4L822 235.5L820.7 235.6L819.5 235.7L818.2 235.6L817 235.5L815.7 235.4L814.5 235.2L813.4 234.9L812.2 234.6L811.1 234.2L810 233.7L809 233.2L808 232.6L807.1 232L806.2 231.3L805.3 230.6L804.6 229.8L803.8 229L803.1 228.2L802.5 227.2L802 226.3L801.5 225.3L801.1 224.3L800.7 223.2L800.5 222.1L800.2 221L800.1 219.8L800 218.6L800.1 217.4L800.1 216.2L800.3 214.9L800.5 213.7L800.8 212.4L801.2 211.2L801.7 209.9L802.2 208.6L802.8 207.4L803.4 206.1L804.1 204.9L804.9 203.7L805.7 202.5L806.6 201.3L807.6 200.1L808.6 199L809.6 197.9L810.7 196.8L811.9 195.8L813.1 194.8L814.3 193.9L815.5 193L816.8 192.2L818.1 191.4L819.4 190.7L820.7 190L822 189.4L823.4 188.9L824.7 188.4L826.1 188.1L827.4 187.7L828.7 187.5L830.1 187.3L831.4 187.2L832.6 187.1L833.9 187.2L835.1 187.3L836.3 187.5L837.5 187.7L838.6 188.1L839.7 188.4L840.7 188.9L841.7 189.4L842.7 190L843.6 190.7L844.5 191.4L845.3 192.2L846 193L846.7 193.9L847.4 194.8L847.9 195.8L848.4 196.8L848.9 197.9L849.3 199L849.6 200.1L849.9 201.3L850.1 202.5L850.2 203.7L850.3 204.9L850.3 206.1L850.3 207.4L850.1 208.6L850 209.9L849.7 211.2L849.4 212.4Z" stroke="#00fb73"/>
<path d="M722.9 235.2L722.1 236.4L721.4 237.7L720.6 238.9L719.7 240.2L718.8 241.4L717.8 242.6L716.8 243.7L715.8 244.9L714.7 246L713.6 247.1L712.5 248.1L711.3 249.1L710.1 250.1L708.8 251L707.6 251.9L706.3 252.7L705 253.5L703.6 254.3L702.3 254.9L701 255.6L699.6 256.2L698.3 256.7L696.9 257.1L695.5 257.5L694.2 257.9L692.8 258.2L691.5 258.4L690.2 258.5L688.9 258.6L687.6 258.7L686.4 258.6L685.1 258.5L683.9 258.4L682.8 258.2L681.7 257.9L680.6 257.5L679.6 257.1L678.6 256.7L677.6 256.2L676.8 255.6L675.9 254.9L675.2 254.3L674.5 253.5L673.9 252.7L673.3 251.9L672.8 251L672.4 250.1L672.1 249.1L671.8 248.1L671.6 247.1L671.5 246L671.5 244.9L671.6 243.7L671.7 242.6L671.9 241.4L672.2 240.2L672.6 238.9L673.1 237.7L673.7 236.4L674.3 235.2L675 233.9L675.8 232.7L676.7 231.4L677.6 230.1L678.6 228.9L679.7 227.6L680.8 226.4L682 225.2L683.3 224.1L684.6 222.9L685.9 221.8L687.3 220.7L688.8 219.7L690.2 218.6L691.7 217.7L693.2 216.8L694.8 215.9L696.3 215.1L697.8 214.3L699.4 213.6L700.9 213L702.5 212.4L704 211.9L705.5 211.4L706.9 211L708.4 210.7L709.8 210.5L711.2 210.3L712.5 210.2L713.8 210.1L715.1 210.2L716.2 210.3L717.4 210.5L718.5 210.7L719.5 211L720.4 211.4L721.3 211.9L722.1 212.4L722.9 213L723.6 213.6L724.2 214.3L724.8 215.1L725.2 215.9L725.7 216.8L726 217.7L726.3 218.6L726.5 219.7L726.6 220.7L726.6 221.8L726.6 222.9L726.5 224.1L726.4 225.2L726.2 226.4L725.9 227.6L725.5 228.9L725.1 230.1L724.6 231.4L724.1 232.7L723.5 233.9L722.9 235.2Z" stroke="#a4ff28"/>
</g>
<g fill="#fff" class="sl" text-anchor="middle">
<text x="699" y="237.7">CTA</text>
<text x="736.6" y="248.9">NTA</text>
<text x="729" y="269.9">STA</text>
<text x="717" y="320.9">OER</text>
<text x="825.4" y="214.7">AND</text>
<text x="554.5" y="178.6">KUM</text>
</g>
<g fill="#fff" class="mono">
<text x="316" y="29.6" xml:space="preserve">ES0016</text>
<text x="316" y="43" xml:space="preserve">Beg: 20251108 18:29:33 (sol = 226.25°)</text>
<text x="316" y="56.4" xml:space="preserve">End: 20251109 05:47:01 (sol = 226.72°)</text>
<text x="316" y="68.9" xml:space="preserve">--------------------------------------</text>
<text x="316" y="81.6" xml:space="preserve">...: 34</text>
<text x="316" y="94.5" xml:space="preserve">STA: 23</text>
<text x="316" y="107.6" xml:space="preserve">NTA: 13</text>
<text x="316" y="121" xml:space="preserve">OER: 5</text>
<text x="316" y="134" xml:space="preserve">KUM: 4</text>
<text x="316" y="147.4" xml:space="preserve">AND: 1</text>
<text x="316" y="160.4" xml:space="preserve">CTA: 1</text>
</g>
<clipPath id="axclip"><rect x="20.5" y="641.5" width="1765.0" height="201.0"/></clipPath>
<g fill="#505050" class="mon" text-anchor="end" clip-path="url(#axclip)">
<text transform="translate(149 644.2) rotate(-90)">APR</text>
<text transform="translate(295 644.3) rotate(-90)">MAY</text>
<text transform="translate(436.7 640.6) rotate(-90)">JUN</text>
<text transform="translate(576.7 640.4) rotate(-90)">JUL</text>
<text transform="translate(725 641.7) rotate(-90)">AUG</text>
<text transform="translate(872.3 643) rotate(-90)">SEP</text>
<text transform="translate(1016.7 643.3) rotate(-90)">OCT</text>
<text transform="translate(1170 645.1) rotate(-90)">NOV</text>
<text transform="translate(1319.3 643.8) rotate(-90)">DEC</text>
<text transform="translate(1469.3 640.6) rotate(-90)">JAN</text>
<text transform="translate(1627.7 645.5) rotate(-90)">FEB</text>
<text transform="translate(1766 645.2) rotate(-90)">MAR</text>
</g>
<path d="M75 842.5V641.5M219 842.5V641.5M365 842.5V641.5M506 842.5V641.5M651 842.5V641.5M797 842.5V641.5M940 842.5V641.5M1091 842.5V641.5M1239 842.5V641.5M1394 842.5V641.5M1548 842.5V641.5M1687 842.5V641.5" stroke="#808080" stroke-width="2.08" stroke-dasharray="2.08 3.44" fill="none"/>
<path d="M105.9 834H129.7M164.7 834H345.4M365.8 834H624.9M635.4 834H786.7M807.1 834H899.5M919.8 834H973M983.6 834H1066.2M1081.6 834H1203.5M1243.4 834H1326.1M1336.6 834H1355.5M1380.7 834H1443.7M1459.2 834H1512.4M1522.9 834H1546.7M1724 834H1747.7M1758.3 834H1782.1" stroke="#ec84ef" stroke-width="4" fill="none"/>
<path d="M164.7 818H188.5M223.6 818H286.6M311.8 818H340.5M365.8 818H492.5M507.9 818H654.3M704.1 818H737.7M772.7 818H845.5M870.8 818H987.7M1003.2 818H1017.1M1062 818H1213.3M1243.4 818H1267.2M1292.5 818H1316.3M1341.5 818H1365.3M1385.6 818H1429M1459.2 818H1483M1547.4 818H1571.2" stroke="#dd11ff" stroke-width="4" fill="none"/>
<path d="M164.7 802H188.5M257.9 802H487.6M507.9 802H615.1M625.6 802H718M728.6 802H825.9M949.2 802H1149.5M1160.1 802H1247.6M1258.2 802H1443.7M1459.2 802H1483M1552.4 802H1576.1" stroke="#ff1d00" stroke-width="4" fill="none"/>
<path d="M194.1 785H217.9M321.6 785H507.2M517.8 785H541.5M557 785H683.7M807.1 785H830.8M954.2 785H973M988.5 785H1125M1155.2 785H1218.2M1243.4 785H1267.2M1317 785H1340.8M1395.4 785H1419.2M1464.1 785H1649.7" stroke="#ffb20d" stroke-width="4" fill="none"/>
<path d="M341.2 769H369.9M409.9 769H448.4M468.7 769H492.5M527.6 769H546.4M561.9 769H590.6M615.8 769H649.4M959.1 769H987.7M1062 769H1085.8M1101.2 769H1125M1160.1 769H1193.7M1248.3 769H1272.1M1424.9 769H1512.4" stroke="#fff000" stroke-width="4" fill="none"/>
<path d="M419.7 752H443.5M532.5 752H556.2M566.8 752H590.6M620.7 752H742.6M968.9 752H1134.8M1184.6 752H1345.7M1469 752H1492.8" stroke="#a4ff28" stroke-width="4" fill="none"/>
<path d="M429.5 736H453.3M576.6 736H732.8M993.4 736H1105.4M1116 736H1223.1M1263.1 736H1291.7M1488.6 736H1512.4" stroke="#59d200" stroke-width="4" fill="none"/>
<path d="M591.3 720H615.1M655 720H772M1071.8 720H1242.7M1263.1 720H1286.8" stroke="#00fb73" stroke-width="4" fill="none"/>
<path d="M596.2 703H732.8M1091.4 703H1120.1M1199.3 703H1223.1M1272.9 703H1326.1" stroke="#00e0ff" stroke-width="4" fill="none"/>
<path d="M1111.1 687H1134.8" stroke="#000ecd" stroke-width="4" fill="none"/>
<g fill="#fff" class="bl" text-anchor="middle">
<text x="117.9" y="831.5">KSE</text>
<text x="255.2" y="831.5">ETA</text>
<text x="495.5" y="831.5">NZC</text>
<text x="711.2" y="831.5">NDA</text>
<text x="853.4" y="831.5">SPE</text>
<text x="946.6" y="831.5">ARD</text>
<text x="1025" y="831.5">EGE</text>
<text x="1142.7" y="831.5">NTA</text>
<text x="1284.9" y="831.5">MON</text>
<text x="1343.7" y="831.5">URS</text>
<text x="1412.4" y="831.5">AHY</text>
<text x="1485.9" y="831.5">GUM</text>
<text x="1535" y="831.5">OHY</text>
<text x="1736" y="831.5">XHE</text>
<text x="1770.3" y="831.5">EVI</text>
<text x="176.8" y="815.1">AVB</text>
<text x="255.2" y="815.1">ELY</text>
<text x="323.9" y="815.1">CAM</text>
<text x="431.7" y="815.1">SSG</text>
<text x="578.8" y="815.1">PCA</text>
<text x="721" y="815.1">AUD</text>
<text x="809.3" y="815.1">AUR</text>
<text x="931.9" y="815.1">DSX</text>
<text x="1010.3" y="815.1">OCU</text>
<text x="1137.8" y="815.1">OER</text>
<text x="1255.5" y="815.1">DKD</text>
<text x="1304.5" y="815.1">DSV</text>
<text x="1353.5" y="815.1">ALY</text>
<text x="1407.5" y="815.1">ILE</text>
<text x="1471.2" y="815.1">SCC</text>
<text x="1559.5" y="815.1">FEV</text>
<text x="176.8" y="798.8">LYR</text>
<text x="372.9" y="798.8">JMC</text>
<text x="559.2" y="798.8">JPE</text>
<text x="672" y="798.8">PAU</text>
<text x="775" y="798.8">NIA</text>
<text x="1049.5" y="798.8">STA</text>
<text x="1206.4" y="798.8">NOO</text>
<text x="1353.5" y="798.8">COM</text>
<text x="1471.2" y="798.8">NCC</text>
<text x="1564.4" y="798.8">FED</text>
<text x="206.2" y="782.5">HVI</text>
<text x="412.1" y="782.5">ARI</text>
<text x="529.8" y="782.5">SZC</text>
<text x="618.1" y="782.5">CAP</text>
<text x="819.1" y="782.5">NUE</text>
<text x="961.3" y="782.5">OCT</text>
<text x="1059.3" y="782.5">ORI</text>
<text x="1186.8" y="782.5">AMO</text>
<text x="1255.5" y="782.5">DPC</text>
<text x="1329" y="782.5">XVI</text>
<text x="1407.5" y="782.5">QUA</text>
<text x="1559.5" y="782.5">AAN</text>
<text x="353.3" y="766.1">TAH</text>
<text x="431.7" y="766.1">JEA</text>
<text x="480.8" y="766.1">JIP</text>
<text x="539.6" y="766.1">PPS</text>
<text x="578.8" y="766.1">ZCS</text>
<text x="632.8" y="766.1">GDR</text>
<text x="971.1" y="766.1">DRA</text>
<text x="1074.1" y="766.1">LUM</text>
<text x="1113.3" y="766.1">RPU</text>
<text x="1177" y="766.1">THA</text>
<text x="1260.4" y="766.1">PSU</text>
<text x="1471.2" y="766.1">XCB</text>
<text x="431.7" y="749.8">JRC</text>
<text x="544.5" y="749.8">CAN</text>
<text x="578.8" y="749.8">FAN</text>
<text x="681.8" y="749.8">PER</text>
<text x="1049.5" y="749.8">CTA</text>
<text x="1265.3" y="749.8">HYD</text>
<text x="1481" y="749.8">XUM</text>
<text x="441.5" y="733.4">COR</text>
<text x="657.3" y="733.4">SDA</text>
<text x="1049.5" y="733.4">LMI</text>
<text x="1167.2" y="733.4">LEO</text>
<text x="1275.1" y="733.4">EHY</text>
<text x="1500.6" y="733.4">ECV</text>
<text x="603.3" y="717">JXA</text>
<text x="716.1" y="717">KCG</text>
<text x="1157.4" y="717">AND</text>
<text x="1275.1" y="717">DAD</text>
<text x="667.1" y="700.7">ERI</text>
<text x="1108.4" y="700.7">SLD</text>
<text x="1211.4" y="700.7">ORS</text>
<text x="1299.6" y="700.7">GEM</text>
<text x="1123.1" y="684.4">KUM</text>
</g>
<path d="M114 834h8M118 830v8M241 834h8M245 830v8M511 834h8M515 830v8M707 834h8M711 830v8M834 834h8M838 830v8M962 834h8M966 830v8M987 834h8M991 830v8M1117 834h8M1121 830v8M1296 834h8M1300 830v8M1342 834h8M1346 830v8M1413 834h8M1417 830v8M1482 834h8M1486 830v8M1531 834h8M1535 830v8M1732 834h8M1736 830v8M1766 834h8M1770 830v8M173 818h8M177 814v8M256 818h8M260 814v8M324 818h8M328 814v8M438 818h8M442 814v8M599 818h8M603 814v8M717 818h8M721 814v8M794 818h8M798 814v8M940 818h8M944 814v8M1006 818h8M1010 814v8M1153 818h8M1157 814v8M1251 818h8M1255 814v8M1300 818h8M1304 814v8M1350 818h8M1354 814v8M1403 818h8M1407 814v8M1467 818h8M1471 814v8M1555 818h8M1559 814v8M175 802h8M179 798v8M379 802h8M383 798v8M545 802h8M549 798v8M683 802h8M687 798v8M742 802h8M746 798v8M1075 802h8M1079 798v8M1217 802h8M1221 798v8M1305 802h8M1309 798v8M1467 802h8M1471 798v8M1560 802h8M1564 798v8M202 785h8M206 781v8M401 785h8M405 781v8M526 785h8M530 781v8M639 785h8M643 781v8M815 785h8M819 781v8M960 785h8M964 781v8M1041 785h8M1045 781v8M1188 785h8M1192 781v8M1251 785h8M1255 781v8M1325 785h8M1329 781v8M1403 785h8M1407 781v8M1546 785h8M1550 781v8M356 769h8M360 765v8M427 769h8M431 765v8M477 769h8M481 765v8M536 769h8M540 765v8M571 769h8M575 765v8M631 769h8M635 765v8M974 769h8M978 765v8M1070 769h8M1074 765v8M1109 769h8M1113 765v8M1178 769h8M1182 765v8M1256 769h8M1260 765v8M1467 769h8M1471 765v8M428 752h8M432 748v8M540 752h8M544 748v8M575 752h8M579 748v8M704 752h8M708 748v8M1095 752h8M1099 748v8M1271 752h8M1275 748v8M1477 752h8M1481 748v8M438 736h8M442 732v8M631 736h8M635 732v8M1039 736h8M1043 732v8M1168 736h8M1172 732v8M1275 736h8M1279 732v8M1497 736h8M1501 732v8M599 720h8M603 716v8M727 720h8M731 716v8M1188 720h8M1192 716v8M1271 720h8M1275 716v8M688 703h8M692 699v8M1102 703h8M1106 699v8M1207 703h8M1211 699v8M1300 703h8M1304 699v8M1119 687h8M1123 683v8" stroke="#fff" stroke-width="2" fill="none"/>
<path d="M1129.5 842.5V641.5M1132.4 842.5V641.5" stroke="#ff0000" stroke-width="1.4" stroke-dasharray="5.2 2.2" fill="none"/>
<rect x="20.5" y="641.5" width="1765.0" height="201.0" fill="none" stroke="#fff" stroke-width="1.1"/>
<path d="M20.5 843v4.9M265.5 843v4.9M510.5 843v4.9M755.5 843v4.9M1001.5 843v4.9M1246.5 843v4.9M1491.5 843v4.9M1736.5 843v4.9" stroke="#fff" stroke-width="1.1" fill="none"/>
<g fill="#fff" class="tl" text-anchor="middle"><text x="20.4" y="862.2">0</text><text x="265.6" y="862.2">50</text><text x="510.7" y="862.2">100</text><text x="755.9" y="862.2">150</text><text x="1001.1" y="862.2">200</text><text x="1246.2" y="862.2">250</text><text x="1491.4" y="862.2">300</text><text x="1736.6" y="862.2">350</text></g>
<text x="902.5" y="882.2" fill="#fff" class="xl" text-anchor="middle">Solar longitude (deg)</text>
</svg>
</body></html>
